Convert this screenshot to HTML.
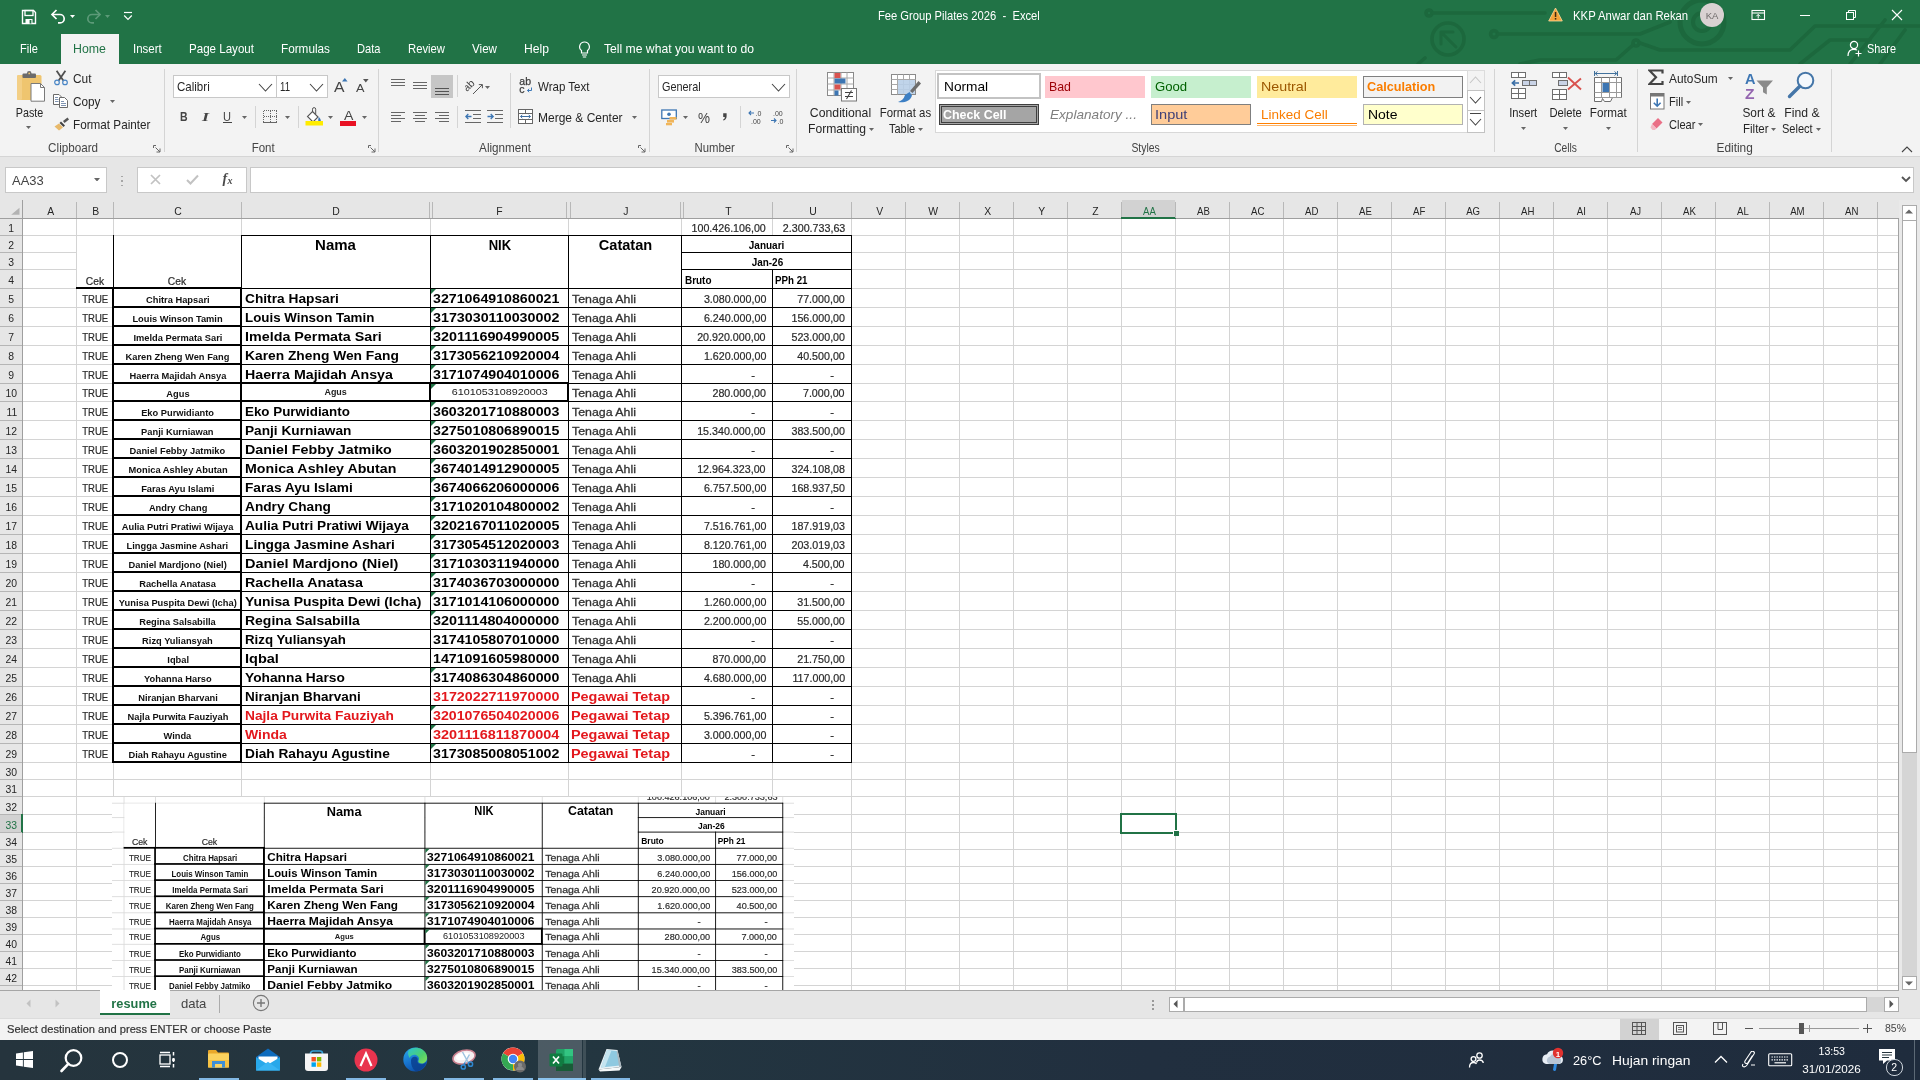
<!DOCTYPE html>
<html><head><meta charset="utf-8"><title>Fee Group Pilates 2026 - Excel</title>
<style>
html,body{margin:0;padding:0;background:#fff}
body{width:1920px;height:1080px;overflow:hidden;position:relative;font-family:"Liberation Sans",sans-serif}
.r{position:absolute;display:block}
.t{position:absolute;white-space:pre;display:block}
</style></head>
<body>
<div id="root" style="position:absolute;left:0;top:0;width:1920px;height:1080px;will-change:transform">
<div class="r" style="left:0px;top:0px;width:1920px;height:64px;background:#217346;"></div>
<svg class="r" style="left:1400px;top:0px;" width="520" height="64" viewBox="1400 0 520 64"><g fill="none" stroke="#1c683d" stroke-width="3.6" stroke-linecap="round" stroke-linejoin="round"><circle cx="1448" cy="39" r="16"/><path d="M1456 47 L1441 32 M1441 44 V32 H1453" stroke-width="3"/><circle cx="1429" cy="13" r="3"/><path d="M1433 13 H1545"/><circle cx="1494" cy="34" r="3.4"/><path d="M1498 34 H1640 L1670 22"/><circle cx="1636" cy="43" r="3"/><path d="M1633 45 L1616 60 H1540 L1520 64"/><path d="M1425 58 L1418 64"/><circle cx="1702" cy="22" r="22" stroke-width="5"/><circle cx="1702" cy="22" r="9" stroke-width="4"/><path d="M1640 43 L1660 50 H1790 L1815 26 H1920"/><path d="M1850 64 L1885 20 M1880 64 L1905 30 M1800 64 L1830 40 H1870"/></g></svg>
<span class="t" style="left:870.12px;top:9px;font-size:12.3px;line-height:14px;color:#fff;transform:scaleX(0.9113);transform-origin:50% 50%;">Fee Group Pilates 2026  -  Excel</span>
<span class="t" style="left:1573.30px;top:9px;font-size:12.3px;line-height:14px;color:#fff;transform:scaleX(0.9223);transform-origin:0 50%;">KKP Anwar dan Rekan</span>
<div class="r" style="left:61px;top:34px;width:58px;height:30px;background:#f3f3f3;"></div>
<span class="t" style="left:20.20px;top:42px;font-size:12.6px;line-height:14px;color:#fff;transform:scaleX(0.8767);transform-origin:0 50%;">File</span>
<span class="t" style="left:73.30px;top:42px;font-size:12.6px;line-height:14px;color:#217346;transform:scaleX(0.9803);transform-origin:0 50%;">Home</span>
<span class="t" style="left:133.30px;top:42px;font-size:12.6px;line-height:14px;color:#fff;transform:scaleX(0.9107);transform-origin:0 50%;">Insert</span>
<span class="t" style="left:189.20px;top:42px;font-size:12.6px;line-height:14px;color:#fff;transform:scaleX(0.9186);transform-origin:0 50%;">Page Layout</span>
<span class="t" style="left:281.25px;top:42px;font-size:12.6px;line-height:14px;color:#fff;transform:scaleX(0.9322);transform-origin:0 50%;">Formulas</span>
<span class="t" style="left:357.30px;top:42px;font-size:12.6px;line-height:14px;color:#fff;transform:scaleX(0.8829);transform-origin:0 50%;">Data</span>
<span class="t" style="left:408.00px;top:42px;font-size:12.6px;line-height:14px;color:#fff;transform:scaleX(0.8956);transform-origin:0 50%;">Review</span>
<span class="t" style="left:472.00px;top:42px;font-size:12.6px;line-height:14px;color:#fff;transform:scaleX(0.9231);transform-origin:0 50%;">View</span>
<span class="t" style="left:524.00px;top:42px;font-size:12.6px;line-height:14px;color:#fff;transform:scaleX(0.9647);transform-origin:0 50%;">Help</span>
<span class="t" style="left:604.00px;top:42px;font-size:12.6px;line-height:14px;color:#fff;transform:scaleX(0.9647);transform-origin:0 50%;">Tell me what you want to do</span>
<span class="t" style="left:1867.20px;top:42px;font-size:12.6px;line-height:14px;color:#fff;transform:scaleX(0.8625);transform-origin:0 50%;">Share</span>
<svg class="r" style="left:21px;top:9px;" width="16" height="16" viewBox="0 0 16 16"><path d="M1.5 1.5 H12.5 L14.5 3.5 V14.5 H1.5 Z" fill="none" stroke="#fff" stroke-width="1.4"/><rect x="4" y="1.5" width="8" height="5" fill="none" stroke="#fff" stroke-width="1.3"/><rect x="4.5" y="10" width="7" height="4.5" fill="#fff"/><rect x="8.6" y="11" width="1.8" height="3.5" fill="#217346"/></svg>
<svg class="r" style="left:50px;top:9px;" width="17" height="15" viewBox="0 0 17 15"><path d="M2 5.5 H10 a4.2 4.2 0 0 1 0 8.4 H8" fill="none" stroke="#fff" stroke-width="1.7"/><path d="M6.5 1 L2 5.5 L6.5 10" fill="none" stroke="#fff" stroke-width="1.7"/></svg>
<svg class="r" style="left:70px;top:15px;" width="5" height="3" viewBox="0 0 5 3"><path d="M0 0 H5 L2.5 3 Z" fill="#fff"/></svg>
<svg class="r" style="left:85px;top:9px;" width="17" height="15" viewBox="0 0 17 15"><path d="M15 5.5 H7 a4.2 4.2 0 0 0 0 8.4 H9" fill="none" stroke="#5c9a78" stroke-width="1.7"/><path d="M10.5 1 L15 5.5 L10.5 10" fill="none" stroke="#5c9a78" stroke-width="1.7"/></svg>
<svg class="r" style="left:105.2px;top:15px;" width="5" height="3" viewBox="0 0 5 3"><path d="M0 0 H5 L2.5 3 Z" fill="#5c9a78"/></svg>
<svg class="r" style="left:123px;top:11px;" width="10" height="10" viewBox="0 0 10 10"><path d="M1 1.5 H9" stroke="#fff" stroke-width="1.2"/><path d="M1.2 4.5 L5 8.3 L8.8 4.5" fill="none" stroke="#fff" stroke-width="1.2"/></svg>
<svg class="r" style="left:578px;top:41px;" width="13" height="17" viewBox="0 0 13 17"><path d="M6.5 1 a4.8 4.8 0 0 1 3 8.6 V12 H3.5 V9.6 A4.8 4.8 0 0 1 6.5 1 Z" fill="none" stroke="#fff" stroke-width="1.2"/><path d="M4 14 H9 M4.8 16 H8.2" stroke="#fff" stroke-width="1.1"/></svg>
<svg class="r" style="left:1548px;top:7px;" width="15" height="15" viewBox="0 0 15 15"><path d="M7.5 1 L14.3 14 H0.7 Z" fill="#f2a33a" stroke="#fbd9a0" stroke-width="0.8"/><rect x="6.8" y="5" width="1.5" height="5" fill="#3b2a10"/><rect x="6.8" y="11" width="1.5" height="1.6" fill="#3b2a10"/></svg>
<div class="r" style="left:1700px;top:3px;width:24px;height:24px;border-radius:12px;background:#d9d2d2"></div>
<span class="t" style="left:1705.66px;top:10px;font-size:9.5px;line-height:11px;color:#6e6a6a;">KA</span>
<svg class="r" style="left:1751px;top:9px;" width="15" height="12" viewBox="0 0 15 12"><rect x="1" y="1.5" width="12.5" height="9" fill="none" stroke="#fff" stroke-width="1.1"/><path d="M1 4 H13.5" stroke="#fff" stroke-width="1.1"/><path d="M7.2 9.5 V5.6 M5.3 7.3 L7.2 5.4 L9.1 7.3" fill="none" stroke="#fff" stroke-width="1"/></svg>
<div class="r" style="left:1800px;top:15px;width:10px;height:1px;background:#fff;"></div>
<svg class="r" style="left:1845px;top:9px;" width="12" height="12" viewBox="0 0 12 12"><rect x="1.5" y="3.5" width="7" height="7" fill="none" stroke="#fff" stroke-width="1"/><path d="M3.5 3.5 V1.5 H10.5 V8.5 H8.5" fill="none" stroke="#fff" stroke-width="1"/></svg>
<svg class="r" style="left:1891px;top:9px;" width="12" height="12" viewBox="0 0 12 12"><path d="M1 1 L11 11 M11 1 L1 11" stroke="#fff" stroke-width="1.1"/></svg>
<svg class="r" style="left:1847px;top:40px;" width="16" height="18" viewBox="0 0 16 18"><circle cx="7" cy="5" r="3.6" fill="none" stroke="#fff" stroke-width="1.2"/><path d="M1 16 C1 11 3.5 9.3 7 9.3 C8.3 9.3 9.3 9.6 10 10" fill="none" stroke="#fff" stroke-width="1.2"/><path d="M11.5 10.5 V16.5 M8.5 13.5 H14.5" stroke="#fff" stroke-width="1.2"/></svg>
<div class="r" style="left:0px;top:64px;width:1920px;height:92px;background:#f3f3f3;"></div>
<div class="r" style="left:0px;top:156px;width:1920px;height:1px;background:#d5d5d5;"></div>
<svg class="r" style="left:16px;top:71px;" width="30" height="32" viewBox="0 0 30 32"><rect x="1" y="4" width="24.5" height="25" rx="1.5" fill="#efc56f"/><rect x="1" y="4" width="5" height="25" rx="1.5" fill="#f3cf86"/><rect x="6.5" y="2.5" width="13.5" height="4.6" rx="1" fill="#6b6b6b"/><circle cx="13.2" cy="2.4" r="2.3" fill="#6b6b6b"/><circle cx="13.2" cy="2.4" r="0.9" fill="#efc56f"/><path d="M15 12.5 H24.5 L28.5 16.5 V30.2 H15 Z" fill="#fff" stroke="#7a7a7a" stroke-width="1"/><path d="M24.5 12.5 V16.5 H28.5" fill="none" stroke="#7a7a7a" stroke-width="1"/></svg>
<span class="t" style="left:13.70px;top:106px;font-size:12.2px;line-height:14px;color:#262626;transform:scaleX(0.8815);transform-origin:50% 50%;">Paste</span>
<svg class="r" style="left:26px;top:126.2px;" width="5" height="3" viewBox="0 0 5 3"><path d="M0 0 H5 L2.5 3 Z" fill="#666"/></svg>
<svg class="r" style="left:53px;top:70px;" width="16" height="16" viewBox="0 0 16 16"><path d="M3.6 0.8 L10.3 10.6 M12.4 0.8 L5.7 10.6" stroke="#505050" stroke-width="1.8"/><circle cx="4" cy="12.4" r="2.3" fill="none" stroke="#4a86c6" stroke-width="1.2"/><circle cx="12" cy="12.4" r="2.3" fill="none" stroke="#4a86c6" stroke-width="1.2"/></svg>
<span class="t" style="left:72.50px;top:72px;font-size:12.2px;line-height:14px;color:#262626;transform:scaleX(0.9744);transform-origin:0 50%;">Cut</span>
<svg class="r" style="left:53px;top:94px;" width="16" height="14" viewBox="0 0 16 14"><path d="M0.5 0.5 H6 L8.5 3 V10.5 H0.5 Z" fill="#fff" stroke="#6a6a6a" stroke-width="1"/><path d="M2 3.5 H5 M2 5.5 H5.5 M2 7.5 H5.5" stroke="#6f87a8" stroke-width="0.9"/><path d="M6.5 3.5 H11.5 L14.5 6.5 V13.5 H6.5 Z" fill="#fff" stroke="#6a6a6a" stroke-width="1"/><path d="M8 7.5 H11 M8 9.5 H13 M8 11.5 H13" stroke="#6f87a8" stroke-width="0.9"/></svg>
<span class="t" style="left:72.50px;top:95px;font-size:12.2px;line-height:14px;color:#262626;transform:scaleX(0.9655);transform-origin:0 50%;">Copy</span>
<svg class="r" style="left:110px;top:100.2px;" width="5" height="3" viewBox="0 0 5 3"><path d="M0 0 H5 L2.5 3 Z" fill="#666"/></svg>
<svg class="r" style="left:54px;top:117px;" width="16" height="14" viewBox="0 0 16 14"><path d="M9 4 L13.5 0.5 L15 2.5 L10.5 6 Z" fill="#555"/><path d="M7 4.5 L11 8.5 L9.5 10 L5.5 6 Z" fill="#444"/><path d="M5 6.5 L9 10.5 L5 13.5 L0.5 9.5 Z" fill="#e8b96a"/></svg>
<span class="t" style="left:72.50px;top:118px;font-size:12.2px;line-height:14px;color:#262626;transform:scaleX(0.9605);transform-origin:0 50%;">Format Painter</span>
<span class="t" style="left:47.39px;top:141px;font-size:12.2px;line-height:14px;color:#444;transform:scaleX(0.9575);transform-origin:50% 50%;">Clipboard</span>
<svg class="r" style="left:153px;top:144.5px;" width="8" height="8" viewBox="0 0 8 8"><path d="M0.5 3 V0.5 H3" fill="none" stroke="#666" stroke-width="1"/><path d="M2.5 2.5 L7 7 M7 3.5 V7 H3.5" fill="none" stroke="#666" stroke-width="1"/></svg>
<div class="r" style="left:164px;top:69px;width:1px;height:83px;background:#d4d4d4;"></div>
<div class="r" style="left:173px;top:75px;width:102px;height:21px;background:#fff;border:1px solid #c8c8c8"></div>
<div class="r" style="left:276px;top:75px;width:50px;height:21px;background:#fff;border:1px solid #c8c8c8"></div>
<span class="t" style="left:176.70px;top:79px;font-size:12.8px;line-height:15px;color:#262626;transform:scaleX(0.9014);transform-origin:0 50%;">Calibri</span>
<svg class="r" style="left:257.5px;top:82.7px;" width="15" height="9" viewBox="0 0 15 9"><path d="M1 1 L7.5 8 L14 1" fill="none" stroke="#444" stroke-width="1.1"/></svg>
<span class="t" style="left:279.80px;top:79px;font-size:12.8px;line-height:15px;color:#262626;transform:scaleX(0.7526);transform-origin:0 50%;">11</span>
<svg class="r" style="left:309.1px;top:82.7px;" width="15" height="9" viewBox="0 0 15 9"><path d="M1 1 L7.5 8 L14 1" fill="none" stroke="#444" stroke-width="1.1"/></svg>
<span class="t" style="left:334.00px;top:79px;font-size:14.5px;line-height:16px;color:#444;transform:scaleX(1.0856);transform-origin:0 50%;">A</span>
<svg class="r" style="left:341.5px;top:78px;" width="6" height="4" viewBox="0 0 6 4"><path d="M0 3.5 L2.8 0 L5.6 3.5 Z" fill="#3d76b3"/></svg>
<span class="t" style="left:356.20px;top:81px;font-size:11.8px;line-height:14px;color:#444;transform:scaleX(1.0799);transform-origin:0 50%;">A</span>
<svg class="r" style="left:362.5px;top:78.5px;" width="6" height="4" viewBox="0 0 6 4"><path d="M0 0 H5.6 L2.8 3.5 Z" fill="#555"/></svg>
<span class="t" style="left:179.60px;top:110px;font-size:12.4px;line-height:14px;color:#444;font-weight:bold;transform:scaleX(0.8487);transform-origin:0 50%;">B</span>
<span class="t" style="left:202.00px;top:110px;font-size:12.6px;line-height:14px;color:#444;font-weight:bold;font-style:italic;transform:scaleX(1.4284);transform-origin:0 50%;font-family:'Liberation Serif',serif;">I</span>
<span class="t" style="left:223.30px;top:110px;font-size:12.2px;line-height:14px;color:#444;transform:scaleX(0.9080);transform-origin:0 50%;">U</span>
<div class="r" style="left:223px;top:122px;width:9px;height:1px;background:#444;"></div>
<svg class="r" style="left:241.9px;top:116px;" width="5" height="3" viewBox="0 0 5 3"><path d="M0 0 H5 L2.5 3 Z" fill="#666"/></svg>
<div class="r" style="left:255px;top:106px;width:1px;height:22px;background:#d4d4d4;"></div>
<svg class="r" style="left:263px;top:110px;" width="15" height="14" viewBox="0 0 15 14"><path d="M1 0.5 H14 M0.5 1 V13 M13.5 1 V13 M7.5 1 V13 M1 6.5 H14" fill="none" stroke="#666" stroke-width="1" stroke-dasharray="1 1"/><path d="M0 12.5 H14" stroke="#666" stroke-width="1"/></svg>
<svg class="r" style="left:285px;top:116px;" width="5" height="3" viewBox="0 0 5 3"><path d="M0 0 H5 L2.5 3 Z" fill="#666"/></svg>
<div class="r" style="left:298px;top:106px;width:1px;height:22px;background:#d4d4d4;"></div>
<svg class="r" style="left:305px;top:107px;" width="19" height="19" viewBox="0 0 19 19"><path d="M7.5 4.5 L13 10 L8 15 L2.5 9.5 Z" fill="#fff" stroke="#555" stroke-width="1.1"/><path d="M7.5 4.8 V2.2 a1.6 1.6 0 0 1 3.2 0 V7" fill="none" stroke="#555" stroke-width="1"/><path d="M13.8 9.8 c1.2 1.6 2 2.8 2 3.7 a1.3 1.3 0 0 1 -2.6 0 c0 -0.9 0.2 -2 0.6 -3.7 Z" fill="#3d76b3"/><rect x="0.5" y="14" width="17.5" height="4.5" fill="#ffec00"/></svg>
<svg class="r" style="left:327.5px;top:116px;" width="5" height="3" viewBox="0 0 5 3"><path d="M0 0 H5 L2.5 3 Z" fill="#666"/></svg>
<span class="t" style="left:343.50px;top:108px;font-size:13.6px;line-height:15px;color:#444;transform:scaleX(1.0362);transform-origin:0 50%;">A</span>
<div class="r" style="left:340px;top:121px;width:16px;height:4.5px;background:#e81123;"></div>
<svg class="r" style="left:362.1px;top:116px;" width="5" height="3" viewBox="0 0 5 3"><path d="M0 0 H5 L2.5 3 Z" fill="#666"/></svg>
<span class="t" style="left:250.99px;top:141px;font-size:12.2px;line-height:14px;color:#444;transform:scaleX(0.9421);transform-origin:50% 50%;">Font</span>
<svg class="r" style="left:368px;top:144.5px;" width="8" height="8" viewBox="0 0 8 8"><path d="M0.5 3 V0.5 H3" fill="none" stroke="#666" stroke-width="1"/><path d="M2.5 2.5 L7 7 M7 3.5 V7 H3.5" fill="none" stroke="#666" stroke-width="1"/></svg>
<div class="r" style="left:378px;top:69px;width:1px;height:83px;background:#d4d4d4;"></div>
<svg class="r" style="left:391px;top:79px;" width="16" height="9" viewBox="0 0 16 9"><rect x="0" y="0" width="14" height="1" fill="#666"/><rect x="0" y="3" width="14" height="1" fill="#666"/><rect x="0" y="6" width="14" height="1" fill="#666"/></svg>
<svg class="r" style="left:413px;top:82px;" width="16" height="9" viewBox="0 0 16 9"><rect x="0" y="0" width="14" height="1" fill="#666"/><rect x="0" y="3" width="14" height="1" fill="#666"/><rect x="0" y="6" width="14" height="1" fill="#666"/></svg>
<div class="r" style="left:431px;top:75px;width:22px;height:23px;background:#c6c6c6;"></div>
<svg class="r" style="left:434.7px;top:87.5px;" width="16" height="9" viewBox="0 0 16 9"><rect x="0" y="0" width="14" height="1" fill="#555"/><rect x="0" y="3" width="14" height="1" fill="#555"/><rect x="0" y="6" width="14" height="1" fill="#555"/></svg>
<div class="r" style="left:457px;top:75px;width:1px;height:22px;background:#d4d4d4;"></div>
<svg class="r" style="left:465px;top:76px;" width="20" height="20" viewBox="0 0 20 20"><text x="-1" y="11.5" font-family="Liberation Sans" font-size="10.5" fill="#444" transform="rotate(-45 6 10)">ab</text><path d="M8 18 L17.2 8.8 M13.8 8.6 H17.4 V12.2" fill="none" stroke="#555" stroke-width="1"/></svg>
<svg class="r" style="left:484.7px;top:86px;" width="5" height="3" viewBox="0 0 5 3"><path d="M0 0 H5 L2.5 3 Z" fill="#666"/></svg>
<div class="r" style="left:510px;top:73px;width:1px;height:55px;background:#d4d4d4;"></div>
<svg class="r" style="left:519px;top:76px;" width="15" height="19" viewBox="0 0 15 19"><text x="0.3" y="9" font-family="Liberation Sans" font-size="10.5" fill="#3b3b3b" stroke="#3b3b3b" stroke-width="0.25">ab</text><text x="0.3" y="17.2" font-family="Liberation Sans" font-size="10.5" fill="#3b3b3b" stroke="#3b3b3b" stroke-width="0.25">c</text><path d="M12.5 11.5 V14.5 H8.5 M10.2 12.8 L8.4 14.5 L10.2 16.2" fill="none" stroke="#3b77b7" stroke-width="1"/></svg>
<span class="t" style="left:537.50px;top:80px;font-size:12.2px;line-height:14px;color:#262626;transform:scaleX(0.9454);transform-origin:0 50%;">Wrap Text</span>
<svg class="r" style="left:391px;top:112px;" width="16" height="12" viewBox="0 0 16 12"><rect x="0" y="0" width="14" height="1" fill="#666"/><rect x="0" y="3" width="10" height="1" fill="#666"/><rect x="0" y="6" width="14" height="1" fill="#666"/><rect x="0" y="9" width="10" height="1" fill="#666"/></svg>
<svg class="r" style="left:413px;top:112px;" width="16" height="12" viewBox="0 0 16 12"><rect x="0" y="0" width="14" height="1" fill="#666"/><rect x="2" y="3" width="10" height="1" fill="#666"/><rect x="0" y="6" width="14" height="1" fill="#666"/><rect x="2" y="9" width="10" height="1" fill="#666"/></svg>
<svg class="r" style="left:435px;top:112px;" width="16" height="12" viewBox="0 0 16 12"><rect x="0" y="0" width="14" height="1" fill="#666"/><rect x="4" y="3" width="10" height="1" fill="#666"/><rect x="0" y="6" width="14" height="1" fill="#666"/><rect x="4" y="9" width="10" height="1" fill="#666"/></svg>
<div class="r" style="left:457px;top:106px;width:1px;height:22px;background:#d4d4d4;"></div>
<svg class="r" style="left:464.5px;top:110px;" width="17" height="14" viewBox="0 0 17 14"><path d="M0 0.5 H16 M8 4.5 H16 M8 8.5 H16 M0 12.5 H16" stroke="#666" stroke-width="1"/><path d="M6.5 6.5 H0.8 M3.3 4 L0.8 6.5 L3.3 9" fill="none" stroke="#3d76b3" stroke-width="1.3"/></svg>
<svg class="r" style="left:487px;top:110px;" width="17" height="14" viewBox="0 0 17 14"><path d="M0 0.5 H16 M8 4.5 H16 M8 8.5 H16 M0 12.5 H16" stroke="#666" stroke-width="1"/><path d="M0.5 6.5 H6.2 M3.7 4 L6.2 6.5 L3.7 9" fill="none" stroke="#3d76b3" stroke-width="1.3"/></svg>
<svg class="r" style="left:518px;top:109px;" width="16" height="16" viewBox="0 0 16 16"><rect x="0.5" y="0.5" width="14" height="14" fill="#fff" stroke="#666" stroke-width="1"/><path d="M0.5 4.5 H14.5 M0.5 10.5 H14.5 M7.5 0.5 V4.5 M7.5 10.5 V14.5" stroke="#666" stroke-width="1"/><path d="M2.5 7.5 H12.5 M4.3 5.8 L2.6 7.5 L4.3 9.2 M10.7 5.8 L12.4 7.5 L10.7 9.2" fill="none" stroke="#3f6fa3" stroke-width="1"/></svg>
<span class="t" style="left:537.50px;top:111px;font-size:12.2px;line-height:14px;color:#262626;transform:scaleX(0.9835);transform-origin:0 50%;">Merge &amp; Center</span>
<svg class="r" style="left:631.7px;top:116px;" width="5" height="3" viewBox="0 0 5 3"><path d="M0 0 H5 L2.5 3 Z" fill="#666"/></svg>
<span class="t" style="left:478.37px;top:141px;font-size:12.2px;line-height:14px;color:#444;transform:scaleX(0.9585);transform-origin:50% 50%;">Alignment</span>
<svg class="r" style="left:638px;top:144.5px;" width="8" height="8" viewBox="0 0 8 8"><path d="M0.5 3 V0.5 H3" fill="none" stroke="#666" stroke-width="1"/><path d="M2.5 2.5 L7 7 M7 3.5 V7 H3.5" fill="none" stroke="#666" stroke-width="1"/></svg>
<div class="r" style="left:649px;top:69px;width:1px;height:83px;background:#d4d4d4;"></div>
<div class="r" style="left:658px;top:75px;width:130px;height:21px;background:#fff;border:1px solid #c8c8c8"></div>
<span class="t" style="left:661.80px;top:79px;font-size:12.8px;line-height:15px;color:#262626;transform:scaleX(0.8498);transform-origin:0 50%;">General</span>
<svg class="r" style="left:770.5px;top:82.7px;" width="15" height="9" viewBox="0 0 15 9"><path d="M1 1 L7.5 8 L14 1" fill="none" stroke="#444" stroke-width="1.1"/></svg>
<svg class="r" style="left:661px;top:108.5px;" width="17" height="18" viewBox="0 0 17 18"><rect x="0.8" y="1" width="14.5" height="8.5" fill="#fff" stroke="#3d76b3" stroke-width="1.3"/><circle cx="8" cy="5.2" r="1.8" fill="#3d76b3"/><rect x="8.5" y="8" width="7" height="2.6" fill="#f0b55a"/><rect x="6" y="11" width="7" height="2.6" fill="#f0b55a"/><rect x="5" y="14" width="6" height="2.3" fill="#f0b55a"/></svg>
<svg class="r" style="left:683.1px;top:116px;" width="5" height="3" viewBox="0 0 5 3"><path d="M0 0 H5 L2.5 3 Z" fill="#666"/></svg>
<span class="t" style="left:697.70px;top:110px;font-size:14px;line-height:16px;color:#444;transform:scaleX(0.9640);transform-origin:0 50%;">%</span>
<svg class="r" style="left:722px;top:113px;" width="6" height="8" viewBox="0 0 6 8"><path d="M1.2 0.3 H4.6 V3.2 C4.6 5.4 3.4 6.9 1.4 7.5 L1 6.6 C2.2 6.1 2.8 5.2 2.8 3.9 H1.2 Z" fill="#444"/></svg>
<div class="r" style="left:740px;top:106px;width:1px;height:22px;background:#d4d4d4;"></div>
<svg class="r" style="left:748px;top:110px;" width="16" height="14" viewBox="0 0 16 14"><path d="M6 3 H1 M3 1 L1 3 L3 5" fill="none" stroke="#3d76b3" stroke-width="1.1"/><text x="7.5" y="6" font-family="Liberation Sans" font-size="7" fill="#444">.0</text><text x="3" y="13.5" font-family="Liberation Sans" font-size="7" fill="#444">.00</text></svg>
<svg class="r" style="left:770px;top:110px;" width="16" height="14" viewBox="0 0 16 14"><text x="3" y="6" font-family="Liberation Sans" font-size="7" fill="#444">.00</text><path d="M1 10.5 H6 M4 8.5 L6 10.5 L4 12.5" fill="none" stroke="#3d76b3" stroke-width="1.1"/><text x="7.5" y="13.5" font-family="Liberation Sans" font-size="7" fill="#444">.0</text></svg>
<span class="t" style="left:692.90px;top:141px;font-size:12.2px;line-height:14px;color:#444;transform:scaleX(0.9310);transform-origin:50% 50%;">Number</span>
<svg class="r" style="left:785.5px;top:144.5px;" width="8" height="8" viewBox="0 0 8 8"><path d="M0.5 3 V0.5 H3" fill="none" stroke="#666" stroke-width="1"/><path d="M2.5 2.5 L7 7 M7 3.5 V7 H3.5" fill="none" stroke="#666" stroke-width="1"/></svg>
<div class="r" style="left:796px;top:69px;width:1px;height:83px;background:#d4d4d4;"></div>
<svg class="r" style="left:827px;top:72px;" width="31" height="31" viewBox="0 0 31 31"><rect x="0.5" y="0.5" width="26" height="23" fill="#fff" stroke="#8a8a8a"/><path d="M0.5 6 H26.5 M0.5 12 H26.5 M0.5 18 H26.5 M7 0.5 V23.5 M14 0.5 V23.5 M20 0.5 V23.5" stroke="#a8a8a8" stroke-width="1"/><rect x="7.5" y="1" width="6" height="5" fill="#d9534f"/><rect x="7.5" y="6.5" width="11" height="5" fill="#3d76b3"/><rect x="7.5" y="12.5" width="6" height="5" fill="#d9534f"/><rect x="7.5" y="18.5" width="4" height="5" fill="#3d76b3"/><rect x="14.5" y="16.5" width="15" height="12.5" fill="#fff" stroke="#777"/><path d="M18 20.5 H26 M18 24.5 H26 M24.5 18.5 L19.5 27" stroke="#444" stroke-width="1.1"/></svg>
<span class="t" style="left:810.48px;top:106px;font-size:12.2px;line-height:14px;color:#262626;transform:scaleX(1.0042);transform-origin:50% 50%;">Conditional</span>
<span class="t" style="left:807.50px;top:122px;font-size:12.2px;line-height:14px;color:#262626;transform:scaleX(0.9947);transform-origin:0 50%;">Formatting</span>
<svg class="r" style="left:868.9px;top:127.7px;" width="5" height="3" viewBox="0 0 5 3"><path d="M0 0 H5 L2.5 3 Z" fill="#666"/></svg>
<svg class="r" style="left:891px;top:74px;" width="31" height="30" viewBox="0 0 31 30"><rect x="0.5" y="0.5" width="24" height="20" fill="#fff" stroke="#8a8a8a"/><path d="M0.5 5.5 H24.5 M0.5 10.5 H24.5 M0.5 15.5 H24.5 M6.5 0.5 V20.5 M12.5 0.5 V20.5 M18.5 0.5 V20.5" stroke="#a8a8a8"/><rect x="7" y="6" width="17" height="14" fill="#b9cfe8" opacity="0.9"/><path d="M19 17 L27.5 7 L30 9.5 L21.5 19 Z" fill="#6d6d6d"/><path d="M14 21 C13 25 10 27 7 28 C12 29 19 28 21 21.5 L18.5 18 Z" fill="#3c7fc4"/></svg>
<span class="t" style="left:877.94px;top:106px;font-size:12.2px;line-height:14px;color:#262626;transform:scaleX(0.9360);transform-origin:50% 50%;">Format as</span>
<span class="t" style="left:888.90px;top:122px;font-size:12.2px;line-height:14px;color:#262626;transform:scaleX(0.8983);transform-origin:0 50%;">Table</span>
<svg class="r" style="left:918.1px;top:127.7px;" width="5" height="3" viewBox="0 0 5 3"><path d="M0 0 H5 L2.5 3 Z" fill="#666"/></svg>
<div class="r" style="left:935px;top:70px;width:548px;height:61px;background:#fff;border:1px solid #d8d8d8"></div>
<div class="r" style="left:937px;top:73px;width:100px;height:22px;background:#fff;border:2px solid #c3c3c3"></div>
<span class="t" style="left:943.80px;top:79px;font-size:13.4px;line-height:15px;color:#000;transform:scaleX(1.0235);transform-origin:0 50%;">Normal</span>
<div class="r" style="left:1045px;top:76px;width:100px;height:22px;background:#ffc7ce;"></div>
<span class="t" style="left:1049.20px;top:79px;font-size:13.4px;line-height:15px;color:#9c0006;transform:scaleX(0.9227);transform-origin:0 50%;">Bad</span>
<div class="r" style="left:1151px;top:76px;width:100px;height:22px;background:#c6efce;"></div>
<span class="t" style="left:1154.90px;top:79px;font-size:13.4px;line-height:15px;color:#006100;transform:scaleX(0.9823);transform-origin:0 50%;">Good</span>
<div class="r" style="left:1257px;top:76px;width:100px;height:22px;background:#ffeb9c;"></div>
<span class="t" style="left:1261.40px;top:79px;font-size:13.4px;line-height:15px;color:#9c5700;transform:scaleX(1.0649);transform-origin:0 50%;">Neutral</span>
<div class="r" style="left:1363px;top:76px;width:98px;height:20px;background:#f2f2f2;border:1px solid #7f7f7f"></div>
<span class="t" style="left:1367.10px;top:79px;font-size:13px;line-height:15px;color:#fa7d00;font-weight:bold;transform:scaleX(0.9734);transform-origin:0 50%;">Calculation</span>
<div class="r" style="left:939px;top:104px;width:94px;height:15px;background:#a5a5a5;border:3px double #3f3f3f"></div>
<span class="t" style="left:943.10px;top:107px;font-size:13px;line-height:15px;color:#fff;font-weight:bold;transform:scaleX(0.9553);transform-origin:0 50%;">Check Cell</span>
<span class="t" style="left:1049.70px;top:107px;font-size:13.2px;line-height:15px;color:#7f7f7f;font-style:italic;transform:scaleX(1.0311);transform-origin:0 50%;">Explanatory ...</span>
<div class="r" style="left:1151px;top:104px;width:98px;height:19px;background:#ffcc99;border:1px solid #7f7f7f"></div>
<span class="t" style="left:1155.30px;top:107px;font-size:13.4px;line-height:15px;color:#3f3f76;transform:scaleX(1.0871);transform-origin:0 50%;">Input</span>
<span class="t" style="left:1261.40px;top:107px;font-size:13.4px;line-height:15px;color:#fa7d00;transform:scaleX(1.0061);transform-origin:0 50%;">Linked Cell</span>
<div class="r" style="left:1257px;top:123px;width:100px;height:1px;background:#ff8001;"></div>
<div class="r" style="left:1257px;top:124.5px;width:100px;height:0.8px;background:#ffb56a;"></div>
<div class="r" style="left:1363px;top:104px;width:98px;height:19px;background:#ffffcc;border:1px solid #b2b2b2"></div>
<span class="t" style="left:1367.50px;top:107px;font-size:13.4px;line-height:15px;color:#000;transform:scaleX(1.0422);transform-origin:0 50%;">Note</span>
<div class="r" style="left:1467px;top:70px;width:16px;height:19px;background:#f3f3f3;border:1px solid #dcdcdc"></div>
<svg class="r" style="left:1469px;top:75.5px;" width="13" height="8" viewBox="0 0 13 8"><path d="M1 7 L6.5 1 L12 7" fill="none" stroke="#c6c6c6" stroke-width="1.1"/></svg>
<div class="r" style="left:1467px;top:90px;width:16px;height:19px;background:#fff;border:1px solid #c2c2c2"></div>
<svg class="r" style="left:1469px;top:96px;" width="13" height="8" viewBox="0 0 13 8"><path d="M1 1 L6.5 7 L12 1" fill="none" stroke="#444" stroke-width="1.1"/></svg>
<div class="r" style="left:1467px;top:110px;width:16px;height:21px;background:#fff;border:1px solid #c2c2c2"></div>
<div class="r" style="left:1470px;top:113px;width:11px;height:1px;background:#444;"></div>
<svg class="r" style="left:1469px;top:117.5px;" width="13" height="8" viewBox="0 0 13 8"><path d="M1 1 L6.5 7 L12 1" fill="none" stroke="#444" stroke-width="1.1"/></svg>
<span class="t" style="left:1128.89px;top:141px;font-size:12.2px;line-height:14px;color:#444;transform:scaleX(0.8548);transform-origin:50% 50%;">Styles</span>
<div class="r" style="left:1494px;top:69px;width:1px;height:83px;background:#d4d4d4;"></div>
<svg class="r" style="left:1510px;top:72px;" width="28" height="28" viewBox="0 0 28 28"><rect x="1.5" y="0.5" width="7" height="5" fill="#fff" stroke="#6e6e6e"/><rect x="8.5" y="0.5" width="7" height="5" fill="#fff" stroke="#6e6e6e"/><rect x="12.5" y="8.5" width="7" height="5" fill="#c9d3e6" stroke="#6e6e6e"/><rect x="19.5" y="8.5" width="7" height="5" fill="#c9d3e6" stroke="#6e6e6e"/><path d="M9 11 H2.4 M5.2 8.3 L2.4 11 L5.2 13.7" fill="none" stroke="#3a6ea5" stroke-width="1.7"/><rect x="1.5" y="16.5" width="7" height="5" fill="#fff" stroke="#6e6e6e"/><rect x="8.5" y="16.5" width="7" height="5" fill="#fff" stroke="#6e6e6e"/><rect x="1.5" y="21.5" width="7" height="5" fill="#fff" stroke="#6e6e6e"/><rect x="8.5" y="21.5" width="7" height="5" fill="#fff" stroke="#6e6e6e"/></svg>
<span class="t" style="left:1508.44px;top:106px;font-size:12.2px;line-height:14px;color:#262626;transform:scaleX(0.9177);transform-origin:50% 50%;">Insert</span>
<svg class="r" style="left:1521.1px;top:126.8px;" width="5" height="3" viewBox="0 0 5 3"><path d="M0 0 H5 L2.5 3 Z" fill="#666"/></svg>
<svg class="r" style="left:1552px;top:72px;" width="31" height="28" viewBox="0 0 31 28"><rect x="0.5" y="0.5" width="7" height="5" fill="#fff" stroke="#6e6e6e"/><rect x="7.5" y="0.5" width="7" height="5" fill="#fff" stroke="#6e6e6e"/><rect x="6.5" y="8.5" width="9" height="5" fill="#c9d3e6" stroke="#6e6e6e"/><rect x="0.5" y="17.5" width="7" height="5" fill="#fff" stroke="#6e6e6e"/><rect x="7.5" y="17.5" width="7" height="5" fill="#fff" stroke="#6e6e6e"/><rect x="0.5" y="22.5" width="7" height="5" fill="#fff" stroke="#6e6e6e"/><rect x="7.5" y="22.5" width="7" height="5" fill="#fff" stroke="#6e6e6e"/><path d="M16 5.5 L29 17.5 M29 6.5 L16 17.5" stroke="#d9534f" stroke-width="1.9"/></svg>
<span class="t" style="left:1547.87px;top:106px;font-size:12.2px;line-height:14px;color:#262626;transform:scaleX(0.9216);transform-origin:50% 50%;">Delete</span>
<svg class="r" style="left:1563px;top:126.8px;" width="5" height="3" viewBox="0 0 5 3"><path d="M0 0 H5 L2.5 3 Z" fill="#666"/></svg>
<svg class="r" style="left:1593px;top:70px;" width="30" height="33" viewBox="0 0 30 33"><path d="M2 3.5 H24 M1.5 1 V6 M24.5 1 V6 M4.5 1.5 L2.2 3.5 L4.5 5.5 M21.5 1.5 L23.8 3.5 L21.5 5.5" fill="none" stroke="#41719c" stroke-width="1"/><path d="M1.5 7.5 H28.5 V27.5 H19.5 L17.5 31.5 H11.5 L9.5 28.5 L8.5 31.5 H1.5 Z" fill="#fff" stroke="#6e6e6e"/><path d="M8.5 7.5 V27.5 M16.5 7.5 V27.5 M23.5 7.5 V27.5 M1.5 12.5 H28.5 M1.5 22.5 H28.5 M1.5 27.5 H28.5" stroke="#9a9a9a"/><rect x="9.5" y="13" width="6.5" height="9" fill="#3d76b3"/></svg>
<span class="t" style="left:1588.88px;top:106px;font-size:12.2px;line-height:14px;color:#262626;transform:scaleX(0.9576);transform-origin:50% 50%;">Format</span>
<svg class="r" style="left:1606.2px;top:126.8px;" width="5" height="3" viewBox="0 0 5 3"><path d="M0 0 H5 L2.5 3 Z" fill="#666"/></svg>
<span class="t" style="left:1552.44px;top:141px;font-size:12.2px;line-height:14px;color:#444;transform:scaleX(0.8408);transform-origin:50% 50%;">Cells</span>
<div class="r" style="left:1637px;top:69px;width:1px;height:83px;background:#d4d4d4;"></div>
<svg class="r" style="left:1648px;top:69px;" width="17" height="17" viewBox="0 0 17 17"><path d="M14.5 4.5 V1.5 H1.5 L8 8.2 L1.5 15 H14.5 V12" fill="none" stroke="#444" stroke-width="2.2"/></svg>
<span class="t" style="left:1668.50px;top:72px;font-size:12.2px;line-height:14px;color:#262626;transform:scaleX(0.9724);transform-origin:0 50%;">AutoSum</span>
<svg class="r" style="left:1727.8px;top:76.5px;" width="5" height="3" viewBox="0 0 5 3"><path d="M0 0 H5 L2.5 3 Z" fill="#666"/></svg>
<svg class="r" style="left:1649.5px;top:92.5px;" width="15" height="17" viewBox="0 0 15 17"><rect x="0.5" y="0.5" width="13.5" height="15.5" fill="#fff" stroke="#777"/><rect x="0.5" y="0.5" width="13.5" height="3" fill="#777"/><path d="M7.2 5.5 V13 M3.8 9.8 L7.2 13.2 L10.6 9.8" fill="none" stroke="#3d76b3" stroke-width="1.6"/></svg>
<span class="t" style="left:1668.50px;top:95px;font-size:12.2px;line-height:14px;color:#262626;transform:scaleX(0.9047);transform-origin:0 50%;">Fill</span>
<svg class="r" style="left:1686.2px;top:100.5px;" width="5" height="3" viewBox="0 0 5 3"><path d="M0 0 H5 L2.5 3 Z" fill="#666"/></svg>
<svg class="r" style="left:1650px;top:116.5px;" width="14" height="14" viewBox="0 0 14 14"><path d="M8 1 L12.5 5.5 L6.5 11.5 L2 7 Z" fill="#ea6f86"/><path d="M2 7 L6.5 11.5 L4.8 13 H2.5 L0.5 10.5 Z" fill="#f4b7c3"/></svg>
<span class="t" style="left:1668.50px;top:118px;font-size:12.2px;line-height:14px;color:#262626;transform:scaleX(0.9089);transform-origin:0 50%;">Clear</span>
<svg class="r" style="left:1698px;top:123.3px;" width="5" height="3" viewBox="0 0 5 3"><path d="M0 0 H5 L2.5 3 Z" fill="#666"/></svg>
<span class="t" style="left:1744.50px;top:70px;font-size:15px;line-height:17px;color:#3d76b3;font-weight:bold;transform:scaleX(0.9693);transform-origin:0 50%;">A</span>
<span class="t" style="left:1744.50px;top:85px;font-size:15px;line-height:17px;color:#9466b0;font-weight:bold;transform:scaleX(1.0368);transform-origin:0 50%;">Z</span>
<svg class="r" style="left:1756px;top:80px;" width="18" height="16" viewBox="0 0 18 16"><path d="M0.5 0.5 H17 L10.8 7.5 V14.5 L7 12.3 V7.5 Z" fill="#8a8a8a"/></svg>
<span class="t" style="left:1742.05px;top:106px;font-size:12.2px;line-height:14px;color:#262626;transform:scaleX(0.9734);transform-origin:50% 50%;">Sort &amp;</span>
<span class="t" style="left:1742.60px;top:122px;font-size:12.2px;line-height:14px;color:#262626;transform:scaleX(0.9442);transform-origin:0 50%;">Filter</span>
<svg class="r" style="left:1770.8px;top:127.7px;" width="5" height="3" viewBox="0 0 5 3"><path d="M0 0 H5 L2.5 3 Z" fill="#666"/></svg>
<svg class="r" style="left:1787px;top:71px;" width="29" height="29" viewBox="0 0 29 29"><circle cx="18.5" cy="9.5" r="7.8" fill="#f4f8fc" stroke="#4576a8" stroke-width="2"/><path d="M12.8 15.2 L2.5 25.5" stroke="#4576a8" stroke-width="3.4" stroke-linecap="round"/></svg>
<span class="t" style="left:1784.37px;top:106px;font-size:12.2px;line-height:14px;color:#262626;">Find &amp;</span>
<span class="t" style="left:1782.30px;top:122px;font-size:12.2px;line-height:14px;color:#262626;transform:scaleX(0.9054);transform-origin:0 50%;">Select</span>
<svg class="r" style="left:1816px;top:127.7px;" width="5" height="3" viewBox="0 0 5 3"><path d="M0 0 H5 L2.5 3 Z" fill="#666"/></svg>
<span class="t" style="left:1715.65px;top:141px;font-size:12.2px;line-height:14px;color:#444;transform:scaleX(0.9731);transform-origin:50% 50%;">Editing</span>
<div class="r" style="left:1831px;top:69px;width:1px;height:83px;background:#d4d4d4;"></div>
<svg class="r" style="left:1901px;top:146px;" width="12" height="7" viewBox="0 0 12 7"><path d="M1 6 L6 1 L11 6" fill="none" stroke="#444" stroke-width="1.1"/></svg>
<div class="r" style="left:0px;top:157px;width:1920px;height:43px;background:#e6e6e6;"></div>
<div class="r" style="left:5px;top:167px;width:100px;height:24px;background:#fff;border:1px solid #c8c8c8"></div>
<span class="t" style="left:12.00px;top:174px;font-size:12.4px;line-height:14px;color:#444;transform:scaleX(1.0450);transform-origin:0 50%;">AA33</span>
<svg class="r" style="left:93.5px;top:177.75px;" width="6" height="3.5" viewBox="0 0 6 3.5"><path d="M0 0 H6 L3 3.5 Z" fill="#666"/></svg>
<div class="r" style="left:121.3px;top:175.5px;width:1.8px;height:1.8px;background:#a6a6a6;"></div>
<div class="r" style="left:121.3px;top:180px;width:1.8px;height:1.8px;background:#a6a6a6;"></div>
<div class="r" style="left:121.3px;top:184.5px;width:1.8px;height:1.8px;background:#a6a6a6;"></div>
<div class="r" style="left:137px;top:167px;width:108px;height:24px;background:#fff;border:1px solid #c8c8c8"></div>
<svg class="r" style="left:150px;top:174px;" width="11" height="11" viewBox="0 0 11 11"><path d="M1 1 L10 10 M10 1 L1 10" stroke="#c2c2c2" stroke-width="1.7"/></svg>
<svg class="r" style="left:186px;top:174px;" width="13" height="11" viewBox="0 0 13 11"><path d="M1 6 L4.5 9.5 L12 1.5" fill="none" stroke="#c2c2c2" stroke-width="2"/></svg>
<span class="t" style="left:222.50px;top:171px;font-size:14px;line-height:16px;color:#4a4a4a;font-weight:bold;font-style:italic;font-family:'Liberation Serif',serif;">f</span>
<span class="t" style="left:227.50px;top:175px;font-size:10px;line-height:11px;color:#4a4a4a;font-weight:bold;font-style:italic;font-family:'Liberation Serif',serif;">x</span>
<div class="r" style="left:250px;top:167px;width:1662px;height:24px;background:#fff;border:1px solid #c8c8c8"></div>
<svg class="r" style="left:1901px;top:176px;" width="10" height="7" viewBox="0 0 10 7"><path d="M1 1 L5 5 L9 1" fill="none" stroke="#555" stroke-width="1.8"/></svg>
<div class="r" id="grid" style="left:0;top:200px;width:1920px;height:790px;background:#fff;overflow:hidden"><div class="r" style="left:0;top:-200px;width:1920px;height:1080px">
<div class="r" style="left:0px;top:200px;width:1899px;height:18px;background:#e6e6e6;"></div>
<div class="r" style="left:0px;top:218px;width:1899px;height:1px;background:#9f9f9f;"></div>
<div class="r" style="left:0px;top:219px;width:22px;height:771px;background:#e6e6e6;"></div>
<div class="r" style="left:22px;top:200px;width:1px;height:790px;background:#9f9f9f;"></div>
<div class="r" style="left:1899px;top:200px;width:21px;height:790px;background:#e6e6e6;"></div>
<svg class="r" style="left:11px;top:207px;" width="9" height="8" viewBox="0 0 9 8"><path d="M8.5 0.8 L8.5 7.8 L0.2 7.8 Z" fill="#b3b3b3"/></svg>
<div class="r" style="left:76px;top:202px;width:1px;height:16px;background:#b8b8b8;"></div>
<span class="t" style="left:46.56px;top:205px;font-size:11.2px;line-height:12px;color:#262626;transform:scaleX(0.9300);transform-origin:50% 50%;">A</span>
<div class="r" style="left:113px;top:202px;width:1px;height:16px;background:#b8b8b8;"></div>
<span class="t" style="left:92.06px;top:205px;font-size:11.2px;line-height:12px;color:#262626;transform:scaleX(0.9300);transform-origin:50% 50%;">B</span>
<div class="r" style="left:241px;top:202px;width:1px;height:16px;background:#b8b8b8;"></div>
<span class="t" style="left:174.26px;top:205px;font-size:11.2px;line-height:12px;color:#262626;transform:scaleX(0.9300);transform-origin:50% 50%;">C</span>
<div class="r" style="left:429px;top:202px;width:1px;height:16px;background:#b8b8b8;"></div>
<span class="t" style="left:332.26px;top:205px;font-size:11.2px;line-height:12px;color:#262626;transform:scaleX(0.9300);transform-origin:50% 50%;">D</span>
<div class="r" style="left:566px;top:202px;width:1px;height:16px;background:#b8b8b8;"></div>
<span class="t" style="left:496.38px;top:205px;font-size:11.2px;line-height:12px;color:#262626;transform:scaleX(0.9300);transform-origin:50% 50%;">F</span>
<div class="r" style="left:680px;top:202px;width:1px;height:16px;background:#b8b8b8;"></div>
<span class="t" style="left:623.00px;top:205px;font-size:11.2px;line-height:12px;color:#262626;transform:scaleX(0.9300);transform-origin:50% 50%;">J</span>
<div class="r" style="left:772px;top:202px;width:1px;height:16px;background:#b8b8b8;"></div>
<span class="t" style="left:724.88px;top:205px;font-size:11.2px;line-height:12px;color:#262626;transform:scaleX(0.9300);transform-origin:50% 50%;">T</span>
<div class="r" style="left:851px;top:202px;width:1px;height:16px;background:#b8b8b8;"></div>
<span class="t" style="left:808.76px;top:205px;font-size:11.2px;line-height:12px;color:#262626;transform:scaleX(0.9300);transform-origin:50% 50%;">U</span>
<div class="r" style="left:905px;top:202px;width:1px;height:16px;background:#b8b8b8;"></div>
<span class="t" style="left:875.56px;top:205px;font-size:11.2px;line-height:12px;color:#262626;transform:scaleX(0.9300);transform-origin:50% 50%;">V</span>
<div class="r" style="left:959px;top:202px;width:1px;height:16px;background:#b8b8b8;"></div>
<span class="t" style="left:928.01px;top:205px;font-size:11.2px;line-height:12px;color:#262626;transform:scaleX(0.9300);transform-origin:50% 50%;">W</span>
<div class="r" style="left:1013px;top:202px;width:1px;height:16px;background:#b8b8b8;"></div>
<span class="t" style="left:983.56px;top:205px;font-size:11.2px;line-height:12px;color:#262626;transform:scaleX(0.9300);transform-origin:50% 50%;">X</span>
<div class="r" style="left:1067px;top:202px;width:1px;height:16px;background:#b8b8b8;"></div>
<span class="t" style="left:1037.56px;top:205px;font-size:11.2px;line-height:12px;color:#262626;transform:scaleX(0.9300);transform-origin:50% 50%;">Y</span>
<div class="r" style="left:1121px;top:202px;width:1px;height:16px;background:#b8b8b8;"></div>
<span class="t" style="left:1091.88px;top:205px;font-size:11.2px;line-height:12px;color:#262626;transform:scaleX(0.9300);transform-origin:50% 50%;">Z</span>
<div class="r" style="left:1122px;top:200px;width:53px;height:18px;background:#d2d2d2;"></div>
<div class="r" style="left:1121px;top:217px;width:55px;height:2px;background:#217346;"></div>
<div class="r" style="left:1175px;top:202px;width:1px;height:16px;background:#b8b8b8;"></div>
<span class="t" style="left:1141.83px;top:205px;font-size:11.2px;line-height:12px;color:#217346;transform:scaleX(0.8600);transform-origin:50% 50%;">AA</span>
<div class="r" style="left:1229px;top:202px;width:1px;height:16px;background:#b8b8b8;"></div>
<span class="t" style="left:1195.83px;top:205px;font-size:11.2px;line-height:12px;color:#262626;transform:scaleX(0.8600);transform-origin:50% 50%;">AB</span>
<div class="r" style="left:1283px;top:202px;width:1px;height:16px;background:#b8b8b8;"></div>
<span class="t" style="left:1249.52px;top:205px;font-size:11.2px;line-height:12px;color:#262626;transform:scaleX(0.8600);transform-origin:50% 50%;">AC</span>
<div class="r" style="left:1337px;top:202px;width:1px;height:16px;background:#b8b8b8;"></div>
<span class="t" style="left:1303.52px;top:205px;font-size:11.2px;line-height:12px;color:#262626;transform:scaleX(0.8600);transform-origin:50% 50%;">AD</span>
<div class="r" style="left:1391px;top:202px;width:1px;height:16px;background:#b8b8b8;"></div>
<span class="t" style="left:1357.83px;top:205px;font-size:11.2px;line-height:12px;color:#262626;transform:scaleX(0.8600);transform-origin:50% 50%;">AE</span>
<div class="r" style="left:1445px;top:202px;width:1px;height:16px;background:#b8b8b8;"></div>
<span class="t" style="left:1412.14px;top:205px;font-size:11.2px;line-height:12px;color:#262626;transform:scaleX(0.8600);transform-origin:50% 50%;">AF</span>
<div class="r" style="left:1499px;top:202px;width:1px;height:16px;background:#b8b8b8;"></div>
<span class="t" style="left:1465.21px;top:205px;font-size:11.2px;line-height:12px;color:#262626;transform:scaleX(0.8600);transform-origin:50% 50%;">AG</span>
<div class="r" style="left:1553px;top:202px;width:1px;height:16px;background:#b8b8b8;"></div>
<span class="t" style="left:1519.52px;top:205px;font-size:11.2px;line-height:12px;color:#262626;transform:scaleX(0.8600);transform-origin:50% 50%;">AH</span>
<div class="r" style="left:1607px;top:202px;width:1px;height:16px;background:#b8b8b8;"></div>
<span class="t" style="left:1576.01px;top:205px;font-size:11.2px;line-height:12px;color:#262626;transform:scaleX(0.8600);transform-origin:50% 50%;">AI</span>
<div class="r" style="left:1661px;top:202px;width:1px;height:16px;background:#b8b8b8;"></div>
<span class="t" style="left:1628.76px;top:205px;font-size:11.2px;line-height:12px;color:#262626;transform:scaleX(0.8600);transform-origin:50% 50%;">AJ</span>
<div class="r" style="left:1715px;top:202px;width:1px;height:16px;background:#b8b8b8;"></div>
<span class="t" style="left:1681.83px;top:205px;font-size:11.2px;line-height:12px;color:#262626;transform:scaleX(0.8600);transform-origin:50% 50%;">AK</span>
<div class="r" style="left:1769px;top:202px;width:1px;height:16px;background:#b8b8b8;"></div>
<span class="t" style="left:1736.45px;top:205px;font-size:11.2px;line-height:12px;color:#262626;transform:scaleX(0.8600);transform-origin:50% 50%;">AL</span>
<div class="r" style="left:1823px;top:202px;width:1px;height:16px;background:#b8b8b8;"></div>
<span class="t" style="left:1788.90px;top:205px;font-size:11.2px;line-height:12px;color:#262626;transform:scaleX(0.8600);transform-origin:50% 50%;">AM</span>
<div class="r" style="left:1877px;top:202px;width:1px;height:16px;background:#b8b8b8;"></div>
<span class="t" style="left:1843.52px;top:205px;font-size:11.2px;line-height:12px;color:#262626;transform:scaleX(0.8600);transform-origin:50% 50%;">AN</span>
<div class="r" style="left:429px;top:202px;width:1px;height:16px;background:#b8b8b8;"></div>
<div class="r" style="left:432px;top:202px;width:1px;height:16px;background:#b8b8b8;"></div>
<div class="r" style="left:566px;top:202px;width:1px;height:16px;background:#b8b8b8;"></div>
<div class="r" style="left:570px;top:202px;width:1px;height:16px;background:#b8b8b8;"></div>
<div class="r" style="left:680px;top:202px;width:1px;height:16px;background:#b8b8b8;"></div>
<div class="r" style="left:683px;top:202px;width:1px;height:16px;background:#b8b8b8;"></div>
<div class="r" style="left:1877px;top:202px;width:1px;height:16px;background:#b8b8b8;"></div>
<div class="r" style="left:0px;top:235px;width:22px;height:1px;background:#b5b5b5;"></div>
<span class="t" style="left:8.39px;top:222px;font-size:11.2px;line-height:12px;color:#262626;transform:scaleX(0.9300);transform-origin:50% 50%;">1</span>
<div class="r" style="left:0px;top:252px;width:22px;height:1px;background:#b5b5b5;"></div>
<span class="t" style="left:8.39px;top:239px;font-size:11.2px;line-height:12px;color:#262626;transform:scaleX(0.9300);transform-origin:50% 50%;">2</span>
<div class="r" style="left:0px;top:269px;width:22px;height:1px;background:#b5b5b5;"></div>
<span class="t" style="left:8.39px;top:256px;font-size:11.2px;line-height:12px;color:#262626;transform:scaleX(0.9300);transform-origin:50% 50%;">3</span>
<div class="r" style="left:0px;top:288px;width:22px;height:1px;background:#b5b5b5;"></div>
<span class="t" style="left:8.39px;top:274px;font-size:11.2px;line-height:12px;color:#262626;transform:scaleX(0.9300);transform-origin:50% 50%;">4</span>
<div class="r" style="left:0px;top:307px;width:22px;height:1px;background:#b5b5b5;"></div>
<span class="t" style="left:8.39px;top:293px;font-size:11.2px;line-height:12px;color:#262626;transform:scaleX(0.9300);transform-origin:50% 50%;">5</span>
<div class="r" style="left:0px;top:326px;width:22px;height:1px;background:#b5b5b5;"></div>
<span class="t" style="left:8.39px;top:312px;font-size:11.2px;line-height:12px;color:#262626;transform:scaleX(0.9300);transform-origin:50% 50%;">6</span>
<div class="r" style="left:0px;top:345px;width:22px;height:1px;background:#b5b5b5;"></div>
<span class="t" style="left:8.39px;top:331px;font-size:11.2px;line-height:12px;color:#262626;transform:scaleX(0.9300);transform-origin:50% 50%;">7</span>
<div class="r" style="left:0px;top:364px;width:22px;height:1px;background:#b5b5b5;"></div>
<span class="t" style="left:8.39px;top:350px;font-size:11.2px;line-height:12px;color:#262626;transform:scaleX(0.9300);transform-origin:50% 50%;">8</span>
<div class="r" style="left:0px;top:383px;width:22px;height:1px;background:#b5b5b5;"></div>
<span class="t" style="left:8.39px;top:369px;font-size:11.2px;line-height:12px;color:#262626;transform:scaleX(0.9300);transform-origin:50% 50%;">9</span>
<div class="r" style="left:0px;top:401px;width:22px;height:1px;background:#b5b5b5;"></div>
<span class="t" style="left:5.27px;top:387px;font-size:11.2px;line-height:12px;color:#262626;transform:scaleX(0.9300);transform-origin:50% 50%;">10</span>
<div class="r" style="left:0px;top:420px;width:22px;height:1px;background:#b5b5b5;"></div>
<span class="t" style="left:5.69px;top:406px;font-size:11.2px;line-height:12px;color:#262626;transform:scaleX(0.9300);transform-origin:50% 50%;">11</span>
<div class="r" style="left:0px;top:439px;width:22px;height:1px;background:#b5b5b5;"></div>
<span class="t" style="left:5.27px;top:425px;font-size:11.2px;line-height:12px;color:#262626;transform:scaleX(0.9300);transform-origin:50% 50%;">12</span>
<div class="r" style="left:0px;top:458px;width:22px;height:1px;background:#b5b5b5;"></div>
<span class="t" style="left:5.27px;top:444px;font-size:11.2px;line-height:12px;color:#262626;transform:scaleX(0.9300);transform-origin:50% 50%;">13</span>
<div class="r" style="left:0px;top:477px;width:22px;height:1px;background:#b5b5b5;"></div>
<span class="t" style="left:5.27px;top:463px;font-size:11.2px;line-height:12px;color:#262626;transform:scaleX(0.9300);transform-origin:50% 50%;">14</span>
<div class="r" style="left:0px;top:496px;width:22px;height:1px;background:#b5b5b5;"></div>
<span class="t" style="left:5.27px;top:482px;font-size:11.2px;line-height:12px;color:#262626;transform:scaleX(0.9300);transform-origin:50% 50%;">15</span>
<div class="r" style="left:0px;top:515px;width:22px;height:1px;background:#b5b5b5;"></div>
<span class="t" style="left:5.27px;top:501px;font-size:11.2px;line-height:12px;color:#262626;transform:scaleX(0.9300);transform-origin:50% 50%;">16</span>
<div class="r" style="left:0px;top:534px;width:22px;height:1px;background:#b5b5b5;"></div>
<span class="t" style="left:5.27px;top:520px;font-size:11.2px;line-height:12px;color:#262626;transform:scaleX(0.9300);transform-origin:50% 50%;">17</span>
<div class="r" style="left:0px;top:553px;width:22px;height:1px;background:#b5b5b5;"></div>
<span class="t" style="left:5.27px;top:539px;font-size:11.2px;line-height:12px;color:#262626;transform:scaleX(0.9300);transform-origin:50% 50%;">18</span>
<div class="r" style="left:0px;top:572px;width:22px;height:1px;background:#b5b5b5;"></div>
<span class="t" style="left:5.27px;top:558px;font-size:11.2px;line-height:12px;color:#262626;transform:scaleX(0.9300);transform-origin:50% 50%;">19</span>
<div class="r" style="left:0px;top:591px;width:22px;height:1px;background:#b5b5b5;"></div>
<span class="t" style="left:5.27px;top:577px;font-size:11.2px;line-height:12px;color:#262626;transform:scaleX(0.9300);transform-origin:50% 50%;">20</span>
<div class="r" style="left:0px;top:610px;width:22px;height:1px;background:#b5b5b5;"></div>
<span class="t" style="left:5.27px;top:596px;font-size:11.2px;line-height:12px;color:#262626;transform:scaleX(0.9300);transform-origin:50% 50%;">21</span>
<div class="r" style="left:0px;top:629px;width:22px;height:1px;background:#b5b5b5;"></div>
<span class="t" style="left:5.27px;top:615px;font-size:11.2px;line-height:12px;color:#262626;transform:scaleX(0.9300);transform-origin:50% 50%;">22</span>
<div class="r" style="left:0px;top:648px;width:22px;height:1px;background:#b5b5b5;"></div>
<span class="t" style="left:5.27px;top:634px;font-size:11.2px;line-height:12px;color:#262626;transform:scaleX(0.9300);transform-origin:50% 50%;">23</span>
<div class="r" style="left:0px;top:667px;width:22px;height:1px;background:#b5b5b5;"></div>
<span class="t" style="left:5.27px;top:653px;font-size:11.2px;line-height:12px;color:#262626;transform:scaleX(0.9300);transform-origin:50% 50%;">24</span>
<div class="r" style="left:0px;top:686px;width:22px;height:1px;background:#b5b5b5;"></div>
<span class="t" style="left:5.27px;top:672px;font-size:11.2px;line-height:12px;color:#262626;transform:scaleX(0.9300);transform-origin:50% 50%;">25</span>
<div class="r" style="left:0px;top:705px;width:22px;height:1px;background:#b5b5b5;"></div>
<span class="t" style="left:5.27px;top:691px;font-size:11.2px;line-height:12px;color:#262626;transform:scaleX(0.9300);transform-origin:50% 50%;">26</span>
<div class="r" style="left:0px;top:724px;width:22px;height:1px;background:#b5b5b5;"></div>
<span class="t" style="left:5.27px;top:710px;font-size:11.2px;line-height:12px;color:#262626;transform:scaleX(0.9300);transform-origin:50% 50%;">27</span>
<div class="r" style="left:0px;top:743px;width:22px;height:1px;background:#b5b5b5;"></div>
<span class="t" style="left:5.27px;top:729px;font-size:11.2px;line-height:12px;color:#262626;transform:scaleX(0.9300);transform-origin:50% 50%;">28</span>
<div class="r" style="left:0px;top:762px;width:22px;height:1px;background:#b5b5b5;"></div>
<span class="t" style="left:5.27px;top:748px;font-size:11.2px;line-height:12px;color:#262626;transform:scaleX(0.9300);transform-origin:50% 50%;">29</span>
<div class="r" style="left:0px;top:779px;width:22px;height:1px;background:#b5b5b5;"></div>
<span class="t" style="left:5.27px;top:766px;font-size:11.2px;line-height:12px;color:#262626;transform:scaleX(0.9300);transform-origin:50% 50%;">30</span>
<div class="r" style="left:0px;top:796px;width:22px;height:1px;background:#b5b5b5;"></div>
<span class="t" style="left:5.27px;top:783px;font-size:11.2px;line-height:12px;color:#262626;transform:scaleX(0.9300);transform-origin:50% 50%;">31</span>
<div class="r" style="left:0px;top:814px;width:22px;height:1px;background:#b5b5b5;"></div>
<span class="t" style="left:5.27px;top:801px;font-size:11.2px;line-height:12px;color:#262626;transform:scaleX(0.9300);transform-origin:50% 50%;">32</span>
<div class="r" style="left:0px;top:815px;width:21px;height:17px;background:#d2d2d2;"></div>
<div class="r" style="left:21px;top:814px;width:2px;height:19px;background:#217346;"></div>
<div class="r" style="left:0px;top:832px;width:22px;height:1px;background:#b5b5b5;"></div>
<span class="t" style="left:5.27px;top:819px;font-size:11.2px;line-height:12px;color:#217346;transform:scaleX(0.9300);transform-origin:50% 50%;">33</span>
<div class="r" style="left:0px;top:849px;width:22px;height:1px;background:#b5b5b5;"></div>
<span class="t" style="left:5.27px;top:836px;font-size:11.2px;line-height:12px;color:#262626;transform:scaleX(0.9300);transform-origin:50% 50%;">34</span>
<div class="r" style="left:0px;top:866px;width:22px;height:1px;background:#b5b5b5;"></div>
<span class="t" style="left:5.27px;top:853px;font-size:11.2px;line-height:12px;color:#262626;transform:scaleX(0.9300);transform-origin:50% 50%;">35</span>
<div class="r" style="left:0px;top:883px;width:22px;height:1px;background:#b5b5b5;"></div>
<span class="t" style="left:5.27px;top:870px;font-size:11.2px;line-height:12px;color:#262626;transform:scaleX(0.9300);transform-origin:50% 50%;">36</span>
<div class="r" style="left:0px;top:900px;width:22px;height:1px;background:#b5b5b5;"></div>
<span class="t" style="left:5.27px;top:887px;font-size:11.2px;line-height:12px;color:#262626;transform:scaleX(0.9300);transform-origin:50% 50%;">37</span>
<div class="r" style="left:0px;top:917px;width:22px;height:1px;background:#b5b5b5;"></div>
<span class="t" style="left:5.27px;top:904px;font-size:11.2px;line-height:12px;color:#262626;transform:scaleX(0.9300);transform-origin:50% 50%;">38</span>
<div class="r" style="left:0px;top:934px;width:22px;height:1px;background:#b5b5b5;"></div>
<span class="t" style="left:5.27px;top:921px;font-size:11.2px;line-height:12px;color:#262626;transform:scaleX(0.9300);transform-origin:50% 50%;">39</span>
<div class="r" style="left:0px;top:951px;width:22px;height:1px;background:#b5b5b5;"></div>
<span class="t" style="left:5.27px;top:938px;font-size:11.2px;line-height:12px;color:#262626;transform:scaleX(0.9300);transform-origin:50% 50%;">40</span>
<div class="r" style="left:0px;top:968px;width:22px;height:1px;background:#b5b5b5;"></div>
<span class="t" style="left:5.27px;top:955px;font-size:11.2px;line-height:12px;color:#262626;transform:scaleX(0.9300);transform-origin:50% 50%;">41</span>
<div class="r" style="left:0px;top:985px;width:22px;height:1px;background:#b5b5b5;"></div>
<span class="t" style="left:5.27px;top:972px;font-size:11.2px;line-height:12px;color:#262626;transform:scaleX(0.9300);transform-origin:50% 50%;">42</span>
<div class="r" style="left:76px;top:219px;width:1px;height:771px;background:#d4d4d4;"></div>
<div class="r" style="left:113px;top:219px;width:1px;height:771px;background:#d4d4d4;"></div>
<div class="r" style="left:241px;top:219px;width:1px;height:771px;background:#d4d4d4;"></div>
<div class="r" style="left:430px;top:219px;width:1px;height:771px;background:#d4d4d4;"></div>
<div class="r" style="left:568px;top:219px;width:1px;height:771px;background:#d4d4d4;"></div>
<div class="r" style="left:681px;top:219px;width:1px;height:771px;background:#d4d4d4;"></div>
<div class="r" style="left:772px;top:219px;width:1px;height:771px;background:#d4d4d4;"></div>
<div class="r" style="left:851px;top:219px;width:1px;height:771px;background:#d4d4d4;"></div>
<div class="r" style="left:905px;top:219px;width:1px;height:771px;background:#d4d4d4;"></div>
<div class="r" style="left:959px;top:219px;width:1px;height:771px;background:#d4d4d4;"></div>
<div class="r" style="left:1013px;top:219px;width:1px;height:771px;background:#d4d4d4;"></div>
<div class="r" style="left:1067px;top:219px;width:1px;height:771px;background:#d4d4d4;"></div>
<div class="r" style="left:1121px;top:219px;width:1px;height:771px;background:#d4d4d4;"></div>
<div class="r" style="left:1175px;top:219px;width:1px;height:771px;background:#d4d4d4;"></div>
<div class="r" style="left:1229px;top:219px;width:1px;height:771px;background:#d4d4d4;"></div>
<div class="r" style="left:1283px;top:219px;width:1px;height:771px;background:#d4d4d4;"></div>
<div class="r" style="left:1337px;top:219px;width:1px;height:771px;background:#d4d4d4;"></div>
<div class="r" style="left:1391px;top:219px;width:1px;height:771px;background:#d4d4d4;"></div>
<div class="r" style="left:1445px;top:219px;width:1px;height:771px;background:#d4d4d4;"></div>
<div class="r" style="left:1499px;top:219px;width:1px;height:771px;background:#d4d4d4;"></div>
<div class="r" style="left:1553px;top:219px;width:1px;height:771px;background:#d4d4d4;"></div>
<div class="r" style="left:1607px;top:219px;width:1px;height:771px;background:#d4d4d4;"></div>
<div class="r" style="left:1661px;top:219px;width:1px;height:771px;background:#d4d4d4;"></div>
<div class="r" style="left:1715px;top:219px;width:1px;height:771px;background:#d4d4d4;"></div>
<div class="r" style="left:1769px;top:219px;width:1px;height:771px;background:#d4d4d4;"></div>
<div class="r" style="left:1823px;top:219px;width:1px;height:771px;background:#d4d4d4;"></div>
<div class="r" style="left:1877px;top:219px;width:1px;height:771px;background:#d4d4d4;"></div>
<div class="r" style="left:1898px;top:219px;width:1px;height:771px;background:#d4d4d4;"></div>
<div class="r" style="left:23px;top:235px;width:1876px;height:1px;background:#d4d4d4;"></div>
<div class="r" style="left:23px;top:252px;width:1876px;height:1px;background:#d4d4d4;"></div>
<div class="r" style="left:23px;top:269px;width:1876px;height:1px;background:#d4d4d4;"></div>
<div class="r" style="left:23px;top:288px;width:1876px;height:1px;background:#d4d4d4;"></div>
<div class="r" style="left:23px;top:307px;width:1876px;height:1px;background:#d4d4d4;"></div>
<div class="r" style="left:23px;top:326px;width:1876px;height:1px;background:#d4d4d4;"></div>
<div class="r" style="left:23px;top:345px;width:1876px;height:1px;background:#d4d4d4;"></div>
<div class="r" style="left:23px;top:364px;width:1876px;height:1px;background:#d4d4d4;"></div>
<div class="r" style="left:23px;top:383px;width:1876px;height:1px;background:#d4d4d4;"></div>
<div class="r" style="left:23px;top:401px;width:1876px;height:1px;background:#d4d4d4;"></div>
<div class="r" style="left:23px;top:420px;width:1876px;height:1px;background:#d4d4d4;"></div>
<div class="r" style="left:23px;top:439px;width:1876px;height:1px;background:#d4d4d4;"></div>
<div class="r" style="left:23px;top:458px;width:1876px;height:1px;background:#d4d4d4;"></div>
<div class="r" style="left:23px;top:477px;width:1876px;height:1px;background:#d4d4d4;"></div>
<div class="r" style="left:23px;top:496px;width:1876px;height:1px;background:#d4d4d4;"></div>
<div class="r" style="left:23px;top:515px;width:1876px;height:1px;background:#d4d4d4;"></div>
<div class="r" style="left:23px;top:534px;width:1876px;height:1px;background:#d4d4d4;"></div>
<div class="r" style="left:23px;top:553px;width:1876px;height:1px;background:#d4d4d4;"></div>
<div class="r" style="left:23px;top:572px;width:1876px;height:1px;background:#d4d4d4;"></div>
<div class="r" style="left:23px;top:591px;width:1876px;height:1px;background:#d4d4d4;"></div>
<div class="r" style="left:23px;top:610px;width:1876px;height:1px;background:#d4d4d4;"></div>
<div class="r" style="left:23px;top:629px;width:1876px;height:1px;background:#d4d4d4;"></div>
<div class="r" style="left:23px;top:648px;width:1876px;height:1px;background:#d4d4d4;"></div>
<div class="r" style="left:23px;top:667px;width:1876px;height:1px;background:#d4d4d4;"></div>
<div class="r" style="left:23px;top:686px;width:1876px;height:1px;background:#d4d4d4;"></div>
<div class="r" style="left:23px;top:705px;width:1876px;height:1px;background:#d4d4d4;"></div>
<div class="r" style="left:23px;top:724px;width:1876px;height:1px;background:#d4d4d4;"></div>
<div class="r" style="left:23px;top:743px;width:1876px;height:1px;background:#d4d4d4;"></div>
<div class="r" style="left:23px;top:762px;width:1876px;height:1px;background:#d4d4d4;"></div>
<div class="r" style="left:23px;top:779px;width:1876px;height:1px;background:#d4d4d4;"></div>
<div class="r" style="left:23px;top:796px;width:1876px;height:1px;background:#d4d4d4;"></div>
<div class="r" style="left:23px;top:814px;width:1876px;height:1px;background:#d4d4d4;"></div>
<div class="r" style="left:23px;top:832px;width:1876px;height:1px;background:#d4d4d4;"></div>
<div class="r" style="left:23px;top:849px;width:1876px;height:1px;background:#d4d4d4;"></div>
<div class="r" style="left:23px;top:866px;width:1876px;height:1px;background:#d4d4d4;"></div>
<div class="r" style="left:23px;top:883px;width:1876px;height:1px;background:#d4d4d4;"></div>
<div class="r" style="left:23px;top:900px;width:1876px;height:1px;background:#d4d4d4;"></div>
<div class="r" style="left:23px;top:917px;width:1876px;height:1px;background:#d4d4d4;"></div>
<div class="r" style="left:23px;top:934px;width:1876px;height:1px;background:#d4d4d4;"></div>
<div class="r" style="left:23px;top:951px;width:1876px;height:1px;background:#d4d4d4;"></div>
<div class="r" style="left:23px;top:968px;width:1876px;height:1px;background:#d4d4d4;"></div>
<div class="r" style="left:23px;top:985px;width:1876px;height:1px;background:#d4d4d4;"></div>
<div class="r" style="left:77px;top:236px;width:36px;height:51px;background:#fff;"></div>
<div class="r" style="left:114px;top:236px;width:127px;height:51px;background:#fff;"></div>
<div class="r" style="left:242px;top:236px;width:188px;height:52px;background:#fff;"></div>
<div class="r" style="left:431px;top:236px;width:137px;height:52px;background:#fff;"></div>
<div class="r" style="left:569px;top:236px;width:112px;height:52px;background:#fff;"></div>
<div class="r" style="left:682px;top:236px;width:169px;height:16px;background:#fff;"></div>
<div class="r" style="left:682px;top:253px;width:169px;height:16px;background:#fff;"></div>
<div class="r" style="left:241px;top:235px;width:611px;height:1px;background:#000;"></div>
<div class="r" style="left:681px;top:252px;width:171px;height:1px;background:#000;"></div>
<div class="r" style="left:681px;top:269px;width:171px;height:1px;background:#000;"></div>
<div class="r" style="left:241px;top:288px;width:611px;height:1px;background:#000;"></div>
<div class="r" style="left:241px;top:307px;width:611px;height:1px;background:#000;"></div>
<div class="r" style="left:241px;top:326px;width:611px;height:1px;background:#000;"></div>
<div class="r" style="left:241px;top:345px;width:611px;height:1px;background:#000;"></div>
<div class="r" style="left:241px;top:364px;width:611px;height:1px;background:#000;"></div>
<div class="r" style="left:241px;top:383px;width:611px;height:1px;background:#000;"></div>
<div class="r" style="left:241px;top:401px;width:611px;height:1px;background:#000;"></div>
<div class="r" style="left:241px;top:420px;width:611px;height:1px;background:#000;"></div>
<div class="r" style="left:241px;top:439px;width:611px;height:1px;background:#000;"></div>
<div class="r" style="left:241px;top:458px;width:611px;height:1px;background:#000;"></div>
<div class="r" style="left:241px;top:477px;width:611px;height:1px;background:#000;"></div>
<div class="r" style="left:241px;top:496px;width:611px;height:1px;background:#000;"></div>
<div class="r" style="left:241px;top:515px;width:611px;height:1px;background:#000;"></div>
<div class="r" style="left:241px;top:534px;width:611px;height:1px;background:#000;"></div>
<div class="r" style="left:241px;top:553px;width:611px;height:1px;background:#000;"></div>
<div class="r" style="left:241px;top:572px;width:611px;height:1px;background:#000;"></div>
<div class="r" style="left:241px;top:591px;width:611px;height:1px;background:#000;"></div>
<div class="r" style="left:241px;top:610px;width:611px;height:1px;background:#000;"></div>
<div class="r" style="left:241px;top:629px;width:611px;height:1px;background:#000;"></div>
<div class="r" style="left:241px;top:648px;width:611px;height:1px;background:#000;"></div>
<div class="r" style="left:241px;top:667px;width:611px;height:1px;background:#000;"></div>
<div class="r" style="left:241px;top:686px;width:611px;height:1px;background:#000;"></div>
<div class="r" style="left:241px;top:705px;width:611px;height:1px;background:#000;"></div>
<div class="r" style="left:241px;top:724px;width:611px;height:1px;background:#000;"></div>
<div class="r" style="left:241px;top:743px;width:611px;height:1px;background:#000;"></div>
<div class="r" style="left:241px;top:762px;width:611px;height:1px;background:#000;"></div>
<div class="r" style="left:241px;top:235px;width:1px;height:528px;background:#000;"></div>
<div class="r" style="left:430px;top:235px;width:1px;height:528px;background:#000;"></div>
<div class="r" style="left:568px;top:235px;width:1px;height:528px;background:#000;"></div>
<div class="r" style="left:681px;top:235px;width:1px;height:528px;background:#000;"></div>
<div class="r" style="left:851px;top:235px;width:1px;height:528px;background:#000;"></div>
<div class="r" style="left:772px;top:269px;width:1px;height:494px;background:#000;"></div>
<div class="r" style="left:113px;top:235px;width:1px;height:52px;background:#000;"></div>
<div class="r" style="left:112px;top:287px;width:2px;height:476px;background:#000;"></div>
<div class="r" style="left:240px;top:287px;width:2px;height:476px;background:#000;"></div>
<div class="r" style="left:112px;top:287px;width:130px;height:2px;background:#000;"></div>
<div class="r" style="left:112px;top:306px;width:130px;height:2px;background:#000;"></div>
<div class="r" style="left:112px;top:325px;width:130px;height:2px;background:#000;"></div>
<div class="r" style="left:112px;top:344px;width:130px;height:2px;background:#000;"></div>
<div class="r" style="left:112px;top:363px;width:130px;height:2px;background:#000;"></div>
<div class="r" style="left:112px;top:382px;width:130px;height:2px;background:#000;"></div>
<div class="r" style="left:112px;top:400px;width:130px;height:2px;background:#000;"></div>
<div class="r" style="left:112px;top:419px;width:130px;height:2px;background:#000;"></div>
<div class="r" style="left:112px;top:438px;width:130px;height:2px;background:#000;"></div>
<div class="r" style="left:112px;top:457px;width:130px;height:2px;background:#000;"></div>
<div class="r" style="left:112px;top:476px;width:130px;height:2px;background:#000;"></div>
<div class="r" style="left:112px;top:495px;width:130px;height:2px;background:#000;"></div>
<div class="r" style="left:112px;top:514px;width:130px;height:2px;background:#000;"></div>
<div class="r" style="left:112px;top:533px;width:130px;height:2px;background:#000;"></div>
<div class="r" style="left:112px;top:552px;width:130px;height:2px;background:#000;"></div>
<div class="r" style="left:112px;top:571px;width:130px;height:2px;background:#000;"></div>
<div class="r" style="left:112px;top:590px;width:130px;height:2px;background:#000;"></div>
<div class="r" style="left:112px;top:609px;width:130px;height:2px;background:#000;"></div>
<div class="r" style="left:112px;top:628px;width:130px;height:2px;background:#000;"></div>
<div class="r" style="left:112px;top:647px;width:130px;height:2px;background:#000;"></div>
<div class="r" style="left:112px;top:666px;width:130px;height:2px;background:#000;"></div>
<div class="r" style="left:112px;top:685px;width:130px;height:2px;background:#000;"></div>
<div class="r" style="left:112px;top:704px;width:130px;height:2px;background:#000;"></div>
<div class="r" style="left:112px;top:723px;width:130px;height:2px;background:#000;"></div>
<div class="r" style="left:112px;top:742px;width:130px;height:2px;background:#000;"></div>
<div class="r" style="left:112px;top:761px;width:130px;height:2px;background:#000;"></div>
<div class="r" style="left:76px;top:287px;width:38px;height:2px;background:#000;"></div>
<div class="r" style="left:241px;top:382px;width:328px;height:2px;background:#000;"></div>
<div class="r" style="left:241px;top:400px;width:328px;height:2px;background:#000;"></div>
<div class="r" style="left:567px;top:382px;width:2px;height:20px;background:#000;"></div>
<div class="r" style="left:429px;top:382px;width:2px;height:20px;background:#000;"></div>
<span class="t" style="left:84.54px;top:275px;font-size:11.2px;line-height:12px;color:#2b2b2b;transform:scaleX(0.9188);transform-origin:50% 50%;-webkit-text-stroke:0.22px #2b2b2b;">Cek</span>
<span class="t" style="left:167.34px;top:275px;font-size:11.2px;line-height:12px;color:#2b2b2b;transform:scaleX(0.9188);transform-origin:50% 50%;-webkit-text-stroke:0.22px #2b2b2b;">Cek</span>
<span class="t" style="left:315.07px;top:236px;font-size:15px;line-height:17px;color:#000;font-weight:bold;">Nama</span>
<span class="t" style="left:486.58px;top:236px;font-size:15px;line-height:17px;color:#000;font-weight:bold;transform:scaleX(0.8710);transform-origin:50% 50%;">NIK</span>
<span class="t" style="left:597.79px;top:236px;font-size:15px;line-height:17px;color:#000;font-weight:bold;transform:scaleX(0.9725);transform-origin:50% 50%;">Catatan</span>
<span class="t" style="left:746.94px;top:239px;font-size:11px;line-height:12px;color:#000;font-weight:bold;transform:scaleX(0.9073);transform-origin:50% 50%;">Januari</span>
<span class="t" style="left:749.57px;top:256px;font-size:11px;line-height:12px;color:#000;font-weight:bold;transform:scaleX(0.9038);transform-origin:50% 50%;">Jan-26</span>
<span class="t" style="left:684.50px;top:274px;font-size:10.8px;line-height:12px;color:#000;font-weight:bold;transform:scaleX(0.9203);transform-origin:0 50%;">Bruto</span>
<span class="t" style="left:775.30px;top:274px;font-size:10.8px;line-height:12px;color:#000;font-weight:bold;transform:scaleX(0.9023);transform-origin:0 50%;">PPh 21</span>
<span class="t" style="left:688.15px;top:222px;font-size:11.2px;line-height:12px;color:#2b2b2b;transform:scaleX(0.9543);transform-origin:100% 50%;-webkit-text-stroke:0.22px #2b2b2b;">100.426.106,00</span>
<span class="t" style="left:779.60px;top:222px;font-size:11.2px;line-height:12px;color:#2b2b2b;transform:scaleX(0.9572);transform-origin:100% 50%;-webkit-text-stroke:0.22px #2b2b2b;">2.300.733,63</span>
<span class="t" style="left:80.36px;top:293px;font-size:11.2px;line-height:12px;color:#2b2b2b;transform:scaleX(0.8528);transform-origin:50% 50%;-webkit-text-stroke:0.22px #2b2b2b;">TRUE</span>
<span class="t" style="left:144.99px;top:294px;font-size:9.6px;line-height:11px;color:#111;font-weight:bold;transform:scaleX(0.9700);transform-origin:50% 50%;">Chitra Hapsari</span>
<span class="t" style="left:244.60px;top:291px;font-size:13.6px;line-height:15px;color:#000;font-weight:bold;transform:scaleX(1.0101);transform-origin:0 50%;">Chitra Hapsari</span>
<span class="t" style="left:433.00px;top:291px;font-size:13.6px;line-height:15px;color:#000;font-weight:bold;transform:scaleX(1.0444);transform-origin:0 50%;">3271064910860021</span>
<div class="r" style="left:431px;top:289px;width:0;height:0;border-top:5px solid #217346;border-right:5px solid transparent"></div>
<span class="t" style="left:571.70px;top:293px;font-size:11.6px;line-height:12px;color:#333;transform:scaleX(1.0669);transform-origin:0 50%;-webkit-text-stroke:0.3px #333;">Tenaga Ahli</span>
<span class="t" style="left:700.60px;top:293px;font-size:11.2px;line-height:12px;color:#2b2b2b;transform:scaleX(0.9557);transform-origin:100% 50%;-webkit-text-stroke:0.22px #2b2b2b;">3.080.000,00</span>
<span class="t" style="left:795.17px;top:293px;font-size:11.2px;line-height:12px;color:#2b2b2b;transform:scaleX(0.9557);transform-origin:100% 50%;-webkit-text-stroke:0.22px #2b2b2b;">77.000,00</span>
<span class="t" style="left:80.36px;top:312px;font-size:11.2px;line-height:12px;color:#2b2b2b;transform:scaleX(0.8528);transform-origin:50% 50%;-webkit-text-stroke:0.22px #2b2b2b;">TRUE</span>
<span class="t" style="left:131.27px;top:313px;font-size:9.6px;line-height:11px;color:#111;font-weight:bold;transform:scaleX(0.9700);transform-origin:50% 50%;">Louis Winson Tamin</span>
<span class="t" style="left:244.60px;top:310px;font-size:13.6px;line-height:15px;color:#000;font-weight:bold;transform:scaleX(0.9815);transform-origin:0 50%;">Louis Winson Tamin</span>
<span class="t" style="left:433.00px;top:310px;font-size:13.6px;line-height:15px;color:#000;font-weight:bold;transform:scaleX(1.0509);transform-origin:0 50%;">3173030110030002</span>
<div class="r" style="left:431px;top:308px;width:0;height:0;border-top:5px solid #217346;border-right:5px solid transparent"></div>
<span class="t" style="left:571.70px;top:312px;font-size:11.6px;line-height:12px;color:#333;transform:scaleX(1.0669);transform-origin:0 50%;-webkit-text-stroke:0.3px #333;">Tenaga Ahli</span>
<span class="t" style="left:700.60px;top:312px;font-size:11.2px;line-height:12px;color:#2b2b2b;transform:scaleX(0.9557);transform-origin:100% 50%;-webkit-text-stroke:0.22px #2b2b2b;">6.240.000,00</span>
<span class="t" style="left:788.94px;top:312px;font-size:11.2px;line-height:12px;color:#2b2b2b;transform:scaleX(0.9557);transform-origin:100% 50%;-webkit-text-stroke:0.22px #2b2b2b;">156.000,00</span>
<span class="t" style="left:80.36px;top:331px;font-size:11.2px;line-height:12px;color:#2b2b2b;transform:scaleX(0.8528);transform-origin:50% 50%;-webkit-text-stroke:0.22px #2b2b2b;">TRUE</span>
<span class="t" style="left:131.91px;top:332px;font-size:9.6px;line-height:11px;color:#111;font-weight:bold;transform:scaleX(0.9700);transform-origin:50% 50%;">Imelda Permata Sari</span>
<span class="t" style="left:244.60px;top:329px;font-size:13.6px;line-height:15px;color:#000;font-weight:bold;transform:scaleX(1.0529);transform-origin:0 50%;">Imelda Permata Sari</span>
<span class="t" style="left:433.00px;top:329px;font-size:13.6px;line-height:15px;color:#000;font-weight:bold;transform:scaleX(1.0575);transform-origin:0 50%;">3201116904990005</span>
<div class="r" style="left:431px;top:327px;width:0;height:0;border-top:5px solid #217346;border-right:5px solid transparent"></div>
<span class="t" style="left:571.70px;top:331px;font-size:11.6px;line-height:12px;color:#333;transform:scaleX(1.0669);transform-origin:0 50%;-webkit-text-stroke:0.3px #333;">Tenaga Ahli</span>
<span class="t" style="left:694.37px;top:331px;font-size:11.2px;line-height:12px;color:#2b2b2b;transform:scaleX(0.9557);transform-origin:100% 50%;-webkit-text-stroke:0.22px #2b2b2b;">20.920.000,00</span>
<span class="t" style="left:788.94px;top:331px;font-size:11.2px;line-height:12px;color:#2b2b2b;transform:scaleX(0.9557);transform-origin:100% 50%;-webkit-text-stroke:0.22px #2b2b2b;">523.000,00</span>
<span class="t" style="left:80.36px;top:350px;font-size:11.2px;line-height:12px;color:#2b2b2b;transform:scaleX(0.8528);transform-origin:50% 50%;-webkit-text-stroke:0.22px #2b2b2b;">TRUE</span>
<span class="t" style="left:124.28px;top:351px;font-size:9.6px;line-height:11px;color:#111;font-weight:bold;transform:scaleX(0.9700);transform-origin:50% 50%;">Karen Zheng Wen Fang</span>
<span class="t" style="left:244.60px;top:348px;font-size:13.6px;line-height:15px;color:#000;font-weight:bold;transform:scaleX(1.0150);transform-origin:0 50%;">Karen Zheng Wen Fang</span>
<span class="t" style="left:433.00px;top:348px;font-size:13.6px;line-height:15px;color:#000;font-weight:bold;transform:scaleX(1.0444);transform-origin:0 50%;">3173056210920004</span>
<div class="r" style="left:431px;top:346px;width:0;height:0;border-top:5px solid #217346;border-right:5px solid transparent"></div>
<span class="t" style="left:571.70px;top:350px;font-size:11.6px;line-height:12px;color:#333;transform:scaleX(1.0669);transform-origin:0 50%;-webkit-text-stroke:0.3px #333;">Tenaga Ahli</span>
<span class="t" style="left:700.60px;top:350px;font-size:11.2px;line-height:12px;color:#2b2b2b;transform:scaleX(0.9557);transform-origin:100% 50%;-webkit-text-stroke:0.22px #2b2b2b;">1.620.000,00</span>
<span class="t" style="left:795.17px;top:350px;font-size:11.2px;line-height:12px;color:#2b2b2b;transform:scaleX(0.9557);transform-origin:100% 50%;-webkit-text-stroke:0.22px #2b2b2b;">40.500,00</span>
<span class="t" style="left:80.36px;top:369px;font-size:11.2px;line-height:12px;color:#2b2b2b;transform:scaleX(0.8528);transform-origin:50% 50%;-webkit-text-stroke:0.22px #2b2b2b;">TRUE</span>
<span class="t" style="left:127.82px;top:370px;font-size:9.6px;line-height:11px;color:#111;font-weight:bold;transform:scaleX(0.9700);transform-origin:50% 50%;">Haerra Majidah Ansya</span>
<span class="t" style="left:244.60px;top:367px;font-size:13.6px;line-height:15px;color:#000;font-weight:bold;transform:scaleX(1.0445);transform-origin:0 50%;">Haerra Majidah Ansya</span>
<span class="t" style="left:433.00px;top:367px;font-size:13.6px;line-height:15px;color:#000;font-weight:bold;transform:scaleX(1.0444);transform-origin:0 50%;">3171074904010006</span>
<div class="r" style="left:431px;top:365px;width:0;height:0;border-top:5px solid #217346;border-right:5px solid transparent"></div>
<span class="t" style="left:571.70px;top:369px;font-size:11.6px;line-height:12px;color:#333;transform:scaleX(1.0669);transform-origin:0 50%;-webkit-text-stroke:0.3px #333;">Tenaga Ahli</span>
<span class="t" style="left:751.13px;top:369px;font-size:11.2px;line-height:12px;color:#2b2b2b;-webkit-text-stroke:0.22px #2b2b2b;">-</span>
<span class="t" style="left:830.13px;top:369px;font-size:11.2px;line-height:12px;color:#2b2b2b;-webkit-text-stroke:0.22px #2b2b2b;">-</span>
<span class="t" style="left:80.36px;top:387px;font-size:11.2px;line-height:12px;color:#2b2b2b;transform:scaleX(0.8528);transform-origin:50% 50%;-webkit-text-stroke:0.22px #2b2b2b;">TRUE</span>
<span class="t" style="left:165.80px;top:388px;font-size:9.6px;line-height:11px;color:#111;font-weight:bold;transform:scaleX(0.9700);transform-origin:50% 50%;">Agus</span>
<span class="t" style="left:323.87px;top:387px;font-size:9.3px;line-height:10px;color:#222;font-weight:bold;transform:scaleX(0.9600);transform-origin:50% 50%;">Agus</span>
<span class="t" style="left:456.79px;top:386px;font-size:9.6px;line-height:11px;color:#1a1a1a;transform:scaleX(1.1238);transform-origin:50% 50%;">6101053108920003</span>
<div class="r" style="left:431px;top:384px;width:0;height:0;border-top:5px solid #217346;border-right:5px solid transparent"></div>
<span class="t" style="left:571.70px;top:387px;font-size:11.6px;line-height:12px;color:#333;transform:scaleX(1.0669);transform-origin:0 50%;-webkit-text-stroke:0.3px #333;">Tenaga Ahli</span>
<span class="t" style="left:709.94px;top:387px;font-size:11.2px;line-height:12px;color:#2b2b2b;transform:scaleX(0.9557);transform-origin:100% 50%;-webkit-text-stroke:0.22px #2b2b2b;">280.000,00</span>
<span class="t" style="left:801.40px;top:387px;font-size:11.2px;line-height:12px;color:#2b2b2b;transform:scaleX(0.9557);transform-origin:100% 50%;-webkit-text-stroke:0.22px #2b2b2b;">7.000,00</span>
<span class="t" style="left:80.36px;top:406px;font-size:11.2px;line-height:12px;color:#2b2b2b;transform:scaleX(0.8528);transform-origin:50% 50%;-webkit-text-stroke:0.22px #2b2b2b;">TRUE</span>
<span class="t" style="left:140.20px;top:407px;font-size:9.6px;line-height:11px;color:#111;font-weight:bold;transform:scaleX(0.9700);transform-origin:50% 50%;">Eko Purwidianto</span>
<span class="t" style="left:244.60px;top:404px;font-size:13.6px;line-height:15px;color:#000;font-weight:bold;transform:scaleX(0.9846);transform-origin:0 50%;">Eko Purwidianto</span>
<span class="t" style="left:433.00px;top:404px;font-size:13.6px;line-height:15px;color:#000;font-weight:bold;transform:scaleX(1.0444);transform-origin:0 50%;">3603201710880003</span>
<div class="r" style="left:431px;top:402px;width:0;height:0;border-top:5px solid #217346;border-right:5px solid transparent"></div>
<span class="t" style="left:571.70px;top:406px;font-size:11.6px;line-height:12px;color:#333;transform:scaleX(1.0669);transform-origin:0 50%;-webkit-text-stroke:0.3px #333;">Tenaga Ahli</span>
<span class="t" style="left:751.13px;top:406px;font-size:11.2px;line-height:12px;color:#2b2b2b;-webkit-text-stroke:0.22px #2b2b2b;">-</span>
<span class="t" style="left:830.13px;top:406px;font-size:11.2px;line-height:12px;color:#2b2b2b;-webkit-text-stroke:0.22px #2b2b2b;">-</span>
<span class="t" style="left:80.36px;top:425px;font-size:11.2px;line-height:12px;color:#2b2b2b;transform:scaleX(0.8528);transform-origin:50% 50%;-webkit-text-stroke:0.22px #2b2b2b;">TRUE</span>
<span class="t" style="left:140.46px;top:426px;font-size:9.6px;line-height:11px;color:#111;font-weight:bold;transform:scaleX(0.9700);transform-origin:50% 50%;">Panji Kurniawan</span>
<span class="t" style="left:244.60px;top:423px;font-size:13.6px;line-height:15px;color:#000;font-weight:bold;transform:scaleX(1.0057);transform-origin:0 50%;">Panji Kurniawan</span>
<span class="t" style="left:433.00px;top:423px;font-size:13.6px;line-height:15px;color:#000;font-weight:bold;transform:scaleX(1.0444);transform-origin:0 50%;">3275010806890015</span>
<div class="r" style="left:431px;top:421px;width:0;height:0;border-top:5px solid #217346;border-right:5px solid transparent"></div>
<span class="t" style="left:571.70px;top:425px;font-size:11.6px;line-height:12px;color:#333;transform:scaleX(1.0669);transform-origin:0 50%;-webkit-text-stroke:0.3px #333;">Tenaga Ahli</span>
<span class="t" style="left:694.37px;top:425px;font-size:11.2px;line-height:12px;color:#2b2b2b;transform:scaleX(0.9557);transform-origin:100% 50%;-webkit-text-stroke:0.22px #2b2b2b;">15.340.000,00</span>
<span class="t" style="left:788.94px;top:425px;font-size:11.2px;line-height:12px;color:#2b2b2b;transform:scaleX(0.9557);transform-origin:100% 50%;-webkit-text-stroke:0.22px #2b2b2b;">383.500,00</span>
<span class="t" style="left:80.36px;top:444px;font-size:11.2px;line-height:12px;color:#2b2b2b;transform:scaleX(0.8528);transform-origin:50% 50%;-webkit-text-stroke:0.22px #2b2b2b;">TRUE</span>
<span class="t" style="left:128.45px;top:445px;font-size:9.6px;line-height:11px;color:#111;font-weight:bold;transform:scaleX(0.9700);transform-origin:50% 50%;">Daniel Febby Jatmiko</span>
<span class="t" style="left:244.60px;top:442px;font-size:13.6px;line-height:15px;color:#000;font-weight:bold;transform:scaleX(1.0506);transform-origin:0 50%;">Daniel Febby Jatmiko</span>
<span class="t" style="left:433.00px;top:442px;font-size:13.6px;line-height:15px;color:#000;font-weight:bold;transform:scaleX(1.0444);transform-origin:0 50%;">3603201902850001</span>
<div class="r" style="left:431px;top:440px;width:0;height:0;border-top:5px solid #217346;border-right:5px solid transparent"></div>
<span class="t" style="left:571.70px;top:444px;font-size:11.6px;line-height:12px;color:#333;transform:scaleX(1.0669);transform-origin:0 50%;-webkit-text-stroke:0.3px #333;">Tenaga Ahli</span>
<span class="t" style="left:751.13px;top:444px;font-size:11.2px;line-height:12px;color:#2b2b2b;-webkit-text-stroke:0.22px #2b2b2b;">-</span>
<span class="t" style="left:830.13px;top:444px;font-size:11.2px;line-height:12px;color:#2b2b2b;-webkit-text-stroke:0.22px #2b2b2b;">-</span>
<span class="t" style="left:80.36px;top:463px;font-size:11.2px;line-height:12px;color:#2b2b2b;transform:scaleX(0.8528);transform-origin:50% 50%;-webkit-text-stroke:0.22px #2b2b2b;">TRUE</span>
<span class="t" style="left:126.68px;top:464px;font-size:9.6px;line-height:11px;color:#111;font-weight:bold;transform:scaleX(0.9700);transform-origin:50% 50%;">Monica Ashley Abutan</span>
<span class="t" style="left:244.60px;top:461px;font-size:13.6px;line-height:15px;color:#000;font-weight:bold;transform:scaleX(1.0453);transform-origin:0 50%;">Monica Ashley Abutan</span>
<span class="t" style="left:433.00px;top:461px;font-size:13.6px;line-height:15px;color:#000;font-weight:bold;transform:scaleX(1.0444);transform-origin:0 50%;">3674014912900005</span>
<div class="r" style="left:431px;top:459px;width:0;height:0;border-top:5px solid #217346;border-right:5px solid transparent"></div>
<span class="t" style="left:571.70px;top:463px;font-size:11.6px;line-height:12px;color:#333;transform:scaleX(1.0669);transform-origin:0 50%;-webkit-text-stroke:0.3px #333;">Tenaga Ahli</span>
<span class="t" style="left:694.37px;top:463px;font-size:11.2px;line-height:12px;color:#2b2b2b;transform:scaleX(0.9557);transform-origin:100% 50%;-webkit-text-stroke:0.22px #2b2b2b;">12.964.323,00</span>
<span class="t" style="left:788.94px;top:463px;font-size:11.2px;line-height:12px;color:#2b2b2b;transform:scaleX(0.9557);transform-origin:100% 50%;-webkit-text-stroke:0.22px #2b2b2b;">324.108,08</span>
<span class="t" style="left:80.36px;top:482px;font-size:11.2px;line-height:12px;color:#2b2b2b;transform:scaleX(0.8528);transform-origin:50% 50%;-webkit-text-stroke:0.22px #2b2b2b;">TRUE</span>
<span class="t" style="left:140.00px;top:483px;font-size:9.6px;line-height:11px;color:#111;font-weight:bold;transform:scaleX(0.9700);transform-origin:50% 50%;">Faras Ayu Islami</span>
<span class="t" style="left:244.60px;top:480px;font-size:13.6px;line-height:15px;color:#000;font-weight:bold;transform:scaleX(1.0076);transform-origin:0 50%;">Faras Ayu Islami</span>
<span class="t" style="left:433.00px;top:480px;font-size:13.6px;line-height:15px;color:#000;font-weight:bold;transform:scaleX(1.0444);transform-origin:0 50%;">3674066206000006</span>
<div class="r" style="left:431px;top:478px;width:0;height:0;border-top:5px solid #217346;border-right:5px solid transparent"></div>
<span class="t" style="left:571.70px;top:482px;font-size:11.6px;line-height:12px;color:#333;transform:scaleX(1.0669);transform-origin:0 50%;-webkit-text-stroke:0.3px #333;">Tenaga Ahli</span>
<span class="t" style="left:700.60px;top:482px;font-size:11.2px;line-height:12px;color:#2b2b2b;transform:scaleX(0.9557);transform-origin:100% 50%;-webkit-text-stroke:0.22px #2b2b2b;">6.757.500,00</span>
<span class="t" style="left:788.94px;top:482px;font-size:11.2px;line-height:12px;color:#2b2b2b;transform:scaleX(0.9557);transform-origin:100% 50%;-webkit-text-stroke:0.22px #2b2b2b;">168.937,50</span>
<span class="t" style="left:80.36px;top:501px;font-size:11.2px;line-height:12px;color:#2b2b2b;transform:scaleX(0.8528);transform-origin:50% 50%;-webkit-text-stroke:0.22px #2b2b2b;">TRUE</span>
<span class="t" style="left:147.67px;top:502px;font-size:9.6px;line-height:11px;color:#111;font-weight:bold;transform:scaleX(0.9700);transform-origin:50% 50%;">Andry Chang</span>
<span class="t" style="left:244.60px;top:499px;font-size:13.6px;line-height:15px;color:#000;font-weight:bold;transform:scaleX(1.0061);transform-origin:0 50%;">Andry Chang</span>
<span class="t" style="left:433.00px;top:499px;font-size:13.6px;line-height:15px;color:#000;font-weight:bold;transform:scaleX(1.0444);transform-origin:0 50%;">3171020104800002</span>
<div class="r" style="left:431px;top:497px;width:0;height:0;border-top:5px solid #217346;border-right:5px solid transparent"></div>
<span class="t" style="left:571.70px;top:501px;font-size:11.6px;line-height:12px;color:#333;transform:scaleX(1.0669);transform-origin:0 50%;-webkit-text-stroke:0.3px #333;">Tenaga Ahli</span>
<span class="t" style="left:751.13px;top:501px;font-size:11.2px;line-height:12px;color:#2b2b2b;-webkit-text-stroke:0.22px #2b2b2b;">-</span>
<span class="t" style="left:830.13px;top:501px;font-size:11.2px;line-height:12px;color:#2b2b2b;-webkit-text-stroke:0.22px #2b2b2b;">-</span>
<span class="t" style="left:80.36px;top:520px;font-size:11.2px;line-height:12px;color:#2b2b2b;transform:scaleX(0.8528);transform-origin:50% 50%;-webkit-text-stroke:0.22px #2b2b2b;">TRUE</span>
<span class="t" style="left:120.23px;top:521px;font-size:9.6px;line-height:11px;color:#111;font-weight:bold;transform:scaleX(0.9700);transform-origin:50% 50%;">Aulia Putri Pratiwi Wijaya</span>
<span class="t" style="left:244.60px;top:518px;font-size:13.6px;line-height:15px;color:#000;font-weight:bold;transform:scaleX(1.0048);transform-origin:0 50%;">Aulia Putri Pratiwi Wijaya</span>
<span class="t" style="left:433.00px;top:518px;font-size:13.6px;line-height:15px;color:#000;font-weight:bold;transform:scaleX(1.0509);transform-origin:0 50%;">3202167011020005</span>
<div class="r" style="left:431px;top:516px;width:0;height:0;border-top:5px solid #217346;border-right:5px solid transparent"></div>
<span class="t" style="left:571.70px;top:520px;font-size:11.6px;line-height:12px;color:#333;transform:scaleX(1.0669);transform-origin:0 50%;-webkit-text-stroke:0.3px #333;">Tenaga Ahli</span>
<span class="t" style="left:700.60px;top:520px;font-size:11.2px;line-height:12px;color:#2b2b2b;transform:scaleX(0.9557);transform-origin:100% 50%;-webkit-text-stroke:0.22px #2b2b2b;">7.516.761,00</span>
<span class="t" style="left:788.94px;top:520px;font-size:11.2px;line-height:12px;color:#2b2b2b;transform:scaleX(0.9557);transform-origin:100% 50%;-webkit-text-stroke:0.22px #2b2b2b;">187.919,03</span>
<span class="t" style="left:80.36px;top:539px;font-size:11.2px;line-height:12px;color:#2b2b2b;transform:scaleX(0.8528);transform-origin:50% 50%;-webkit-text-stroke:0.22px #2b2b2b;">TRUE</span>
<span class="t" style="left:125.43px;top:540px;font-size:9.6px;line-height:11px;color:#111;font-weight:bold;transform:scaleX(0.9700);transform-origin:50% 50%;">Lingga Jasmine Ashari</span>
<span class="t" style="left:244.60px;top:537px;font-size:13.6px;line-height:15px;color:#000;font-weight:bold;transform:scaleX(1.0102);transform-origin:0 50%;">Lingga Jasmine Ashari</span>
<span class="t" style="left:433.00px;top:537px;font-size:13.6px;line-height:15px;color:#000;font-weight:bold;transform:scaleX(1.0444);transform-origin:0 50%;">3173054512020003</span>
<div class="r" style="left:431px;top:535px;width:0;height:0;border-top:5px solid #217346;border-right:5px solid transparent"></div>
<span class="t" style="left:571.70px;top:539px;font-size:11.6px;line-height:12px;color:#333;transform:scaleX(1.0669);transform-origin:0 50%;-webkit-text-stroke:0.3px #333;">Tenaga Ahli</span>
<span class="t" style="left:700.60px;top:539px;font-size:11.2px;line-height:12px;color:#2b2b2b;transform:scaleX(0.9557);transform-origin:100% 50%;-webkit-text-stroke:0.22px #2b2b2b;">8.120.761,00</span>
<span class="t" style="left:788.94px;top:539px;font-size:11.2px;line-height:12px;color:#2b2b2b;transform:scaleX(0.9557);transform-origin:100% 50%;-webkit-text-stroke:0.22px #2b2b2b;">203.019,03</span>
<span class="t" style="left:80.36px;top:558px;font-size:11.2px;line-height:12px;color:#2b2b2b;transform:scaleX(0.8528);transform-origin:50% 50%;-webkit-text-stroke:0.22px #2b2b2b;">TRUE</span>
<span class="t" style="left:127.13px;top:559px;font-size:9.6px;line-height:11px;color:#111;font-weight:bold;transform:scaleX(0.9700);transform-origin:50% 50%;">Daniel Mardjono (Niel)</span>
<span class="t" style="left:244.60px;top:556px;font-size:13.6px;line-height:15px;color:#000;font-weight:bold;transform:scaleX(1.0685);transform-origin:0 50%;">Daniel Mardjono (Niel)</span>
<span class="t" style="left:433.00px;top:556px;font-size:13.6px;line-height:15px;color:#000;font-weight:bold;transform:scaleX(1.0509);transform-origin:0 50%;">3171030311940000</span>
<div class="r" style="left:431px;top:554px;width:0;height:0;border-top:5px solid #217346;border-right:5px solid transparent"></div>
<span class="t" style="left:571.70px;top:558px;font-size:11.6px;line-height:12px;color:#333;transform:scaleX(1.0669);transform-origin:0 50%;-webkit-text-stroke:0.3px #333;">Tenaga Ahli</span>
<span class="t" style="left:709.94px;top:558px;font-size:11.2px;line-height:12px;color:#2b2b2b;transform:scaleX(0.9557);transform-origin:100% 50%;-webkit-text-stroke:0.22px #2b2b2b;">180.000,00</span>
<span class="t" style="left:801.40px;top:558px;font-size:11.2px;line-height:12px;color:#2b2b2b;transform:scaleX(0.9557);transform-origin:100% 50%;-webkit-text-stroke:0.22px #2b2b2b;">4.500,00</span>
<span class="t" style="left:80.36px;top:577px;font-size:11.2px;line-height:12px;color:#2b2b2b;transform:scaleX(0.8528);transform-origin:50% 50%;-webkit-text-stroke:0.22px #2b2b2b;">TRUE</span>
<span class="t" style="left:138.22px;top:578px;font-size:9.6px;line-height:11px;color:#111;font-weight:bold;transform:scaleX(0.9700);transform-origin:50% 50%;">Rachella Anatasa</span>
<span class="t" style="left:244.60px;top:575px;font-size:13.6px;line-height:15px;color:#000;font-weight:bold;transform:scaleX(1.0515);transform-origin:0 50%;">Rachella Anatasa</span>
<span class="t" style="left:433.00px;top:575px;font-size:13.6px;line-height:15px;color:#000;font-weight:bold;transform:scaleX(1.0444);transform-origin:0 50%;">3174036703000000</span>
<div class="r" style="left:431px;top:573px;width:0;height:0;border-top:5px solid #217346;border-right:5px solid transparent"></div>
<span class="t" style="left:571.70px;top:577px;font-size:11.6px;line-height:12px;color:#333;transform:scaleX(1.0669);transform-origin:0 50%;-webkit-text-stroke:0.3px #333;">Tenaga Ahli</span>
<span class="t" style="left:751.13px;top:577px;font-size:11.2px;line-height:12px;color:#2b2b2b;-webkit-text-stroke:0.22px #2b2b2b;">-</span>
<span class="t" style="left:830.13px;top:577px;font-size:11.2px;line-height:12px;color:#2b2b2b;-webkit-text-stroke:0.22px #2b2b2b;">-</span>
<span class="t" style="left:80.36px;top:596px;font-size:11.2px;line-height:12px;color:#2b2b2b;transform:scaleX(0.8528);transform-origin:50% 50%;-webkit-text-stroke:0.22px #2b2b2b;">TRUE</span>
<span class="t" style="left:116.98px;top:597px;font-size:9.6px;line-height:11px;color:#111;font-weight:bold;transform:scaleX(0.9700);transform-origin:50% 50%;">Yunisa Puspita Dewi (Icha)</span>
<span class="t" style="left:244.60px;top:594px;font-size:13.6px;line-height:15px;color:#000;font-weight:bold;transform:scaleX(1.0237);transform-origin:0 50%;">Yunisa Puspita Dewi (Icha)</span>
<span class="t" style="left:433.00px;top:594px;font-size:13.6px;line-height:15px;color:#000;font-weight:bold;transform:scaleX(1.0444);transform-origin:0 50%;">3171014106000000</span>
<div class="r" style="left:431px;top:592px;width:0;height:0;border-top:5px solid #217346;border-right:5px solid transparent"></div>
<span class="t" style="left:571.70px;top:596px;font-size:11.6px;line-height:12px;color:#333;transform:scaleX(1.0669);transform-origin:0 50%;-webkit-text-stroke:0.3px #333;">Tenaga Ahli</span>
<span class="t" style="left:700.60px;top:596px;font-size:11.2px;line-height:12px;color:#2b2b2b;transform:scaleX(0.9557);transform-origin:100% 50%;-webkit-text-stroke:0.22px #2b2b2b;">1.260.000,00</span>
<span class="t" style="left:795.17px;top:596px;font-size:11.2px;line-height:12px;color:#2b2b2b;transform:scaleX(0.9557);transform-origin:100% 50%;-webkit-text-stroke:0.22px #2b2b2b;">31.500,00</span>
<span class="t" style="left:80.36px;top:615px;font-size:11.2px;line-height:12px;color:#2b2b2b;transform:scaleX(0.8528);transform-origin:50% 50%;-webkit-text-stroke:0.22px #2b2b2b;">TRUE</span>
<span class="t" style="left:138.32px;top:616px;font-size:9.6px;line-height:11px;color:#111;font-weight:bold;transform:scaleX(0.9700);transform-origin:50% 50%;">Regina Salsabilla</span>
<span class="t" style="left:244.60px;top:613px;font-size:13.6px;line-height:15px;color:#000;font-weight:bold;transform:scaleX(1.0271);transform-origin:0 50%;">Regina Salsabilla</span>
<span class="t" style="left:433.00px;top:613px;font-size:13.6px;line-height:15px;color:#000;font-weight:bold;transform:scaleX(1.0575);transform-origin:0 50%;">3201114804000000</span>
<div class="r" style="left:431px;top:611px;width:0;height:0;border-top:5px solid #217346;border-right:5px solid transparent"></div>
<span class="t" style="left:571.70px;top:615px;font-size:11.6px;line-height:12px;color:#333;transform:scaleX(1.0669);transform-origin:0 50%;-webkit-text-stroke:0.3px #333;">Tenaga Ahli</span>
<span class="t" style="left:700.60px;top:615px;font-size:11.2px;line-height:12px;color:#2b2b2b;transform:scaleX(0.9557);transform-origin:100% 50%;-webkit-text-stroke:0.22px #2b2b2b;">2.200.000,00</span>
<span class="t" style="left:795.17px;top:615px;font-size:11.2px;line-height:12px;color:#2b2b2b;transform:scaleX(0.9557);transform-origin:100% 50%;-webkit-text-stroke:0.22px #2b2b2b;">55.000,00</span>
<span class="t" style="left:80.36px;top:634px;font-size:11.2px;line-height:12px;color:#2b2b2b;transform:scaleX(0.8528);transform-origin:50% 50%;-webkit-text-stroke:0.22px #2b2b2b;">TRUE</span>
<span class="t" style="left:141.34px;top:635px;font-size:9.6px;line-height:11px;color:#111;font-weight:bold;transform:scaleX(0.9700);transform-origin:50% 50%;">Rizq Yuliansyah</span>
<span class="t" style="left:244.60px;top:632px;font-size:13.6px;line-height:15px;color:#000;font-weight:bold;transform:scaleX(0.9768);transform-origin:0 50%;">Rizq Yuliansyah</span>
<span class="t" style="left:433.00px;top:632px;font-size:13.6px;line-height:15px;color:#000;font-weight:bold;transform:scaleX(1.0444);transform-origin:0 50%;">3174105807010000</span>
<span class="t" style="left:571.70px;top:634px;font-size:11.6px;line-height:12px;color:#333;transform:scaleX(1.0669);transform-origin:0 50%;-webkit-text-stroke:0.3px #333;">Tenaga Ahli</span>
<span class="t" style="left:751.13px;top:634px;font-size:11.2px;line-height:12px;color:#2b2b2b;-webkit-text-stroke:0.22px #2b2b2b;">-</span>
<span class="t" style="left:830.13px;top:634px;font-size:11.2px;line-height:12px;color:#2b2b2b;-webkit-text-stroke:0.22px #2b2b2b;">-</span>
<span class="t" style="left:80.36px;top:653px;font-size:11.2px;line-height:12px;color:#2b2b2b;transform:scaleX(0.8528);transform-origin:50% 50%;-webkit-text-stroke:0.22px #2b2b2b;">TRUE</span>
<span class="t" style="left:166.60px;top:654px;font-size:9.6px;line-height:11px;color:#111;font-weight:bold;transform:scaleX(0.9700);transform-origin:50% 50%;">Iqbal</span>
<span class="t" style="left:244.60px;top:651px;font-size:13.6px;line-height:15px;color:#000;font-weight:bold;transform:scaleX(1.0682);transform-origin:0 50%;">Iqbal</span>
<span class="t" style="left:433.00px;top:651px;font-size:13.6px;line-height:15px;color:#000;font-weight:bold;transform:scaleX(1.0444);transform-origin:0 50%;">1471091605980000</span>
<span class="t" style="left:571.70px;top:653px;font-size:11.6px;line-height:12px;color:#333;transform:scaleX(1.0669);transform-origin:0 50%;-webkit-text-stroke:0.3px #333;">Tenaga Ahli</span>
<span class="t" style="left:709.94px;top:653px;font-size:11.2px;line-height:12px;color:#2b2b2b;transform:scaleX(0.9557);transform-origin:100% 50%;-webkit-text-stroke:0.22px #2b2b2b;">870.000,00</span>
<span class="t" style="left:795.17px;top:653px;font-size:11.2px;line-height:12px;color:#2b2b2b;transform:scaleX(0.9557);transform-origin:100% 50%;-webkit-text-stroke:0.22px #2b2b2b;">21.750,00</span>
<span class="t" style="left:80.36px;top:672px;font-size:11.2px;line-height:12px;color:#2b2b2b;transform:scaleX(0.8528);transform-origin:50% 50%;-webkit-text-stroke:0.22px #2b2b2b;">TRUE</span>
<span class="t" style="left:142.95px;top:673px;font-size:9.6px;line-height:11px;color:#111;font-weight:bold;transform:scaleX(0.9700);transform-origin:50% 50%;">Yohanna Harso</span>
<span class="t" style="left:244.60px;top:670px;font-size:13.6px;line-height:15px;color:#000;font-weight:bold;transform:scaleX(1.0117);transform-origin:0 50%;">Yohanna Harso</span>
<span class="t" style="left:433.00px;top:670px;font-size:13.6px;line-height:15px;color:#000;font-weight:bold;transform:scaleX(1.0444);transform-origin:0 50%;">3174086304860000</span>
<div class="r" style="left:431px;top:668px;width:0;height:0;border-top:5px solid #217346;border-right:5px solid transparent"></div>
<span class="t" style="left:571.70px;top:672px;font-size:11.6px;line-height:12px;color:#333;transform:scaleX(1.0669);transform-origin:0 50%;-webkit-text-stroke:0.3px #333;">Tenaga Ahli</span>
<span class="t" style="left:700.60px;top:672px;font-size:11.2px;line-height:12px;color:#2b2b2b;transform:scaleX(0.9557);transform-origin:100% 50%;-webkit-text-stroke:0.22px #2b2b2b;">4.680.000,00</span>
<span class="t" style="left:789.78px;top:672px;font-size:11.2px;line-height:12px;color:#2b2b2b;transform:scaleX(0.9557);transform-origin:100% 50%;-webkit-text-stroke:0.22px #2b2b2b;">117.000,00</span>
<span class="t" style="left:80.36px;top:691px;font-size:11.2px;line-height:12px;color:#2b2b2b;transform:scaleX(0.8528);transform-origin:50% 50%;-webkit-text-stroke:0.22px #2b2b2b;">TRUE</span>
<span class="t" style="left:136.72px;top:692px;font-size:9.6px;line-height:11px;color:#111;font-weight:bold;transform:scaleX(0.9700);transform-origin:50% 50%;">Niranjan Bharvani</span>
<span class="t" style="left:244.60px;top:689px;font-size:13.6px;line-height:15px;color:#000;font-weight:bold;transform:scaleX(0.9958);transform-origin:0 50%;">Niranjan Bharvani</span>
<span class="t" style="left:433.00px;top:689px;font-size:13.6px;line-height:15px;color:#e3181d;font-weight:bold;transform:scaleX(1.0509);transform-origin:0 50%;">3172022711970000</span>
<span class="t" style="left:571.30px;top:689px;font-size:13.6px;line-height:15px;color:#e3181d;font-weight:bold;transform:scaleX(1.0592);transform-origin:0 50%;">Pegawai Tetap</span>
<span class="t" style="left:751.13px;top:691px;font-size:11.2px;line-height:12px;color:#2b2b2b;-webkit-text-stroke:0.22px #2b2b2b;">-</span>
<span class="t" style="left:830.13px;top:691px;font-size:11.2px;line-height:12px;color:#2b2b2b;-webkit-text-stroke:0.22px #2b2b2b;">-</span>
<span class="t" style="left:80.36px;top:710px;font-size:11.2px;line-height:12px;color:#2b2b2b;transform:scaleX(0.8528);transform-origin:50% 50%;-webkit-text-stroke:0.22px #2b2b2b;">TRUE</span>
<span class="t" style="left:125.78px;top:711px;font-size:9.6px;line-height:11px;color:#111;font-weight:bold;transform:scaleX(0.9700);transform-origin:50% 50%;">Najla Purwita Fauziyah</span>
<span class="t" style="left:244.60px;top:708px;font-size:13.6px;line-height:15px;color:#e3181d;font-weight:bold;transform:scaleX(1.0103);transform-origin:0 50%;">Najla Purwita Fauziyah</span>
<span class="t" style="left:433.00px;top:708px;font-size:13.6px;line-height:15px;color:#e3181d;font-weight:bold;transform:scaleX(1.0444);transform-origin:0 50%;">3201076504020006</span>
<div class="r" style="left:431px;top:706px;width:0;height:0;border-top:5px solid #217346;border-right:5px solid transparent"></div>
<span class="t" style="left:571.30px;top:708px;font-size:13.6px;line-height:15px;color:#e3181d;font-weight:bold;transform:scaleX(1.0592);transform-origin:0 50%;">Pegawai Tetap</span>
<span class="t" style="left:700.60px;top:710px;font-size:11.2px;line-height:12px;color:#2b2b2b;transform:scaleX(0.9557);transform-origin:100% 50%;-webkit-text-stroke:0.22px #2b2b2b;">5.396.761,00</span>
<span class="t" style="left:830.13px;top:710px;font-size:11.2px;line-height:12px;color:#2b2b2b;-webkit-text-stroke:0.22px #2b2b2b;">-</span>
<span class="t" style="left:80.36px;top:729px;font-size:11.2px;line-height:12px;color:#2b2b2b;transform:scaleX(0.8528);transform-origin:50% 50%;-webkit-text-stroke:0.22px #2b2b2b;">TRUE</span>
<span class="t" style="left:163.44px;top:730px;font-size:9.6px;line-height:11px;color:#111;font-weight:bold;transform:scaleX(0.9700);transform-origin:50% 50%;">Winda</span>
<span class="t" style="left:244.60px;top:727px;font-size:13.6px;line-height:15px;color:#e3181d;font-weight:bold;transform:scaleX(1.0301);transform-origin:0 50%;">Winda</span>
<span class="t" style="left:433.00px;top:727px;font-size:13.6px;line-height:15px;color:#e3181d;font-weight:bold;transform:scaleX(1.0642);transform-origin:0 50%;">3201116811870004</span>
<div class="r" style="left:431px;top:725px;width:0;height:0;border-top:5px solid #217346;border-right:5px solid transparent"></div>
<span class="t" style="left:571.30px;top:727px;font-size:13.6px;line-height:15px;color:#e3181d;font-weight:bold;transform:scaleX(1.0592);transform-origin:0 50%;">Pegawai Tetap</span>
<span class="t" style="left:700.60px;top:729px;font-size:11.2px;line-height:12px;color:#2b2b2b;transform:scaleX(0.9557);transform-origin:100% 50%;-webkit-text-stroke:0.22px #2b2b2b;">3.000.000,00</span>
<span class="t" style="left:830.13px;top:729px;font-size:11.2px;line-height:12px;color:#2b2b2b;-webkit-text-stroke:0.22px #2b2b2b;">-</span>
<span class="t" style="left:80.36px;top:748px;font-size:11.2px;line-height:12px;color:#2b2b2b;transform:scaleX(0.8528);transform-origin:50% 50%;-webkit-text-stroke:0.22px #2b2b2b;">TRUE</span>
<span class="t" style="left:127.04px;top:749px;font-size:9.6px;line-height:11px;color:#111;font-weight:bold;transform:scaleX(0.9700);transform-origin:50% 50%;">Diah Rahayu Agustine</span>
<span class="t" style="left:244.60px;top:746px;font-size:13.6px;line-height:15px;color:#000;font-weight:bold;transform:scaleX(1.0074);transform-origin:0 50%;">Diah Rahayu Agustine</span>
<span class="t" style="left:433.00px;top:746px;font-size:13.6px;line-height:15px;color:#000;font-weight:bold;transform:scaleX(1.0444);transform-origin:0 50%;">3173085008051002</span>
<div class="r" style="left:431px;top:744px;width:0;height:0;border-top:5px solid #217346;border-right:5px solid transparent"></div>
<span class="t" style="left:571.30px;top:746px;font-size:13.6px;line-height:15px;color:#e3181d;font-weight:bold;transform:scaleX(1.0592);transform-origin:0 50%;">Pegawai Tetap</span>
<span class="t" style="left:751.13px;top:748px;font-size:11.2px;line-height:12px;color:#2b2b2b;-webkit-text-stroke:0.22px #2b2b2b;">-</span>
<span class="t" style="left:830.13px;top:748px;font-size:11.2px;line-height:12px;color:#2b2b2b;-webkit-text-stroke:0.22px #2b2b2b;">-</span>
<div class="r" style="left:112px;top:797px;width:682px;height:193px;background:#fff;overflow:hidden"><div class="r" style="left:-52.65px;top:-193.75px;width:1920px;height:1080px;transform:scale(0.85);transform-origin:0 0"><div class="r" style="left:76px;top:219px;width:1px;height:800px;background:#d9d9d9;"></div><div class="r" style="left:113px;top:219px;width:1px;height:800px;background:#d9d9d9;"></div><div class="r" style="left:241px;top:219px;width:1px;height:800px;background:#d9d9d9;"></div><div class="r" style="left:430px;top:219px;width:1px;height:800px;background:#d9d9d9;"></div><div class="r" style="left:568px;top:219px;width:1px;height:800px;background:#d9d9d9;"></div><div class="r" style="left:681px;top:219px;width:1px;height:800px;background:#d9d9d9;"></div><div class="r" style="left:772px;top:219px;width:1px;height:800px;background:#d9d9d9;"></div><div class="r" style="left:851px;top:219px;width:1px;height:800px;background:#d9d9d9;"></div><div class="r" style="left:60px;top:235px;width:810px;height:1px;background:#d9d9d9;"></div><div class="r" style="left:60px;top:252px;width:810px;height:1px;background:#d9d9d9;"></div><div class="r" style="left:60px;top:269px;width:810px;height:1px;background:#d9d9d9;"></div><div class="r" style="left:60px;top:288px;width:810px;height:1px;background:#d9d9d9;"></div><div class="r" style="left:60px;top:307px;width:810px;height:1px;background:#d9d9d9;"></div><div class="r" style="left:60px;top:326px;width:810px;height:1px;background:#d9d9d9;"></div><div class="r" style="left:60px;top:345px;width:810px;height:1px;background:#d9d9d9;"></div><div class="r" style="left:60px;top:364px;width:810px;height:1px;background:#d9d9d9;"></div><div class="r" style="left:60px;top:383px;width:810px;height:1px;background:#d9d9d9;"></div><div class="r" style="left:60px;top:401px;width:810px;height:1px;background:#d9d9d9;"></div><div class="r" style="left:60px;top:420px;width:810px;height:1px;background:#d9d9d9;"></div><div class="r" style="left:60px;top:439px;width:810px;height:1px;background:#d9d9d9;"></div><div class="r" style="left:60px;top:458px;width:810px;height:1px;background:#d9d9d9;"></div><div class="r" style="left:60px;top:477px;width:810px;height:1px;background:#d9d9d9;"></div><div class="r" style="left:60px;top:496px;width:810px;height:1px;background:#d9d9d9;"></div><div class="r" style="left:60px;top:515px;width:810px;height:1px;background:#d9d9d9;"></div><div class="r" style="left:60px;top:534px;width:810px;height:1px;background:#d9d9d9;"></div><div class="r" style="left:60px;top:553px;width:810px;height:1px;background:#d9d9d9;"></div><div class="r" style="left:60px;top:572px;width:810px;height:1px;background:#d9d9d9;"></div><div class="r" style="left:60px;top:591px;width:810px;height:1px;background:#d9d9d9;"></div><div class="r" style="left:60px;top:610px;width:810px;height:1px;background:#d9d9d9;"></div><div class="r" style="left:60px;top:629px;width:810px;height:1px;background:#d9d9d9;"></div><div class="r" style="left:60px;top:648px;width:810px;height:1px;background:#d9d9d9;"></div><div class="r" style="left:60px;top:667px;width:810px;height:1px;background:#d9d9d9;"></div><div class="r" style="left:60px;top:686px;width:810px;height:1px;background:#d9d9d9;"></div><div class="r" style="left:60px;top:705px;width:810px;height:1px;background:#d9d9d9;"></div><div class="r" style="left:60px;top:724px;width:810px;height:1px;background:#d9d9d9;"></div><div class="r" style="left:60px;top:743px;width:810px;height:1px;background:#d9d9d9;"></div><div class="r" style="left:60px;top:762px;width:810px;height:1px;background:#d9d9d9;"></div><div class="r" style="left:77px;top:236px;width:36px;height:51px;background:#fff;"></div><div class="r" style="left:114px;top:236px;width:127px;height:51px;background:#fff;"></div><div class="r" style="left:242px;top:236px;width:188px;height:52px;background:#fff;"></div><div class="r" style="left:431px;top:236px;width:137px;height:52px;background:#fff;"></div><div class="r" style="left:569px;top:236px;width:112px;height:52px;background:#fff;"></div><div class="r" style="left:682px;top:236px;width:169px;height:16px;background:#fff;"></div><div class="r" style="left:682px;top:253px;width:169px;height:16px;background:#fff;"></div><div class="r" style="left:241px;top:235px;width:611px;height:1px;background:#000;"></div>
<div class="r" style="left:681px;top:252px;width:171px;height:1px;background:#000;"></div>
<div class="r" style="left:681px;top:269px;width:171px;height:1px;background:#000;"></div>
<div class="r" style="left:241px;top:288px;width:611px;height:1px;background:#000;"></div>
<div class="r" style="left:241px;top:307px;width:611px;height:1px;background:#000;"></div>
<div class="r" style="left:241px;top:326px;width:611px;height:1px;background:#000;"></div>
<div class="r" style="left:241px;top:345px;width:611px;height:1px;background:#000;"></div>
<div class="r" style="left:241px;top:364px;width:611px;height:1px;background:#000;"></div>
<div class="r" style="left:241px;top:383px;width:611px;height:1px;background:#000;"></div>
<div class="r" style="left:241px;top:401px;width:611px;height:1px;background:#000;"></div>
<div class="r" style="left:241px;top:420px;width:611px;height:1px;background:#000;"></div>
<div class="r" style="left:241px;top:439px;width:611px;height:1px;background:#000;"></div>
<div class="r" style="left:241px;top:458px;width:611px;height:1px;background:#000;"></div>
<div class="r" style="left:241px;top:477px;width:611px;height:1px;background:#000;"></div>
<div class="r" style="left:241px;top:496px;width:611px;height:1px;background:#000;"></div>
<div class="r" style="left:241px;top:515px;width:611px;height:1px;background:#000;"></div>
<div class="r" style="left:241px;top:534px;width:611px;height:1px;background:#000;"></div>
<div class="r" style="left:241px;top:553px;width:611px;height:1px;background:#000;"></div>
<div class="r" style="left:241px;top:572px;width:611px;height:1px;background:#000;"></div>
<div class="r" style="left:241px;top:591px;width:611px;height:1px;background:#000;"></div>
<div class="r" style="left:241px;top:610px;width:611px;height:1px;background:#000;"></div>
<div class="r" style="left:241px;top:629px;width:611px;height:1px;background:#000;"></div>
<div class="r" style="left:241px;top:648px;width:611px;height:1px;background:#000;"></div>
<div class="r" style="left:241px;top:667px;width:611px;height:1px;background:#000;"></div>
<div class="r" style="left:241px;top:686px;width:611px;height:1px;background:#000;"></div>
<div class="r" style="left:241px;top:705px;width:611px;height:1px;background:#000;"></div>
<div class="r" style="left:241px;top:724px;width:611px;height:1px;background:#000;"></div>
<div class="r" style="left:241px;top:743px;width:611px;height:1px;background:#000;"></div>
<div class="r" style="left:241px;top:762px;width:611px;height:1px;background:#000;"></div>
<div class="r" style="left:241px;top:235px;width:1px;height:528px;background:#000;"></div>
<div class="r" style="left:430px;top:235px;width:1px;height:528px;background:#000;"></div>
<div class="r" style="left:568px;top:235px;width:1px;height:528px;background:#000;"></div>
<div class="r" style="left:681px;top:235px;width:1px;height:528px;background:#000;"></div>
<div class="r" style="left:851px;top:235px;width:1px;height:528px;background:#000;"></div>
<div class="r" style="left:772px;top:269px;width:1px;height:494px;background:#000;"></div>
<div class="r" style="left:113px;top:235px;width:1px;height:52px;background:#000;"></div>
<div class="r" style="left:112px;top:287px;width:2px;height:476px;background:#000;"></div>
<div class="r" style="left:240px;top:287px;width:2px;height:476px;background:#000;"></div>
<div class="r" style="left:112px;top:287px;width:130px;height:2px;background:#000;"></div>
<div class="r" style="left:112px;top:306px;width:130px;height:2px;background:#000;"></div>
<div class="r" style="left:112px;top:325px;width:130px;height:2px;background:#000;"></div>
<div class="r" style="left:112px;top:344px;width:130px;height:2px;background:#000;"></div>
<div class="r" style="left:112px;top:363px;width:130px;height:2px;background:#000;"></div>
<div class="r" style="left:112px;top:382px;width:130px;height:2px;background:#000;"></div>
<div class="r" style="left:112px;top:400px;width:130px;height:2px;background:#000;"></div>
<div class="r" style="left:112px;top:419px;width:130px;height:2px;background:#000;"></div>
<div class="r" style="left:112px;top:438px;width:130px;height:2px;background:#000;"></div>
<div class="r" style="left:112px;top:457px;width:130px;height:2px;background:#000;"></div>
<div class="r" style="left:112px;top:476px;width:130px;height:2px;background:#000;"></div>
<div class="r" style="left:112px;top:495px;width:130px;height:2px;background:#000;"></div>
<div class="r" style="left:112px;top:514px;width:130px;height:2px;background:#000;"></div>
<div class="r" style="left:112px;top:533px;width:130px;height:2px;background:#000;"></div>
<div class="r" style="left:112px;top:552px;width:130px;height:2px;background:#000;"></div>
<div class="r" style="left:112px;top:571px;width:130px;height:2px;background:#000;"></div>
<div class="r" style="left:112px;top:590px;width:130px;height:2px;background:#000;"></div>
<div class="r" style="left:112px;top:609px;width:130px;height:2px;background:#000;"></div>
<div class="r" style="left:112px;top:628px;width:130px;height:2px;background:#000;"></div>
<div class="r" style="left:112px;top:647px;width:130px;height:2px;background:#000;"></div>
<div class="r" style="left:112px;top:666px;width:130px;height:2px;background:#000;"></div>
<div class="r" style="left:112px;top:685px;width:130px;height:2px;background:#000;"></div>
<div class="r" style="left:112px;top:704px;width:130px;height:2px;background:#000;"></div>
<div class="r" style="left:112px;top:723px;width:130px;height:2px;background:#000;"></div>
<div class="r" style="left:112px;top:742px;width:130px;height:2px;background:#000;"></div>
<div class="r" style="left:112px;top:761px;width:130px;height:2px;background:#000;"></div>
<div class="r" style="left:76px;top:287px;width:38px;height:2px;background:#000;"></div>
<div class="r" style="left:241px;top:382px;width:328px;height:2px;background:#000;"></div>
<div class="r" style="left:241px;top:400px;width:328px;height:2px;background:#000;"></div>
<div class="r" style="left:567px;top:382px;width:2px;height:20px;background:#000;"></div>
<div class="r" style="left:429px;top:382px;width:2px;height:20px;background:#000;"></div>
<span class="t" style="left:84.54px;top:275px;font-size:11.2px;line-height:12px;color:#2b2b2b;transform:scaleX(0.9188);transform-origin:50% 50%;-webkit-text-stroke:0.22px #2b2b2b;">Cek</span>
<span class="t" style="left:167.34px;top:275px;font-size:11.2px;line-height:12px;color:#2b2b2b;transform:scaleX(0.9188);transform-origin:50% 50%;-webkit-text-stroke:0.22px #2b2b2b;">Cek</span>
<span class="t" style="left:315.07px;top:236px;font-size:15px;line-height:17px;color:#000;font-weight:bold;">Nama</span>
<span class="t" style="left:486.58px;top:236px;font-size:15px;line-height:17px;color:#000;font-weight:bold;transform:scaleX(0.8710);transform-origin:50% 50%;">NIK</span>
<span class="t" style="left:597.79px;top:236px;font-size:15px;line-height:17px;color:#000;font-weight:bold;transform:scaleX(0.9725);transform-origin:50% 50%;">Catatan</span>
<span class="t" style="left:746.94px;top:239px;font-size:11px;line-height:12px;color:#000;font-weight:bold;transform:scaleX(0.9073);transform-origin:50% 50%;">Januari</span>
<span class="t" style="left:749.57px;top:256px;font-size:11px;line-height:12px;color:#000;font-weight:bold;transform:scaleX(0.9038);transform-origin:50% 50%;">Jan-26</span>
<span class="t" style="left:684.50px;top:274px;font-size:10.8px;line-height:12px;color:#000;font-weight:bold;transform:scaleX(0.9203);transform-origin:0 50%;">Bruto</span>
<span class="t" style="left:775.30px;top:274px;font-size:10.8px;line-height:12px;color:#000;font-weight:bold;transform:scaleX(0.9023);transform-origin:0 50%;">PPh 21</span>
<span class="t" style="left:688.15px;top:222px;font-size:11.2px;line-height:12px;color:#2b2b2b;transform:scaleX(0.9543);transform-origin:100% 50%;-webkit-text-stroke:0.22px #2b2b2b;">100.426.106,00</span>
<span class="t" style="left:779.60px;top:222px;font-size:11.2px;line-height:12px;color:#2b2b2b;transform:scaleX(0.9572);transform-origin:100% 50%;-webkit-text-stroke:0.22px #2b2b2b;">2.300.733,63</span>
<span class="t" style="left:80.36px;top:293px;font-size:11.2px;line-height:12px;color:#2b2b2b;transform:scaleX(0.8528);transform-origin:50% 50%;-webkit-text-stroke:0.22px #2b2b2b;">TRUE</span>
<span class="t" style="left:144.99px;top:294px;font-size:9.6px;line-height:11px;color:#111;font-weight:bold;transform:scaleX(0.9700);transform-origin:50% 50%;">Chitra Hapsari</span>
<span class="t" style="left:244.60px;top:291px;font-size:13.6px;line-height:15px;color:#000;font-weight:bold;transform:scaleX(1.0101);transform-origin:0 50%;">Chitra Hapsari</span>
<span class="t" style="left:433.00px;top:291px;font-size:13.6px;line-height:15px;color:#000;font-weight:bold;transform:scaleX(1.0444);transform-origin:0 50%;">3271064910860021</span>
<div class="r" style="left:431px;top:289px;width:0;height:0;border-top:5px solid #217346;border-right:5px solid transparent"></div>
<span class="t" style="left:571.70px;top:293px;font-size:11.6px;line-height:12px;color:#333;transform:scaleX(1.0669);transform-origin:0 50%;-webkit-text-stroke:0.3px #333;">Tenaga Ahli</span>
<span class="t" style="left:700.60px;top:293px;font-size:11.2px;line-height:12px;color:#2b2b2b;transform:scaleX(0.9557);transform-origin:100% 50%;-webkit-text-stroke:0.22px #2b2b2b;">3.080.000,00</span>
<span class="t" style="left:795.17px;top:293px;font-size:11.2px;line-height:12px;color:#2b2b2b;transform:scaleX(0.9557);transform-origin:100% 50%;-webkit-text-stroke:0.22px #2b2b2b;">77.000,00</span>
<span class="t" style="left:80.36px;top:312px;font-size:11.2px;line-height:12px;color:#2b2b2b;transform:scaleX(0.8528);transform-origin:50% 50%;-webkit-text-stroke:0.22px #2b2b2b;">TRUE</span>
<span class="t" style="left:131.27px;top:313px;font-size:9.6px;line-height:11px;color:#111;font-weight:bold;transform:scaleX(0.9700);transform-origin:50% 50%;">Louis Winson Tamin</span>
<span class="t" style="left:244.60px;top:310px;font-size:13.6px;line-height:15px;color:#000;font-weight:bold;transform:scaleX(0.9815);transform-origin:0 50%;">Louis Winson Tamin</span>
<span class="t" style="left:433.00px;top:310px;font-size:13.6px;line-height:15px;color:#000;font-weight:bold;transform:scaleX(1.0509);transform-origin:0 50%;">3173030110030002</span>
<div class="r" style="left:431px;top:308px;width:0;height:0;border-top:5px solid #217346;border-right:5px solid transparent"></div>
<span class="t" style="left:571.70px;top:312px;font-size:11.6px;line-height:12px;color:#333;transform:scaleX(1.0669);transform-origin:0 50%;-webkit-text-stroke:0.3px #333;">Tenaga Ahli</span>
<span class="t" style="left:700.60px;top:312px;font-size:11.2px;line-height:12px;color:#2b2b2b;transform:scaleX(0.9557);transform-origin:100% 50%;-webkit-text-stroke:0.22px #2b2b2b;">6.240.000,00</span>
<span class="t" style="left:788.94px;top:312px;font-size:11.2px;line-height:12px;color:#2b2b2b;transform:scaleX(0.9557);transform-origin:100% 50%;-webkit-text-stroke:0.22px #2b2b2b;">156.000,00</span>
<span class="t" style="left:80.36px;top:331px;font-size:11.2px;line-height:12px;color:#2b2b2b;transform:scaleX(0.8528);transform-origin:50% 50%;-webkit-text-stroke:0.22px #2b2b2b;">TRUE</span>
<span class="t" style="left:131.91px;top:332px;font-size:9.6px;line-height:11px;color:#111;font-weight:bold;transform:scaleX(0.9700);transform-origin:50% 50%;">Imelda Permata Sari</span>
<span class="t" style="left:244.60px;top:329px;font-size:13.6px;line-height:15px;color:#000;font-weight:bold;transform:scaleX(1.0529);transform-origin:0 50%;">Imelda Permata Sari</span>
<span class="t" style="left:433.00px;top:329px;font-size:13.6px;line-height:15px;color:#000;font-weight:bold;transform:scaleX(1.0575);transform-origin:0 50%;">3201116904990005</span>
<div class="r" style="left:431px;top:327px;width:0;height:0;border-top:5px solid #217346;border-right:5px solid transparent"></div>
<span class="t" style="left:571.70px;top:331px;font-size:11.6px;line-height:12px;color:#333;transform:scaleX(1.0669);transform-origin:0 50%;-webkit-text-stroke:0.3px #333;">Tenaga Ahli</span>
<span class="t" style="left:694.37px;top:331px;font-size:11.2px;line-height:12px;color:#2b2b2b;transform:scaleX(0.9557);transform-origin:100% 50%;-webkit-text-stroke:0.22px #2b2b2b;">20.920.000,00</span>
<span class="t" style="left:788.94px;top:331px;font-size:11.2px;line-height:12px;color:#2b2b2b;transform:scaleX(0.9557);transform-origin:100% 50%;-webkit-text-stroke:0.22px #2b2b2b;">523.000,00</span>
<span class="t" style="left:80.36px;top:350px;font-size:11.2px;line-height:12px;color:#2b2b2b;transform:scaleX(0.8528);transform-origin:50% 50%;-webkit-text-stroke:0.22px #2b2b2b;">TRUE</span>
<span class="t" style="left:124.28px;top:351px;font-size:9.6px;line-height:11px;color:#111;font-weight:bold;transform:scaleX(0.9700);transform-origin:50% 50%;">Karen Zheng Wen Fang</span>
<span class="t" style="left:244.60px;top:348px;font-size:13.6px;line-height:15px;color:#000;font-weight:bold;transform:scaleX(1.0150);transform-origin:0 50%;">Karen Zheng Wen Fang</span>
<span class="t" style="left:433.00px;top:348px;font-size:13.6px;line-height:15px;color:#000;font-weight:bold;transform:scaleX(1.0444);transform-origin:0 50%;">3173056210920004</span>
<div class="r" style="left:431px;top:346px;width:0;height:0;border-top:5px solid #217346;border-right:5px solid transparent"></div>
<span class="t" style="left:571.70px;top:350px;font-size:11.6px;line-height:12px;color:#333;transform:scaleX(1.0669);transform-origin:0 50%;-webkit-text-stroke:0.3px #333;">Tenaga Ahli</span>
<span class="t" style="left:700.60px;top:350px;font-size:11.2px;line-height:12px;color:#2b2b2b;transform:scaleX(0.9557);transform-origin:100% 50%;-webkit-text-stroke:0.22px #2b2b2b;">1.620.000,00</span>
<span class="t" style="left:795.17px;top:350px;font-size:11.2px;line-height:12px;color:#2b2b2b;transform:scaleX(0.9557);transform-origin:100% 50%;-webkit-text-stroke:0.22px #2b2b2b;">40.500,00</span>
<span class="t" style="left:80.36px;top:369px;font-size:11.2px;line-height:12px;color:#2b2b2b;transform:scaleX(0.8528);transform-origin:50% 50%;-webkit-text-stroke:0.22px #2b2b2b;">TRUE</span>
<span class="t" style="left:127.82px;top:370px;font-size:9.6px;line-height:11px;color:#111;font-weight:bold;transform:scaleX(0.9700);transform-origin:50% 50%;">Haerra Majidah Ansya</span>
<span class="t" style="left:244.60px;top:367px;font-size:13.6px;line-height:15px;color:#000;font-weight:bold;transform:scaleX(1.0445);transform-origin:0 50%;">Haerra Majidah Ansya</span>
<span class="t" style="left:433.00px;top:367px;font-size:13.6px;line-height:15px;color:#000;font-weight:bold;transform:scaleX(1.0444);transform-origin:0 50%;">3171074904010006</span>
<div class="r" style="left:431px;top:365px;width:0;height:0;border-top:5px solid #217346;border-right:5px solid transparent"></div>
<span class="t" style="left:571.70px;top:369px;font-size:11.6px;line-height:12px;color:#333;transform:scaleX(1.0669);transform-origin:0 50%;-webkit-text-stroke:0.3px #333;">Tenaga Ahli</span>
<span class="t" style="left:751.13px;top:369px;font-size:11.2px;line-height:12px;color:#2b2b2b;-webkit-text-stroke:0.22px #2b2b2b;">-</span>
<span class="t" style="left:830.13px;top:369px;font-size:11.2px;line-height:12px;color:#2b2b2b;-webkit-text-stroke:0.22px #2b2b2b;">-</span>
<span class="t" style="left:80.36px;top:387px;font-size:11.2px;line-height:12px;color:#2b2b2b;transform:scaleX(0.8528);transform-origin:50% 50%;-webkit-text-stroke:0.22px #2b2b2b;">TRUE</span>
<span class="t" style="left:165.80px;top:388px;font-size:9.6px;line-height:11px;color:#111;font-weight:bold;transform:scaleX(0.9700);transform-origin:50% 50%;">Agus</span>
<span class="t" style="left:323.87px;top:387px;font-size:9.3px;line-height:10px;color:#222;font-weight:bold;transform:scaleX(0.9600);transform-origin:50% 50%;">Agus</span>
<span class="t" style="left:456.79px;top:386px;font-size:9.6px;line-height:11px;color:#1a1a1a;transform:scaleX(1.1238);transform-origin:50% 50%;">6101053108920003</span>
<div class="r" style="left:431px;top:384px;width:0;height:0;border-top:5px solid #217346;border-right:5px solid transparent"></div>
<span class="t" style="left:571.70px;top:387px;font-size:11.6px;line-height:12px;color:#333;transform:scaleX(1.0669);transform-origin:0 50%;-webkit-text-stroke:0.3px #333;">Tenaga Ahli</span>
<span class="t" style="left:709.94px;top:387px;font-size:11.2px;line-height:12px;color:#2b2b2b;transform:scaleX(0.9557);transform-origin:100% 50%;-webkit-text-stroke:0.22px #2b2b2b;">280.000,00</span>
<span class="t" style="left:801.40px;top:387px;font-size:11.2px;line-height:12px;color:#2b2b2b;transform:scaleX(0.9557);transform-origin:100% 50%;-webkit-text-stroke:0.22px #2b2b2b;">7.000,00</span>
<span class="t" style="left:80.36px;top:406px;font-size:11.2px;line-height:12px;color:#2b2b2b;transform:scaleX(0.8528);transform-origin:50% 50%;-webkit-text-stroke:0.22px #2b2b2b;">TRUE</span>
<span class="t" style="left:140.20px;top:407px;font-size:9.6px;line-height:11px;color:#111;font-weight:bold;transform:scaleX(0.9700);transform-origin:50% 50%;">Eko Purwidianto</span>
<span class="t" style="left:244.60px;top:404px;font-size:13.6px;line-height:15px;color:#000;font-weight:bold;transform:scaleX(0.9846);transform-origin:0 50%;">Eko Purwidianto</span>
<span class="t" style="left:433.00px;top:404px;font-size:13.6px;line-height:15px;color:#000;font-weight:bold;transform:scaleX(1.0444);transform-origin:0 50%;">3603201710880003</span>
<div class="r" style="left:431px;top:402px;width:0;height:0;border-top:5px solid #217346;border-right:5px solid transparent"></div>
<span class="t" style="left:571.70px;top:406px;font-size:11.6px;line-height:12px;color:#333;transform:scaleX(1.0669);transform-origin:0 50%;-webkit-text-stroke:0.3px #333;">Tenaga Ahli</span>
<span class="t" style="left:751.13px;top:406px;font-size:11.2px;line-height:12px;color:#2b2b2b;-webkit-text-stroke:0.22px #2b2b2b;">-</span>
<span class="t" style="left:830.13px;top:406px;font-size:11.2px;line-height:12px;color:#2b2b2b;-webkit-text-stroke:0.22px #2b2b2b;">-</span>
<span class="t" style="left:80.36px;top:425px;font-size:11.2px;line-height:12px;color:#2b2b2b;transform:scaleX(0.8528);transform-origin:50% 50%;-webkit-text-stroke:0.22px #2b2b2b;">TRUE</span>
<span class="t" style="left:140.46px;top:426px;font-size:9.6px;line-height:11px;color:#111;font-weight:bold;transform:scaleX(0.9700);transform-origin:50% 50%;">Panji Kurniawan</span>
<span class="t" style="left:244.60px;top:423px;font-size:13.6px;line-height:15px;color:#000;font-weight:bold;transform:scaleX(1.0057);transform-origin:0 50%;">Panji Kurniawan</span>
<span class="t" style="left:433.00px;top:423px;font-size:13.6px;line-height:15px;color:#000;font-weight:bold;transform:scaleX(1.0444);transform-origin:0 50%;">3275010806890015</span>
<div class="r" style="left:431px;top:421px;width:0;height:0;border-top:5px solid #217346;border-right:5px solid transparent"></div>
<span class="t" style="left:571.70px;top:425px;font-size:11.6px;line-height:12px;color:#333;transform:scaleX(1.0669);transform-origin:0 50%;-webkit-text-stroke:0.3px #333;">Tenaga Ahli</span>
<span class="t" style="left:694.37px;top:425px;font-size:11.2px;line-height:12px;color:#2b2b2b;transform:scaleX(0.9557);transform-origin:100% 50%;-webkit-text-stroke:0.22px #2b2b2b;">15.340.000,00</span>
<span class="t" style="left:788.94px;top:425px;font-size:11.2px;line-height:12px;color:#2b2b2b;transform:scaleX(0.9557);transform-origin:100% 50%;-webkit-text-stroke:0.22px #2b2b2b;">383.500,00</span>
<span class="t" style="left:80.36px;top:444px;font-size:11.2px;line-height:12px;color:#2b2b2b;transform:scaleX(0.8528);transform-origin:50% 50%;-webkit-text-stroke:0.22px #2b2b2b;">TRUE</span>
<span class="t" style="left:128.45px;top:445px;font-size:9.6px;line-height:11px;color:#111;font-weight:bold;transform:scaleX(0.9700);transform-origin:50% 50%;">Daniel Febby Jatmiko</span>
<span class="t" style="left:244.60px;top:442px;font-size:13.6px;line-height:15px;color:#000;font-weight:bold;transform:scaleX(1.0506);transform-origin:0 50%;">Daniel Febby Jatmiko</span>
<span class="t" style="left:433.00px;top:442px;font-size:13.6px;line-height:15px;color:#000;font-weight:bold;transform:scaleX(1.0444);transform-origin:0 50%;">3603201902850001</span>
<div class="r" style="left:431px;top:440px;width:0;height:0;border-top:5px solid #217346;border-right:5px solid transparent"></div>
<span class="t" style="left:571.70px;top:444px;font-size:11.6px;line-height:12px;color:#333;transform:scaleX(1.0669);transform-origin:0 50%;-webkit-text-stroke:0.3px #333;">Tenaga Ahli</span>
<span class="t" style="left:751.13px;top:444px;font-size:11.2px;line-height:12px;color:#2b2b2b;-webkit-text-stroke:0.22px #2b2b2b;">-</span>
<span class="t" style="left:830.13px;top:444px;font-size:11.2px;line-height:12px;color:#2b2b2b;-webkit-text-stroke:0.22px #2b2b2b;">-</span>
<span class="t" style="left:80.36px;top:463px;font-size:11.2px;line-height:12px;color:#2b2b2b;transform:scaleX(0.8528);transform-origin:50% 50%;-webkit-text-stroke:0.22px #2b2b2b;">TRUE</span>
<span class="t" style="left:126.68px;top:464px;font-size:9.6px;line-height:11px;color:#111;font-weight:bold;transform:scaleX(0.9700);transform-origin:50% 50%;">Monica Ashley Abutan</span>
<span class="t" style="left:244.60px;top:461px;font-size:13.6px;line-height:15px;color:#000;font-weight:bold;transform:scaleX(1.0453);transform-origin:0 50%;">Monica Ashley Abutan</span>
<span class="t" style="left:433.00px;top:461px;font-size:13.6px;line-height:15px;color:#000;font-weight:bold;transform:scaleX(1.0444);transform-origin:0 50%;">3674014912900005</span>
<div class="r" style="left:431px;top:459px;width:0;height:0;border-top:5px solid #217346;border-right:5px solid transparent"></div>
<span class="t" style="left:571.70px;top:463px;font-size:11.6px;line-height:12px;color:#333;transform:scaleX(1.0669);transform-origin:0 50%;-webkit-text-stroke:0.3px #333;">Tenaga Ahli</span>
<span class="t" style="left:694.37px;top:463px;font-size:11.2px;line-height:12px;color:#2b2b2b;transform:scaleX(0.9557);transform-origin:100% 50%;-webkit-text-stroke:0.22px #2b2b2b;">12.964.323,00</span>
<span class="t" style="left:788.94px;top:463px;font-size:11.2px;line-height:12px;color:#2b2b2b;transform:scaleX(0.9557);transform-origin:100% 50%;-webkit-text-stroke:0.22px #2b2b2b;">324.108,08</span>
<span class="t" style="left:80.36px;top:482px;font-size:11.2px;line-height:12px;color:#2b2b2b;transform:scaleX(0.8528);transform-origin:50% 50%;-webkit-text-stroke:0.22px #2b2b2b;">TRUE</span>
<span class="t" style="left:140.00px;top:483px;font-size:9.6px;line-height:11px;color:#111;font-weight:bold;transform:scaleX(0.9700);transform-origin:50% 50%;">Faras Ayu Islami</span>
<span class="t" style="left:244.60px;top:480px;font-size:13.6px;line-height:15px;color:#000;font-weight:bold;transform:scaleX(1.0076);transform-origin:0 50%;">Faras Ayu Islami</span>
<span class="t" style="left:433.00px;top:480px;font-size:13.6px;line-height:15px;color:#000;font-weight:bold;transform:scaleX(1.0444);transform-origin:0 50%;">3674066206000006</span>
<div class="r" style="left:431px;top:478px;width:0;height:0;border-top:5px solid #217346;border-right:5px solid transparent"></div>
<span class="t" style="left:571.70px;top:482px;font-size:11.6px;line-height:12px;color:#333;transform:scaleX(1.0669);transform-origin:0 50%;-webkit-text-stroke:0.3px #333;">Tenaga Ahli</span>
<span class="t" style="left:700.60px;top:482px;font-size:11.2px;line-height:12px;color:#2b2b2b;transform:scaleX(0.9557);transform-origin:100% 50%;-webkit-text-stroke:0.22px #2b2b2b;">6.757.500,00</span>
<span class="t" style="left:788.94px;top:482px;font-size:11.2px;line-height:12px;color:#2b2b2b;transform:scaleX(0.9557);transform-origin:100% 50%;-webkit-text-stroke:0.22px #2b2b2b;">168.937,50</span>
<span class="t" style="left:80.36px;top:501px;font-size:11.2px;line-height:12px;color:#2b2b2b;transform:scaleX(0.8528);transform-origin:50% 50%;-webkit-text-stroke:0.22px #2b2b2b;">TRUE</span>
<span class="t" style="left:147.67px;top:502px;font-size:9.6px;line-height:11px;color:#111;font-weight:bold;transform:scaleX(0.9700);transform-origin:50% 50%;">Andry Chang</span>
<span class="t" style="left:244.60px;top:499px;font-size:13.6px;line-height:15px;color:#000;font-weight:bold;transform:scaleX(1.0061);transform-origin:0 50%;">Andry Chang</span>
<span class="t" style="left:433.00px;top:499px;font-size:13.6px;line-height:15px;color:#000;font-weight:bold;transform:scaleX(1.0444);transform-origin:0 50%;">3171020104800002</span>
<div class="r" style="left:431px;top:497px;width:0;height:0;border-top:5px solid #217346;border-right:5px solid transparent"></div>
<span class="t" style="left:571.70px;top:501px;font-size:11.6px;line-height:12px;color:#333;transform:scaleX(1.0669);transform-origin:0 50%;-webkit-text-stroke:0.3px #333;">Tenaga Ahli</span>
<span class="t" style="left:751.13px;top:501px;font-size:11.2px;line-height:12px;color:#2b2b2b;-webkit-text-stroke:0.22px #2b2b2b;">-</span>
<span class="t" style="left:830.13px;top:501px;font-size:11.2px;line-height:12px;color:#2b2b2b;-webkit-text-stroke:0.22px #2b2b2b;">-</span>
<span class="t" style="left:80.36px;top:520px;font-size:11.2px;line-height:12px;color:#2b2b2b;transform:scaleX(0.8528);transform-origin:50% 50%;-webkit-text-stroke:0.22px #2b2b2b;">TRUE</span>
<span class="t" style="left:120.23px;top:521px;font-size:9.6px;line-height:11px;color:#111;font-weight:bold;transform:scaleX(0.9700);transform-origin:50% 50%;">Aulia Putri Pratiwi Wijaya</span>
<span class="t" style="left:244.60px;top:518px;font-size:13.6px;line-height:15px;color:#000;font-weight:bold;transform:scaleX(1.0048);transform-origin:0 50%;">Aulia Putri Pratiwi Wijaya</span>
<span class="t" style="left:433.00px;top:518px;font-size:13.6px;line-height:15px;color:#000;font-weight:bold;transform:scaleX(1.0509);transform-origin:0 50%;">3202167011020005</span>
<div class="r" style="left:431px;top:516px;width:0;height:0;border-top:5px solid #217346;border-right:5px solid transparent"></div>
<span class="t" style="left:571.70px;top:520px;font-size:11.6px;line-height:12px;color:#333;transform:scaleX(1.0669);transform-origin:0 50%;-webkit-text-stroke:0.3px #333;">Tenaga Ahli</span>
<span class="t" style="left:700.60px;top:520px;font-size:11.2px;line-height:12px;color:#2b2b2b;transform:scaleX(0.9557);transform-origin:100% 50%;-webkit-text-stroke:0.22px #2b2b2b;">7.516.761,00</span>
<span class="t" style="left:788.94px;top:520px;font-size:11.2px;line-height:12px;color:#2b2b2b;transform:scaleX(0.9557);transform-origin:100% 50%;-webkit-text-stroke:0.22px #2b2b2b;">187.919,03</span>
<span class="t" style="left:80.36px;top:539px;font-size:11.2px;line-height:12px;color:#2b2b2b;transform:scaleX(0.8528);transform-origin:50% 50%;-webkit-text-stroke:0.22px #2b2b2b;">TRUE</span>
<span class="t" style="left:125.43px;top:540px;font-size:9.6px;line-height:11px;color:#111;font-weight:bold;transform:scaleX(0.9700);transform-origin:50% 50%;">Lingga Jasmine Ashari</span>
<span class="t" style="left:244.60px;top:537px;font-size:13.6px;line-height:15px;color:#000;font-weight:bold;transform:scaleX(1.0102);transform-origin:0 50%;">Lingga Jasmine Ashari</span>
<span class="t" style="left:433.00px;top:537px;font-size:13.6px;line-height:15px;color:#000;font-weight:bold;transform:scaleX(1.0444);transform-origin:0 50%;">3173054512020003</span>
<div class="r" style="left:431px;top:535px;width:0;height:0;border-top:5px solid #217346;border-right:5px solid transparent"></div>
<span class="t" style="left:571.70px;top:539px;font-size:11.6px;line-height:12px;color:#333;transform:scaleX(1.0669);transform-origin:0 50%;-webkit-text-stroke:0.3px #333;">Tenaga Ahli</span>
<span class="t" style="left:700.60px;top:539px;font-size:11.2px;line-height:12px;color:#2b2b2b;transform:scaleX(0.9557);transform-origin:100% 50%;-webkit-text-stroke:0.22px #2b2b2b;">8.120.761,00</span>
<span class="t" style="left:788.94px;top:539px;font-size:11.2px;line-height:12px;color:#2b2b2b;transform:scaleX(0.9557);transform-origin:100% 50%;-webkit-text-stroke:0.22px #2b2b2b;">203.019,03</span>
<span class="t" style="left:80.36px;top:558px;font-size:11.2px;line-height:12px;color:#2b2b2b;transform:scaleX(0.8528);transform-origin:50% 50%;-webkit-text-stroke:0.22px #2b2b2b;">TRUE</span>
<span class="t" style="left:127.13px;top:559px;font-size:9.6px;line-height:11px;color:#111;font-weight:bold;transform:scaleX(0.9700);transform-origin:50% 50%;">Daniel Mardjono (Niel)</span>
<span class="t" style="left:244.60px;top:556px;font-size:13.6px;line-height:15px;color:#000;font-weight:bold;transform:scaleX(1.0685);transform-origin:0 50%;">Daniel Mardjono (Niel)</span>
<span class="t" style="left:433.00px;top:556px;font-size:13.6px;line-height:15px;color:#000;font-weight:bold;transform:scaleX(1.0509);transform-origin:0 50%;">3171030311940000</span>
<div class="r" style="left:431px;top:554px;width:0;height:0;border-top:5px solid #217346;border-right:5px solid transparent"></div>
<span class="t" style="left:571.70px;top:558px;font-size:11.6px;line-height:12px;color:#333;transform:scaleX(1.0669);transform-origin:0 50%;-webkit-text-stroke:0.3px #333;">Tenaga Ahli</span>
<span class="t" style="left:709.94px;top:558px;font-size:11.2px;line-height:12px;color:#2b2b2b;transform:scaleX(0.9557);transform-origin:100% 50%;-webkit-text-stroke:0.22px #2b2b2b;">180.000,00</span>
<span class="t" style="left:801.40px;top:558px;font-size:11.2px;line-height:12px;color:#2b2b2b;transform:scaleX(0.9557);transform-origin:100% 50%;-webkit-text-stroke:0.22px #2b2b2b;">4.500,00</span>
<span class="t" style="left:80.36px;top:577px;font-size:11.2px;line-height:12px;color:#2b2b2b;transform:scaleX(0.8528);transform-origin:50% 50%;-webkit-text-stroke:0.22px #2b2b2b;">TRUE</span>
<span class="t" style="left:138.22px;top:578px;font-size:9.6px;line-height:11px;color:#111;font-weight:bold;transform:scaleX(0.9700);transform-origin:50% 50%;">Rachella Anatasa</span>
<span class="t" style="left:244.60px;top:575px;font-size:13.6px;line-height:15px;color:#000;font-weight:bold;transform:scaleX(1.0515);transform-origin:0 50%;">Rachella Anatasa</span>
<span class="t" style="left:433.00px;top:575px;font-size:13.6px;line-height:15px;color:#000;font-weight:bold;transform:scaleX(1.0444);transform-origin:0 50%;">3174036703000000</span>
<div class="r" style="left:431px;top:573px;width:0;height:0;border-top:5px solid #217346;border-right:5px solid transparent"></div>
<span class="t" style="left:571.70px;top:577px;font-size:11.6px;line-height:12px;color:#333;transform:scaleX(1.0669);transform-origin:0 50%;-webkit-text-stroke:0.3px #333;">Tenaga Ahli</span>
<span class="t" style="left:751.13px;top:577px;font-size:11.2px;line-height:12px;color:#2b2b2b;-webkit-text-stroke:0.22px #2b2b2b;">-</span>
<span class="t" style="left:830.13px;top:577px;font-size:11.2px;line-height:12px;color:#2b2b2b;-webkit-text-stroke:0.22px #2b2b2b;">-</span>
<span class="t" style="left:80.36px;top:596px;font-size:11.2px;line-height:12px;color:#2b2b2b;transform:scaleX(0.8528);transform-origin:50% 50%;-webkit-text-stroke:0.22px #2b2b2b;">TRUE</span>
<span class="t" style="left:116.98px;top:597px;font-size:9.6px;line-height:11px;color:#111;font-weight:bold;transform:scaleX(0.9700);transform-origin:50% 50%;">Yunisa Puspita Dewi (Icha)</span>
<span class="t" style="left:244.60px;top:594px;font-size:13.6px;line-height:15px;color:#000;font-weight:bold;transform:scaleX(1.0237);transform-origin:0 50%;">Yunisa Puspita Dewi (Icha)</span>
<span class="t" style="left:433.00px;top:594px;font-size:13.6px;line-height:15px;color:#000;font-weight:bold;transform:scaleX(1.0444);transform-origin:0 50%;">3171014106000000</span>
<div class="r" style="left:431px;top:592px;width:0;height:0;border-top:5px solid #217346;border-right:5px solid transparent"></div>
<span class="t" style="left:571.70px;top:596px;font-size:11.6px;line-height:12px;color:#333;transform:scaleX(1.0669);transform-origin:0 50%;-webkit-text-stroke:0.3px #333;">Tenaga Ahli</span>
<span class="t" style="left:700.60px;top:596px;font-size:11.2px;line-height:12px;color:#2b2b2b;transform:scaleX(0.9557);transform-origin:100% 50%;-webkit-text-stroke:0.22px #2b2b2b;">1.260.000,00</span>
<span class="t" style="left:795.17px;top:596px;font-size:11.2px;line-height:12px;color:#2b2b2b;transform:scaleX(0.9557);transform-origin:100% 50%;-webkit-text-stroke:0.22px #2b2b2b;">31.500,00</span>
<span class="t" style="left:80.36px;top:615px;font-size:11.2px;line-height:12px;color:#2b2b2b;transform:scaleX(0.8528);transform-origin:50% 50%;-webkit-text-stroke:0.22px #2b2b2b;">TRUE</span>
<span class="t" style="left:138.32px;top:616px;font-size:9.6px;line-height:11px;color:#111;font-weight:bold;transform:scaleX(0.9700);transform-origin:50% 50%;">Regina Salsabilla</span>
<span class="t" style="left:244.60px;top:613px;font-size:13.6px;line-height:15px;color:#000;font-weight:bold;transform:scaleX(1.0271);transform-origin:0 50%;">Regina Salsabilla</span>
<span class="t" style="left:433.00px;top:613px;font-size:13.6px;line-height:15px;color:#000;font-weight:bold;transform:scaleX(1.0575);transform-origin:0 50%;">3201114804000000</span>
<div class="r" style="left:431px;top:611px;width:0;height:0;border-top:5px solid #217346;border-right:5px solid transparent"></div>
<span class="t" style="left:571.70px;top:615px;font-size:11.6px;line-height:12px;color:#333;transform:scaleX(1.0669);transform-origin:0 50%;-webkit-text-stroke:0.3px #333;">Tenaga Ahli</span>
<span class="t" style="left:700.60px;top:615px;font-size:11.2px;line-height:12px;color:#2b2b2b;transform:scaleX(0.9557);transform-origin:100% 50%;-webkit-text-stroke:0.22px #2b2b2b;">2.200.000,00</span>
<span class="t" style="left:795.17px;top:615px;font-size:11.2px;line-height:12px;color:#2b2b2b;transform:scaleX(0.9557);transform-origin:100% 50%;-webkit-text-stroke:0.22px #2b2b2b;">55.000,00</span>
<span class="t" style="left:80.36px;top:634px;font-size:11.2px;line-height:12px;color:#2b2b2b;transform:scaleX(0.8528);transform-origin:50% 50%;-webkit-text-stroke:0.22px #2b2b2b;">TRUE</span>
<span class="t" style="left:141.34px;top:635px;font-size:9.6px;line-height:11px;color:#111;font-weight:bold;transform:scaleX(0.9700);transform-origin:50% 50%;">Rizq Yuliansyah</span>
<span class="t" style="left:244.60px;top:632px;font-size:13.6px;line-height:15px;color:#000;font-weight:bold;transform:scaleX(0.9768);transform-origin:0 50%;">Rizq Yuliansyah</span>
<span class="t" style="left:433.00px;top:632px;font-size:13.6px;line-height:15px;color:#000;font-weight:bold;transform:scaleX(1.0444);transform-origin:0 50%;">3174105807010000</span>
<span class="t" style="left:571.70px;top:634px;font-size:11.6px;line-height:12px;color:#333;transform:scaleX(1.0669);transform-origin:0 50%;-webkit-text-stroke:0.3px #333;">Tenaga Ahli</span>
<span class="t" style="left:751.13px;top:634px;font-size:11.2px;line-height:12px;color:#2b2b2b;-webkit-text-stroke:0.22px #2b2b2b;">-</span>
<span class="t" style="left:830.13px;top:634px;font-size:11.2px;line-height:12px;color:#2b2b2b;-webkit-text-stroke:0.22px #2b2b2b;">-</span>
<span class="t" style="left:80.36px;top:653px;font-size:11.2px;line-height:12px;color:#2b2b2b;transform:scaleX(0.8528);transform-origin:50% 50%;-webkit-text-stroke:0.22px #2b2b2b;">TRUE</span>
<span class="t" style="left:166.60px;top:654px;font-size:9.6px;line-height:11px;color:#111;font-weight:bold;transform:scaleX(0.9700);transform-origin:50% 50%;">Iqbal</span>
<span class="t" style="left:244.60px;top:651px;font-size:13.6px;line-height:15px;color:#000;font-weight:bold;transform:scaleX(1.0682);transform-origin:0 50%;">Iqbal</span>
<span class="t" style="left:433.00px;top:651px;font-size:13.6px;line-height:15px;color:#000;font-weight:bold;transform:scaleX(1.0444);transform-origin:0 50%;">1471091605980000</span>
<span class="t" style="left:571.70px;top:653px;font-size:11.6px;line-height:12px;color:#333;transform:scaleX(1.0669);transform-origin:0 50%;-webkit-text-stroke:0.3px #333;">Tenaga Ahli</span>
<span class="t" style="left:709.94px;top:653px;font-size:11.2px;line-height:12px;color:#2b2b2b;transform:scaleX(0.9557);transform-origin:100% 50%;-webkit-text-stroke:0.22px #2b2b2b;">870.000,00</span>
<span class="t" style="left:795.17px;top:653px;font-size:11.2px;line-height:12px;color:#2b2b2b;transform:scaleX(0.9557);transform-origin:100% 50%;-webkit-text-stroke:0.22px #2b2b2b;">21.750,00</span>
<span class="t" style="left:80.36px;top:672px;font-size:11.2px;line-height:12px;color:#2b2b2b;transform:scaleX(0.8528);transform-origin:50% 50%;-webkit-text-stroke:0.22px #2b2b2b;">TRUE</span>
<span class="t" style="left:142.95px;top:673px;font-size:9.6px;line-height:11px;color:#111;font-weight:bold;transform:scaleX(0.9700);transform-origin:50% 50%;">Yohanna Harso</span>
<span class="t" style="left:244.60px;top:670px;font-size:13.6px;line-height:15px;color:#000;font-weight:bold;transform:scaleX(1.0117);transform-origin:0 50%;">Yohanna Harso</span>
<span class="t" style="left:433.00px;top:670px;font-size:13.6px;line-height:15px;color:#000;font-weight:bold;transform:scaleX(1.0444);transform-origin:0 50%;">3174086304860000</span>
<div class="r" style="left:431px;top:668px;width:0;height:0;border-top:5px solid #217346;border-right:5px solid transparent"></div>
<span class="t" style="left:571.70px;top:672px;font-size:11.6px;line-height:12px;color:#333;transform:scaleX(1.0669);transform-origin:0 50%;-webkit-text-stroke:0.3px #333;">Tenaga Ahli</span>
<span class="t" style="left:700.60px;top:672px;font-size:11.2px;line-height:12px;color:#2b2b2b;transform:scaleX(0.9557);transform-origin:100% 50%;-webkit-text-stroke:0.22px #2b2b2b;">4.680.000,00</span>
<span class="t" style="left:789.78px;top:672px;font-size:11.2px;line-height:12px;color:#2b2b2b;transform:scaleX(0.9557);transform-origin:100% 50%;-webkit-text-stroke:0.22px #2b2b2b;">117.000,00</span>
<span class="t" style="left:80.36px;top:691px;font-size:11.2px;line-height:12px;color:#2b2b2b;transform:scaleX(0.8528);transform-origin:50% 50%;-webkit-text-stroke:0.22px #2b2b2b;">TRUE</span>
<span class="t" style="left:136.72px;top:692px;font-size:9.6px;line-height:11px;color:#111;font-weight:bold;transform:scaleX(0.9700);transform-origin:50% 50%;">Niranjan Bharvani</span>
<span class="t" style="left:244.60px;top:689px;font-size:13.6px;line-height:15px;color:#000;font-weight:bold;transform:scaleX(0.9958);transform-origin:0 50%;">Niranjan Bharvani</span>
<span class="t" style="left:433.00px;top:689px;font-size:13.6px;line-height:15px;color:#e3181d;font-weight:bold;transform:scaleX(1.0509);transform-origin:0 50%;">3172022711970000</span>
<span class="t" style="left:571.30px;top:689px;font-size:13.6px;line-height:15px;color:#e3181d;font-weight:bold;transform:scaleX(1.0592);transform-origin:0 50%;">Pegawai Tetap</span>
<span class="t" style="left:751.13px;top:691px;font-size:11.2px;line-height:12px;color:#2b2b2b;-webkit-text-stroke:0.22px #2b2b2b;">-</span>
<span class="t" style="left:830.13px;top:691px;font-size:11.2px;line-height:12px;color:#2b2b2b;-webkit-text-stroke:0.22px #2b2b2b;">-</span>
<span class="t" style="left:80.36px;top:710px;font-size:11.2px;line-height:12px;color:#2b2b2b;transform:scaleX(0.8528);transform-origin:50% 50%;-webkit-text-stroke:0.22px #2b2b2b;">TRUE</span>
<span class="t" style="left:125.78px;top:711px;font-size:9.6px;line-height:11px;color:#111;font-weight:bold;transform:scaleX(0.9700);transform-origin:50% 50%;">Najla Purwita Fauziyah</span>
<span class="t" style="left:244.60px;top:708px;font-size:13.6px;line-height:15px;color:#e3181d;font-weight:bold;transform:scaleX(1.0103);transform-origin:0 50%;">Najla Purwita Fauziyah</span>
<span class="t" style="left:433.00px;top:708px;font-size:13.6px;line-height:15px;color:#e3181d;font-weight:bold;transform:scaleX(1.0444);transform-origin:0 50%;">3201076504020006</span>
<div class="r" style="left:431px;top:706px;width:0;height:0;border-top:5px solid #217346;border-right:5px solid transparent"></div>
<span class="t" style="left:571.30px;top:708px;font-size:13.6px;line-height:15px;color:#e3181d;font-weight:bold;transform:scaleX(1.0592);transform-origin:0 50%;">Pegawai Tetap</span>
<span class="t" style="left:700.60px;top:710px;font-size:11.2px;line-height:12px;color:#2b2b2b;transform:scaleX(0.9557);transform-origin:100% 50%;-webkit-text-stroke:0.22px #2b2b2b;">5.396.761,00</span>
<span class="t" style="left:830.13px;top:710px;font-size:11.2px;line-height:12px;color:#2b2b2b;-webkit-text-stroke:0.22px #2b2b2b;">-</span>
<span class="t" style="left:80.36px;top:729px;font-size:11.2px;line-height:12px;color:#2b2b2b;transform:scaleX(0.8528);transform-origin:50% 50%;-webkit-text-stroke:0.22px #2b2b2b;">TRUE</span>
<span class="t" style="left:163.44px;top:730px;font-size:9.6px;line-height:11px;color:#111;font-weight:bold;transform:scaleX(0.9700);transform-origin:50% 50%;">Winda</span>
<span class="t" style="left:244.60px;top:727px;font-size:13.6px;line-height:15px;color:#e3181d;font-weight:bold;transform:scaleX(1.0301);transform-origin:0 50%;">Winda</span>
<span class="t" style="left:433.00px;top:727px;font-size:13.6px;line-height:15px;color:#e3181d;font-weight:bold;transform:scaleX(1.0642);transform-origin:0 50%;">3201116811870004</span>
<div class="r" style="left:431px;top:725px;width:0;height:0;border-top:5px solid #217346;border-right:5px solid transparent"></div>
<span class="t" style="left:571.30px;top:727px;font-size:13.6px;line-height:15px;color:#e3181d;font-weight:bold;transform:scaleX(1.0592);transform-origin:0 50%;">Pegawai Tetap</span>
<span class="t" style="left:700.60px;top:729px;font-size:11.2px;line-height:12px;color:#2b2b2b;transform:scaleX(0.9557);transform-origin:100% 50%;-webkit-text-stroke:0.22px #2b2b2b;">3.000.000,00</span>
<span class="t" style="left:830.13px;top:729px;font-size:11.2px;line-height:12px;color:#2b2b2b;-webkit-text-stroke:0.22px #2b2b2b;">-</span>
<span class="t" style="left:80.36px;top:748px;font-size:11.2px;line-height:12px;color:#2b2b2b;transform:scaleX(0.8528);transform-origin:50% 50%;-webkit-text-stroke:0.22px #2b2b2b;">TRUE</span>
<span class="t" style="left:127.04px;top:749px;font-size:9.6px;line-height:11px;color:#111;font-weight:bold;transform:scaleX(0.9700);transform-origin:50% 50%;">Diah Rahayu Agustine</span>
<span class="t" style="left:244.60px;top:746px;font-size:13.6px;line-height:15px;color:#000;font-weight:bold;transform:scaleX(1.0074);transform-origin:0 50%;">Diah Rahayu Agustine</span>
<span class="t" style="left:433.00px;top:746px;font-size:13.6px;line-height:15px;color:#000;font-weight:bold;transform:scaleX(1.0444);transform-origin:0 50%;">3173085008051002</span>
<div class="r" style="left:431px;top:744px;width:0;height:0;border-top:5px solid #217346;border-right:5px solid transparent"></div>
<span class="t" style="left:571.30px;top:746px;font-size:13.6px;line-height:15px;color:#e3181d;font-weight:bold;transform:scaleX(1.0592);transform-origin:0 50%;">Pegawai Tetap</span>
<span class="t" style="left:751.13px;top:748px;font-size:11.2px;line-height:12px;color:#2b2b2b;-webkit-text-stroke:0.22px #2b2b2b;">-</span>
<span class="t" style="left:830.13px;top:748px;font-size:11.2px;line-height:12px;color:#2b2b2b;-webkit-text-stroke:0.22px #2b2b2b;">-</span></div></div>
<div class="r" style="left:1120px;top:813px;width:53px;height:17px;border:2px solid #217346"></div>
<div class="r" style="left:1173px;top:830px;width:6px;height:6px;background:#fff;"></div>
<div class="r" style="left:1174px;top:831px;width:5px;height:5px;background:#217346;"></div>
</div></div>
<div class="r" style="left:1899px;top:200px;width:21px;height:791px;background:#e9e9e9;"></div>
<div class="r" style="left:1898px;top:219px;width:1px;height:771px;background:#a3a3a3;"></div>
<div class="r" style="left:1902px;top:205px;width:15px;height:785px;background:#d5d5d5;"></div>
<div class="r" style="left:1902px;top:205px;width:13px;height:14px;background:#fff;border:1px solid #ababab"></div>
<svg class="r" style="left:1905px;top:209px;" width="8" height="5" viewBox="0 0 8 5"><path d="M0 4.5 L4 0.5 L8 4.5 Z" fill="#666"/></svg>
<div class="r" style="left:1902px;top:220px;width:13px;height:531px;background:#fff;border:1px solid #ababab"></div>
<div class="r" style="left:1902px;top:976px;width:13px;height:12px;background:#fff;border:1px solid #ababab"></div>
<svg class="r" style="left:1905px;top:981px;" width="8" height="5" viewBox="0 0 8 5"><path d="M0 0.5 H8 L4 4.5 Z" fill="#666"/></svg>
<div class="r" style="left:0px;top:990px;width:1920px;height:28px;background:#e6e6e6;"></div>
<div class="r" style="left:0px;top:990px;width:1899px;height:1px;background:#a6a6a6;"></div>
<svg class="r" style="left:26px;top:999px;" width="5" height="9" viewBox="0 0 5 9"><path d="M4.5 0.5 L0.5 4.5 L4.5 8.5 Z" fill="#c2c2c2"/></svg>
<svg class="r" style="left:55px;top:999px;" width="5" height="9" viewBox="0 0 5 9"><path d="M0.5 0.5 L4.5 4.5 L0.5 8.5 Z" fill="#c2c2c2"/></svg>
<div class="r" style="left:100px;top:990px;width:70px;height:24px;background:#fff;"></div>
<div class="r" style="left:100px;top:1013px;width:70px;height:2px;background:#217346;"></div>
<span class="t" style="left:111.38px;top:996px;font-size:13px;line-height:15px;color:#217346;font-weight:bold;transform:scaleX(0.9838);transform-origin:50% 50%;">resume</span>
<span class="t" style="left:181.35px;top:996px;font-size:13px;line-height:15px;color:#444;transform:scaleX(1.0078);transform-origin:50% 50%;">data</span>
<div class="r" style="left:219px;top:995px;width:1px;height:18px;background:#ababab;"></div>
<svg class="r" style="left:252px;top:994px;" width="18" height="18" viewBox="0 0 18 18"><circle cx="9" cy="9" r="7.6" fill="none" stroke="#777" stroke-width="1.1"/><path d="M9 5 V13 M5 9 H13" stroke="#777" stroke-width="1.4"/></svg>
<div class="r" style="left:1152px;top:1000px;width:1.5px;height:1.5px;background:#999;"></div>
<div class="r" style="left:1152px;top:1004px;width:1.5px;height:1.5px;background:#999;"></div>
<div class="r" style="left:1152px;top:1008px;width:1.5px;height:1.5px;background:#999;"></div>
<div class="r" style="left:1183px;top:997px;width:701px;height:15px;background:#d6d6d6;"></div>
<div class="r" style="left:1169px;top:997px;width:13px;height:13px;background:#fff;border:1px solid #ababab"></div>
<svg class="r" style="left:1173px;top:1000px;" width="5" height="8" viewBox="0 0 5 8"><path d="M4.5 0 L0.5 4 L4.5 8 Z" fill="#555"/></svg>
<div class="r" style="left:1184px;top:997px;width:681px;height:13px;background:#fff;border:1px solid #ababab"></div>
<div class="r" style="left:1884px;top:997px;width:13px;height:13px;background:#fff;border:1px solid #ababab"></div>
<svg class="r" style="left:1889px;top:1000px;" width="5" height="8" viewBox="0 0 5 8"><path d="M0.5 0 L4.5 4 L0.5 8 Z" fill="#555"/></svg>
<div class="r" style="left:0px;top:1018px;width:1920px;height:22px;background:#f3f3f3;"></div>
<div class="r" style="left:0px;top:1018px;width:1920px;height:1px;background:#dcdcdc;"></div>
<span class="t" style="left:7.00px;top:1022px;font-size:11.8px;line-height:14px;color:#333;transform:scaleX(0.9444);transform-origin:0 50%;-webkit-text-stroke:0.2px #333;">Select destination and press ENTER or choose Paste</span>
<div class="r" style="left:1620px;top:1019px;width:39px;height:21px;background:#d2d2d2;"></div>
<svg class="r" style="left:1632px;top:1022px;" width="15" height="14" viewBox="0 0 15 14"><rect x="0.5" y="0.5" width="13" height="12" fill="none" stroke="#555"/><path d="M0.5 4.5 H13.5 M0.5 8.5 H13.5 M5 0.5 V12.5 M9.5 0.5 V12.5" stroke="#555"/></svg>
<svg class="r" style="left:1673px;top:1022px;" width="15" height="14" viewBox="0 0 15 14"><rect x="0.5" y="0.5" width="13" height="12" fill="none" stroke="#555"/><rect x="3.5" y="3.5" width="7" height="6.5" fill="none" stroke="#555"/><path d="M5 5.5 H9 M5 7.5 H9" stroke="#555" stroke-width="0.8"/></svg>
<svg class="r" style="left:1713px;top:1022px;" width="15" height="14" viewBox="0 0 15 14"><rect x="0.5" y="0.5" width="13" height="12" fill="none" stroke="#555"/><path d="M5 0.5 V7.5 H9.5 V0.5" fill="none" stroke="#555"/></svg>
<div class="r" style="left:1745px;top:1028px;width:8px;height:1px;background:#555;"></div>
<div class="r" style="left:1759px;top:1028px;width:100px;height:1px;background:#999;"></div>
<div class="r" style="left:1809px;top:1025px;width:1px;height:7px;background:#999;"></div>
<div class="r" style="left:1799px;top:1023px;width:5px;height:11px;background:#555;"></div>
<div class="r" style="left:1863px;top:1028px;width:9px;height:1px;background:#555;"></div>
<div class="r" style="left:1867px;top:1024px;width:1px;height:9px;background:#555;"></div>
<span class="t" style="left:1885.00px;top:1022px;font-size:11px;line-height:12px;color:#444;transform:scaleX(0.9538);transform-origin:0 50%;">85%</span>
<div class="r" style="left:0;top:1040px;width:1920px;height:40px;background:linear-gradient(90deg,#25343d 0%,#233640 30%,#212f3f 60%,#1f2c3d 100%)"></div>
<div class="r" style="left:538px;top:1040px;width:44px;height:40px;background:rgba(255,255,255,0.19);"></div>
<div class="r" style="left:583px;top:1040px;width:3px;height:40px;background:rgba(255,255,255,0.13);"></div>
<div class="r" style="left:199px;top:1078px;width:40px;height:2px;background:#82b8e4;"></div>
<div class="r" style="left:346px;top:1078px;width:40px;height:2px;background:#82b8e4;"></div>
<div class="r" style="left:444px;top:1078px;width:40px;height:2px;background:#82b8e4;"></div>
<div class="r" style="left:493px;top:1078px;width:40px;height:2px;background:#82b8e4;"></div>
<div class="r" style="left:538px;top:1078px;width:48px;height:2px;background:#8cc4ee;"></div>
<div class="r" style="left:591px;top:1078px;width:39px;height:2px;background:#82b8e4;"></div>
<svg class="r" style="left:16px;top:1051px;" width="17" height="17" viewBox="0 0 17 17"><path d="M0 2.4 L6.9 1.4 V8 H0 Z M7.8 1.3 L17 0 V8 H7.8 Z M0 8.9 H6.9 V15.5 L0 14.5 Z M7.8 8.9 H17 V17 L7.8 15.7 Z" fill="#fff"/></svg>
<svg class="r" style="left:59px;top:1047px;" width="26" height="27" viewBox="0 0 26 27"><circle cx="14.5" cy="11" r="7.8" fill="none" stroke="#fff" stroke-width="2.2"/><path d="M9.3 16.8 L2.5 24" stroke="#fff" stroke-width="2.6" stroke-linecap="round"/></svg>
<svg class="r" style="left:111px;top:1051px;" width="18" height="18" viewBox="0 0 18 18"><circle cx="9" cy="9" r="7" fill="none" stroke="#fff" stroke-width="2"/></svg>
<svg class="r" style="left:159px;top:1051px;" width="18" height="17" viewBox="0 0 18 17"><rect x="1" y="4" width="10" height="9" fill="none" stroke="#fff" stroke-width="1.3"/><path d="M1 1.5 H11 M1 15.5 H11" stroke="#fff" stroke-width="1.3"/><path d="M14.5 1 V4.5 M14.5 7 V11 M14.5 13 V16.5" stroke="#fff" stroke-width="1.5"/><rect x="13.2" y="7.5" width="2.6" height="2.6" fill="#fff"/></svg>
<svg class="r" style="left:207px;top:1048px;" width="23" height="22" viewBox="0 0 23 22"><path d="M1 3 a1 1 0 0 1 1-1 H9 L11 4.5 H21 a1 1 0 0 1 1 1 V7 H1 Z" fill="#e9a82a"/><rect x="1" y="5.5" width="21" height="14" rx="1" fill="#fbd25e"/><rect x="1" y="12" width="21" height="7.5" fill="#f6c243"/><rect x="5" y="13" width="13" height="6.5" fill="#3f8fd6"/><rect x="8" y="16" width="7" height="3.5" fill="#fbd25e"/></svg>
<svg class="r" style="left:255px;top:1048px;" width="26" height="23" viewBox="0 0 26 23"><path d="M1 9 L13 0.5 L25 9 V22 H1 Z" fill="#0f6cbd"/><path d="M3.5 8.5 H22.5 V16 H3.5 Z" fill="#fff"/><path d="M1 9.2 L13 16.5 L25 9.2 V22.5 H1 Z" fill="#28a8ea"/><path d="M1 22.5 L13 13.8 L25 22.5 Z" fill="#39b5f3"/></svg>
<svg class="r" style="left:304px;top:1048px;" width="25" height="24" viewBox="0 0 25 24"><path d="M6.5 7 V5.5 a2.5 2.5 0 0 1 2.5 -2.5 H16 a2.5 2.5 0 0 1 2.5 2.5 V7" fill="none" stroke="#35a3d8" stroke-width="1.7"/><path d="M1 5.5 H24 V20 a3 3 0 0 1 -3 3 H4 a3 3 0 0 1 -3 -3 Z" fill="#f5f5f5"/><rect x="7.5" y="9" width="4.4" height="4.4" fill="#f25022"/><rect x="12.9" y="9" width="4.4" height="4.4" fill="#7fba00"/><rect x="7.5" y="14.4" width="4.4" height="4.4" fill="#00a4ef"/><rect x="12.9" y="14.4" width="4.4" height="4.4" fill="#ffb900"/></svg>
<svg class="r" style="left:354px;top:1048px;" width="24" height="24" viewBox="0 0 24 24"><circle cx="12" cy="12" r="11.5" fill="#e8344e"/><path d="M6.5 18 L12 5.5 L17.5 18" fill="none" stroke="#fff" stroke-width="2.2" stroke-linejoin="miter"/></svg>
<svg class="r" style="left:403px;top:1047px;" width="25" height="25" viewBox="0 0 25 25"><defs><linearGradient id="eg" x1="0.2" y1="0" x2="0.6" y2="1"><stop offset="0" stop-color="#2aa6e8"/><stop offset="0.55" stop-color="#1773cf"/><stop offset="1" stop-color="#0d4fa6"/></linearGradient><linearGradient id="eg2" x1="0" y1="0" x2="1" y2="1"><stop offset="0" stop-color="#2bc3d2"/><stop offset="0.6" stop-color="#4fd06c"/><stop offset="1" stop-color="#8be05a"/></linearGradient></defs><circle cx="12.3" cy="12.5" r="12" fill="url(#eg)"/><path d="M6 3 C11 -1 20 0 23.3 7 C25 11 24 14.5 21 16 C18 17.3 15 16 15.3 14 C16.5 12 16 9.5 13.5 8.3 C10.5 7 7.5 8.5 6.5 11 C4.8 8 4.5 5 6 3 Z" fill="url(#eg2)"/><path d="M8 13.5 C8 10.5 10.3 9.3 12.3 9.7 C14.5 10.2 15.2 12 14.5 13.8 C14 15.8 16 17.8 19.5 17.2 C21 17 22.5 16.2 23.2 15.2 C22 20.5 17.5 24.3 12.5 24.3 C9.3 21.8 7.8 17.5 8 13.5 Z" fill="#0b3f8f" opacity="0.85"/></svg>
<svg class="r" style="left:451px;top:1048px;" width="28" height="24" viewBox="0 0 28 24"><ellipse cx="13" cy="9" rx="11.3" ry="6.6" fill="#f6eef0" stroke="#c9808f" stroke-width="1.5" transform="rotate(-14 13 9)"/><ellipse cx="12" cy="8.4" rx="7.5" ry="3.6" fill="#fff" transform="rotate(-14 12 8.4)"/><path d="M11.5 4 L17.5 15 M18.5 6.5 L14 14.5" stroke="#9fc4e0" stroke-width="1.5"/><path d="M14 14.5 L12.8 17" stroke="#2f86cf" stroke-width="1.6"/><circle cx="12.3" cy="19" r="2.1" fill="none" stroke="#2f86cf" stroke-width="1.5"/><circle cx="19.5" cy="16.2" r="2.1" fill="none" stroke="#2f86cf" stroke-width="1.5"/></svg>
<svg class="r" style="left:501px;top:1047px;" width="26" height="26" viewBox="0 0 26 26"><circle cx="12" cy="12" r="11.5" fill="#fff"/><path d="M12 12 L2.05 6.25 A11.5 11.5 0 0 1 21.95 6.25 Z" fill="#ea4335"/><path d="M12 12 L21.95 6.25 A11.5 11.5 0 0 1 12 23.5 Z" fill="#fbbc05"/><path d="M12 12 L12 23.5 A11.5 11.5 0 0 1 2.05 6.25 Z" fill="#34a853"/><circle cx="12" cy="12" r="5.3" fill="#fff"/><circle cx="12" cy="12" r="4.2" fill="#4285f4"/><circle cx="19" cy="19.5" r="6" fill="#6b6b6b"/><circle cx="19" cy="18" r="2.2" fill="#8c8c8c"/><path d="M15 23 a4 3.5 0 0 1 8 0 Z" fill="#8c8c8c"/></svg>
<svg class="r" style="left:549px;top:1048px;" width="25" height="24" viewBox="0 0 25 24"><rect x="7" y="1" width="17" height="22" rx="1.5" fill="#21a366"/><rect x="15.5" y="1" width="8.5" height="7.3" fill="#33c481"/><rect x="7" y="8.3" width="8.5" height="7.3" fill="#107c41"/><rect x="15.5" y="8.3" width="8.5" height="7.3" fill="#21a366"/><rect x="7" y="15.6" width="17" height="7.4" fill="#185c37"/><rect x="0.5" y="5.5" width="13" height="13" rx="1.2" fill="#107c41"/><path d="M4 8.5 L10 15.5 M10 8.5 L4 15.5" stroke="#fff" stroke-width="1.7"/></svg>
<svg class="r" style="left:597px;top:1047px;" width="26" height="25" viewBox="0 0 26 25"><path d="M9.5 2 L20.5 3 L24.5 20 L1.5 22.5 Z" fill="#e9f1f5"/><path d="M10 3 L19.8 4 L22.8 18.5 L4 20.5 Z" fill="#8fc9e0"/><path d="M10 3 L14.5 3.5 L8 20 L4 20.5 Z" fill="#c4e4f0"/><path d="M20.5 3 L24.5 20 L22.5 22 L19.5 4 Z" fill="#a9b6bd"/><path d="M1.5 22.5 L24.5 20 L22.5 23.5 L3 24.5 Z" fill="#f6f9fa"/></svg>
<svg class="r" style="left:1468px;top:1051px;" width="18" height="18" viewBox="0 0 18 18"><circle cx="11.5" cy="4.5" r="2.7" fill="none" stroke="#fff" stroke-width="1.3"/><circle cx="5.5" cy="8" r="2.4" fill="none" stroke="#fff" stroke-width="1.3"/><path d="M1.5 16.5 C1.5 12.5 3.5 11.5 5.5 11.5 C7 11.5 8 12 8.5 13 M8.5 11.5 C9 9.5 10.5 9 11.5 9 C13.5 9 15 10 15.3 12" fill="none" stroke="#fff" stroke-width="1.3"/></svg>
<svg class="r" style="left:1540px;top:1047px;" width="28" height="26" viewBox="0 0 28 26"><path d="M6 17 a5 5 0 0 1 1-9.8 a6.5 6.5 0 0 1 12.2 1.2 a4.4 4.4 0 0 1 0.5 8.6 Z" fill="#e8eef5"/><path d="M9 17 a4 4 0 0 1 1-7.5 a5 5 0 0 1 9 1 a3.5 3.5 0 0 1 0 6.5 Z" fill="#b8c6d6"/><path d="M14 17 L17 17 L16 23 a1.6 1.6 0 0 1 -3 -0.3 Z" fill="#2f8ae0"/><circle cx="18" cy="6" r="5.2" fill="#e0322f"/></svg>
<span class="t" style="left:1555.78px;top:1050px;font-size:8px;line-height:9px;color:#fff;font-weight:bold;">1</span>
<span class="t" style="left:1573.00px;top:1053px;font-size:13.6px;line-height:15px;color:#fff;transform:scaleX(0.9379);transform-origin:0 50%;">26°C</span>
<span class="t" style="left:1611.50px;top:1053px;font-size:13.6px;line-height:15px;color:#fff;transform:scaleX(1.0179);transform-origin:0 50%;">Hujan ringan</span>
<svg class="r" style="left:1714px;top:1055px;" width="14" height="9" viewBox="0 0 14 9"><path d="M1 7.5 L7 1.5 L13 7.5" fill="none" stroke="#fff" stroke-width="1.3"/></svg>
<svg class="r" style="left:1740px;top:1051px;" width="18" height="18" viewBox="0 0 18 18"><path d="M3 13 C1 16 5 17 7 14 L14 3 a1.8 1.8 0 0 0 -3 -2 L5 10 C4 12 6.5 13.5 8 11.5 L12.5 4.5" fill="none" stroke="#fff" stroke-width="1.1"/><path d="M11 14 L15 14" stroke="#fff" stroke-width="1"/></svg>
<svg class="r" style="left:1768px;top:1053px;" width="25" height="14" viewBox="0 0 25 14"><rect x="0.7" y="0.7" width="23" height="12" rx="1" fill="none" stroke="#fff" stroke-width="1.1"/><path d="M3.5 4 H21 M3.5 6.8 H21" stroke="#fff" stroke-width="1.2" stroke-dasharray="1.4 1.1"/><path d="M6.5 9.8 H18" stroke="#fff" stroke-width="1.2"/></svg>
<span class="t" style="left:1816.94px;top:1044px;font-size:11.8px;line-height:14px;color:#fff;transform:scaleX(0.8974);transform-origin:50% 50%;">13:53</span>
<span class="t" style="left:1802.17px;top:1062px;font-size:11.8px;line-height:14px;color:#fff;transform:scaleX(0.9905);transform-origin:50% 50%;">31/01/2026</span>
<svg class="r" style="left:1878px;top:1048px;" width="20" height="18" viewBox="0 0 20 18"><path d="M1 1 H17 V12.5 H9 L5 16 V12.5 H1 Z" fill="#fff"/><path d="M4 4.5 H14 M4 7 H14 M4 9.5 H11" stroke="#25343d" stroke-width="1.1"/></svg>
<div class="r" style="left:1886px;top:1059px;width:15px;height:15px;border-radius:8px;background:#1f2c3d;border:1px solid #cfd6dd"></div>
<span class="t" style="left:1891.28px;top:1061px;font-size:10.5px;line-height:12px;color:#fff;">2</span>
<div class="r" style="left:1914px;top:1040px;width:1px;height:40px;background:#5c6975;"></div>
</div>
</body></html>
